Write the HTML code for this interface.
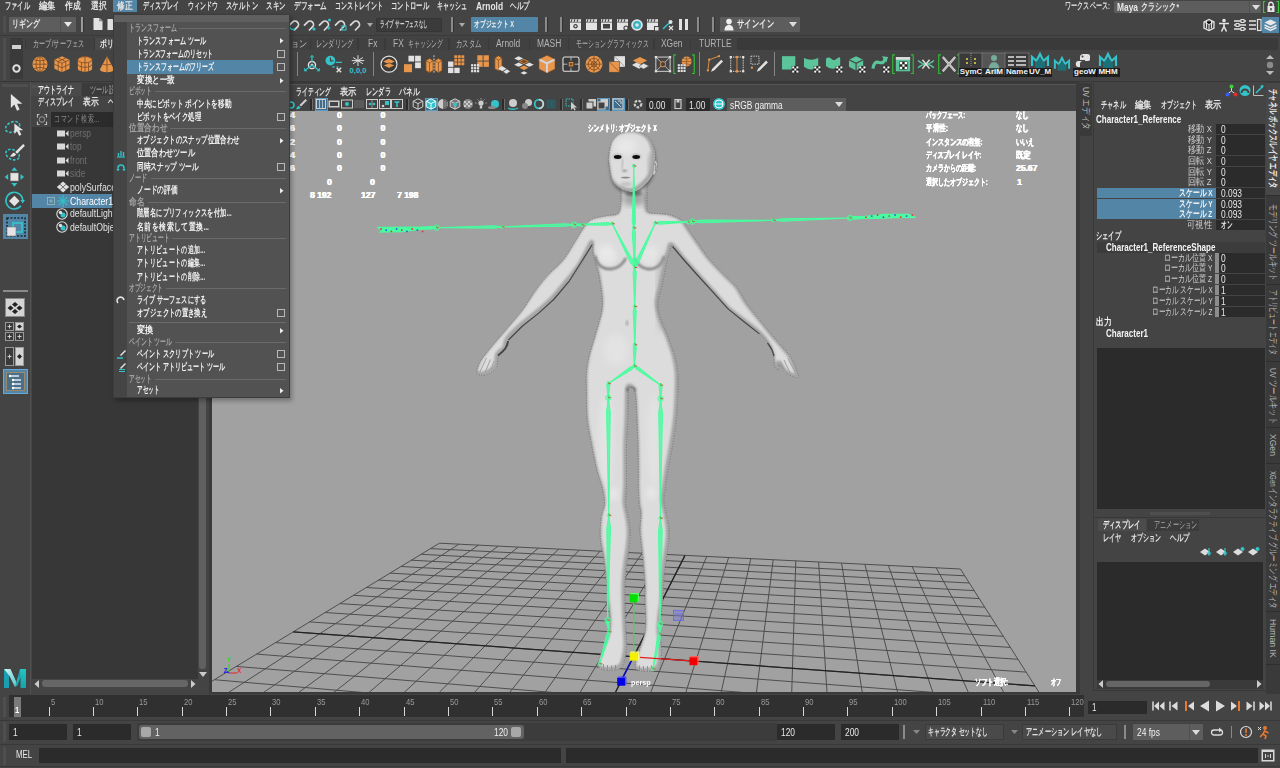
<!DOCTYPE html>
<html lang="ja">
<head>
<meta charset="utf-8">
<title>Autodesk Maya</title>
<style>
*{box-sizing:border-box;margin:0;padding:0}
html,body{width:1280px;height:768px;overflow:hidden;background:#444;font-family:"Liberation Sans",sans-serif;font-size:9px;color:#ddd}
.a{position:absolute}
.t{position:absolute;white-space:nowrap;overflow:visible;font-family:"Liberation Sans",sans-serif}
#root{position:absolute;left:0;top:0;width:1280px;height:768px;overflow:hidden;background:#444}
svg{overflow:visible}
</style>
</head>
<body>
<div id="root">

<!-- ===== TOP ===== -->
<div class="a" style="left:0px;top:0px;width:1280px;height:13px;background:#444;"></div>
<div class="a" style="left:113px;top:0px;width:24px;height:12px;background:#5285a6;"></div>
<div class="t" style="left:5px;top:0px;width:38.8px;text-align:justify;text-align-last:justify;text-justify:inter-character;line-height:12px;height:12px;font-size:9.5px;color:#e4e4e4;font-weight:bold;transform:scaleX(0.619);transform-origin:0 50%">ファイル</div>
<div class="t" style="left:39px;top:0px;width:19.4px;text-align:justify;text-align-last:justify;text-justify:inter-character;line-height:12px;height:12px;font-size:9.5px;color:#e4e4e4;font-weight:bold;transform:scaleX(0.825);transform-origin:0 50%">編集</div>
<div class="t" style="left:65px;top:0px;width:19.4px;text-align:justify;text-align-last:justify;text-justify:inter-character;line-height:12px;height:12px;font-size:9.5px;color:#e4e4e4;font-weight:bold;transform:scaleX(0.773);transform-origin:0 50%">作成</div>
<div class="t" style="left:91px;top:0px;width:19.4px;text-align:justify;text-align-last:justify;text-justify:inter-character;line-height:12px;height:12px;font-size:9.5px;color:#e4e4e4;font-weight:bold;transform:scaleX(0.773);transform-origin:0 50%">選択</div>
<div class="t" style="left:117px;top:0px;width:19.4px;text-align:justify;text-align-last:justify;text-justify:inter-character;line-height:12px;height:12px;font-size:9.5px;color:#e4e4e4;font-weight:bold;transform:scaleX(0.773);transform-origin:0 50%">修正</div>
<div class="t" style="left:143px;top:0px;width:58.1px;text-align:justify;text-align-last:justify;text-justify:inter-character;line-height:12px;height:12px;font-size:9.5px;color:#e4e4e4;font-weight:bold;transform:scaleX(0.602);transform-origin:0 50%">ディスプレイ</div>
<div class="t" style="left:188px;top:0px;width:48.5px;text-align:justify;text-align-last:justify;text-justify:inter-character;line-height:12px;height:12px;font-size:9.5px;color:#e4e4e4;font-weight:bold;transform:scaleX(0.598);transform-origin:0 50%">ウィンドウ</div>
<div class="t" style="left:226px;top:0px;width:48.5px;text-align:justify;text-align-last:justify;text-justify:inter-character;line-height:12px;height:12px;font-size:9.5px;color:#e4e4e4;font-weight:bold;transform:scaleX(0.639);transform-origin:0 50%">スケルトン</div>
<div class="t" style="left:266px;top:0px;width:29.1px;text-align:justify;text-align-last:justify;text-justify:inter-character;line-height:12px;height:12px;font-size:9.5px;color:#e4e4e4;font-weight:bold;transform:scaleX(0.653);transform-origin:0 50%">スキン</div>
<div class="t" style="left:294px;top:0px;width:48.5px;text-align:justify;text-align-last:justify;text-justify:inter-character;line-height:12px;height:12px;font-size:9.5px;color:#e4e4e4;font-weight:bold;transform:scaleX(0.66);transform-origin:0 50%">デフォーム</div>
<div class="t" style="left:335px;top:0px;width:77.5px;text-align:justify;text-align-last:justify;text-justify:inter-character;line-height:12px;height:12px;font-size:9.5px;color:#e4e4e4;font-weight:bold;transform:scaleX(0.606);transform-origin:0 50%">コンストレイント</div>
<div class="t" style="left:391px;top:0px;width:58.1px;text-align:justify;text-align-last:justify;text-justify:inter-character;line-height:12px;height:12px;font-size:9.5px;color:#e4e4e4;font-weight:bold;transform:scaleX(0.637);transform-origin:0 50%">コントロール</div>
<div class="t" style="left:437px;top:0px;width:48.5px;text-align:justify;text-align-last:justify;text-justify:inter-character;line-height:12px;height:12px;font-size:9.5px;color:#e4e4e4;font-weight:bold;transform:scaleX(0.598);transform-origin:0 50%">キャッシュ</div>
<div class="t" style="left:510px;top:0px;width:29.1px;text-align:justify;text-align-last:justify;text-justify:inter-character;line-height:12px;height:12px;font-size:9.5px;color:#e4e4e4;font-weight:bold;transform:scaleX(0.653);transform-origin:0 50%">ヘルプ</div>
<div class="t" style="left:476px;top:0px;line-height:12px;height:12px;font-size:10.5px;color:#e4e4e4;font-weight:bold;transform:scaleX(0.8);transform-origin:0 50%">Arnold</div>
<div class="t" style="left:1065px;top:0px;width:73.6px;text-align:justify;text-align-last:justify;text-justify:inter-character;line-height:12px;height:12px;font-size:9.5px;color:#d8d8d8;font-weight:bold;transform:scaleX(0.611);transform-origin:0 50%">ワークスペース:</div>
<div class="a" style="left:1114px;top:1px;width:147px;height:12px;background:#5d5d5d;border-radius:1px"></div>
<div class="a" style="left:1248.5px;top:1px;width:1px;height:12px;background:#505050;"></div>
<div class="t" style="left:1117px;top:1px;line-height:12px;height:12px;font-size:10.5px;color:#e8e8e8;font-weight:bold;transform:scaleX(0.8);transform-origin:0 50%">Maya</div>
<div class="t" style="left:1141px;top:1px;width:54.3px;text-align:justify;text-align-last:justify;text-justify:inter-character;line-height:12px;height:12px;font-size:9.5px;color:#e8e8e8;font-weight:bold;transform:scaleX(0.7);transform-origin:0 50%">クラシック*</div>
<svg class="a" style="left:1251.5px;top:5px;" width="7" height="4.5" viewBox="0 0 7 4.5"><path d="M0 0h8l-4 5z" fill="#ddd"/></svg>
<svg class="a" style="left:1262px;top:0px;" width="18" height="14" viewBox="0 0 18 14"><path d="M3.5 1.5h-2v11h2M14.500 1.5h2v11h-2" fill="none" stroke="#3fc23f" stroke-width="1.2"/><rect x="5.5" y="6" width="7" height="6" fill="#e6e6e6"/><path d="M6.800 6.500v-2a2.200 2.200 0 0 1 4.400 0v2" fill="none" stroke="#e6e6e6" stroke-width="1.400"/><rect x="8.300" y="8" width="1.400" height="2.500" fill="#444"/></svg>
<div class="a" style="left:0px;top:13px;width:1280px;height:23px;background:#444;"></div>
<div class="a" style="left:3px;top:16px;width:3px;height:17px;background:transparent;background-image:radial-gradient(#5a5a5a 0.600px,transparent 0.800px);background-size:2px 2px"></div>
<div class="a" style="left:9px;top:17px;width:67px;height:15px;background:#5d5d5d;border-radius:1px"></div>
<div class="a" style="left:60px;top:17px;width:1px;height:15px;background:#505050;"></div>
<div class="t" style="left:12px;top:18px;width:38.8px;text-align:justify;text-align-last:justify;text-justify:inter-character;line-height:12px;height:12px;font-size:9.5px;color:#e8e8e8;font-weight:bold;transform:scaleX(0.696);transform-origin:0 50%">リギング</div>
<svg class="a" style="left:64px;top:22px;" width="8" height="5" viewBox="0 0 8 5"><path d="M0 0h8l-4 5z" fill="#e8e8e8"/></svg>
<div class="a" style="left:81px;top:17px;width:2px;height:15px;background:#9a9a9a;"></div>
<div class="a" style="left:83px;top:17px;width:1px;height:15px;background:#333;"></div>
<svg class="a" style="left:92px;top:17px;" width="12" height="14" viewBox="0 0 12 14"><path d="M1.500 1h6l3 3v9h-9z" fill="#e2e2e2"/><path d="M7.500 1v3h3" fill="#999" stroke="#777" stroke-width=".6"/></svg>
<svg class="a" style="left:106px;top:17px;" width="12" height="14" viewBox="0 0 12 14"><path d="M1.500 2h5l1.500 2h3v9h-9.500z" fill="#e2e2e2"/></svg>
<svg class="a" style="left:287.8px;top:18px;" width="14" height="13" viewBox="0 0 14 13"><g transform="rotate(45 7 6.500)"><path d="M3.500 11.500v-5a3.500 3.500 0 0 1 7 0v5" fill="none" stroke="#dadada" stroke-width="1.700"/></g><path d="M1.500 8.500q1 4 5.500 2.500" fill="none" stroke="#34c3c9" stroke-width="1.400"/></svg>
<svg class="a" style="left:302.6px;top:18px;" width="14" height="13" viewBox="0 0 14 13"><g transform="rotate(45 7 6.500)"><path d="M3.500 11.500v-5a3.500 3.500 0 0 1 7 0v5" fill="none" stroke="#dadada" stroke-width="1.700"/></g><circle cx="11" cy="11" r="1.600" fill="#34c3c9"/></svg>
<svg class="a" style="left:318px;top:18px;" width="14" height="13" viewBox="0 0 14 13"><g transform="rotate(45 7 6.500)"><path d="M3.500 11.500v-5a3.500 3.500 0 0 1 7 0v5" fill="none" stroke="#dadada" stroke-width="1.700"/></g><circle cx="11.500" cy="2" r="1.500" fill="#34c3c9"/><path d="M9 10h3.500M10.800 8.300v3.500" stroke="#34c3c9" stroke-width="1"/></svg>
<svg class="a" style="left:333.5px;top:18px;" width="14" height="13" viewBox="0 0 14 13"><g transform="rotate(45 7 6.500)"><path d="M3.500 11.500v-5a3.500 3.500 0 0 1 7 0v5" fill="none" stroke="#dadada" stroke-width="1.700"/></g><rect x="8" y="8" width="4" height="4" fill="none" stroke="#34c3c9" stroke-width="1.100"/></svg>
<svg class="a" style="left:349px;top:18px;" width="14" height="13" viewBox="0 0 14 13"><g transform="rotate(45 7 6.500)"><path d="M3.500 11.500v-5a3.500 3.500 0 0 1 7 0v5" fill="none" stroke="#dadada" stroke-width="1.700"/></g></svg>
<svg class="a" style="left:367px;top:23px;" width="6" height="4" viewBox="0 0 6 4"><path d="M0 0h6l-3 4z" fill="#aaa"/></svg>
<div class="a" style="left:376px;top:18px;width:66px;height:14px;background:#3b3b3b;border:1px solid #353535;border-radius:1px"></div>
<div class="t" style="left:380px;top:18px;width:94.6px;text-align:justify;text-align-last:justify;text-justify:inter-character;line-height:12px;height:12px;font-size:9px;color:#cfcfcf;font-weight:bold;transform:scaleX(0.507);transform-origin:0 50%">ライブ サーフェスなし</div>
<div class="a" style="left:451px;top:17px;width:2px;height:15px;background:#8a8a8a;"></div>
<div class="a" style="left:453px;top:17px;width:1px;height:15px;background:#333;"></div>
<svg class="a" style="left:459px;top:23px;" width="6" height="4" viewBox="0 0 6 4"><path d="M0 0h6l-3 4z" fill="#aaa"/></svg>
<div class="a" style="left:471px;top:17px;width:67px;height:15px;background:#5285a6;border-radius:1px"></div>
<div class="t" style="left:474px;top:18px;width:63.3px;text-align:justify;text-align-last:justify;text-justify:inter-character;line-height:12px;height:12px;font-size:9px;color:#f0f0f0;font-weight:bold;transform:scaleX(0.632);transform-origin:0 50%">オブジェクト X</div>
<div class="a" style="left:545px;top:17px;width:2px;height:15px;background:#8a8a8a;"></div>
<div class="a" style="left:547px;top:17px;width:1px;height:15px;background:#333;"></div>
<div class="a" style="left:560px;top:17px;width:2px;height:15px;background:#8a8a8a;"></div>
<div class="a" style="left:562px;top:17px;width:1px;height:15px;background:#333;"></div>
<div class="a" style="left:697px;top:17px;width:2px;height:15px;background:#8a8a8a;"></div>
<div class="a" style="left:699px;top:17px;width:1px;height:15px;background:#333;"></div>
<div class="a" style="left:712px;top:17px;width:2px;height:15px;background:#8a8a8a;"></div>
<div class="a" style="left:714px;top:17px;width:1px;height:15px;background:#333;"></div>
<svg class="a" style="left:569px;top:18px;" width="13" height="13" viewBox="0 0 13 13"><rect x="1" y="4.500" width="11" height="7.500" fill="#e4e4e4"/><path d="M1 1.200h11v2.600h-11z" fill="#e4e4e4"/><path d="M3 1.200l-1 2.600M6 1.200l-1 2.600M9 1.200l-1 2.600" stroke="#444" stroke-width="1.100"/><circle cx="6.500" cy="8.200" r="2.200" fill="#444"/><circle cx="6.500" cy="8.200" r="1" fill="#e4e4e4"/></svg>
<svg class="a" style="left:585px;top:18px;" width="13" height="13" viewBox="0 0 13 13"><rect x="1" y="4.500" width="11" height="7.500" fill="#e4e4e4"/><path d="M1 1.200h11v2.600h-11z" fill="#e4e4e4"/><path d="M3 1.200l-1 2.600M6 1.200l-1 2.600M9 1.200l-1 2.600" stroke="#444" stroke-width="1.100"/></svg>
<svg class="a" style="left:600px;top:18px;" width="13" height="13" viewBox="0 0 13 13"><rect x="1" y="4.500" width="11" height="7.500" fill="#e4e4e4"/><path d="M1 1.200h11v2.600h-11z" fill="#e4e4e4"/><path d="M3 1.200l-1 2.600M6 1.200l-1 2.600M9 1.200l-1 2.600" stroke="#444" stroke-width="1.100"/><rect x="3" y="6" width="7" height="4.500" fill="#444"/></svg>
<svg class="a" style="left:616px;top:18px;" width="13" height="13" viewBox="0 0 13 13"><rect x="1" y="4.500" width="11" height="7.500" fill="#e4e4e4"/><path d="M1 1.200h11v2.600h-11z" fill="#e4e4e4"/><path d="M3 1.200l-1 2.600M6 1.200l-1 2.600M9 1.200l-1 2.600" stroke="#444" stroke-width="1.100"/><circle cx="10" cy="10" r="2.600" fill="#444"/><circle cx="10" cy="10" r="1.500" fill="#e4e4e4"/></svg>
<svg class="a" style="left:630px;top:18px;" width="14" height="14" viewBox="0 0 14 14"><circle cx="7" cy="7" r="5.800" fill="#e4e4e4"/><circle cx="7" cy="7" r="4" fill="#34b4c4"/><circle cx="7" cy="7" r="1.800" fill="#e4e4e4"/></svg>
<svg class="a" style="left:646px;top:18px;" width="13" height="13" viewBox="0 0 13 13"><rect x="1" y="4.500" width="11" height="7.500" fill="#e4e4e4"/><path d="M1 1.200h11v2.600h-11z" fill="#e4e4e4"/><path d="M3 1.200l-1 2.600M6 1.200l-1 2.600M9 1.200l-1 2.600" stroke="#444" stroke-width="1.100"/><rect x="8" y="8" width="5" height="5" fill="#444"/><rect x="9" y="9" width="3.500" height="3.500" fill="#e4e4e4"/></svg>
<svg class="a" style="left:661px;top:18px;" width="14" height="13" viewBox="0 0 14 13"><path d="M2 11l4-4M6 7l5-4" stroke="#34c3c9" stroke-width="1.600"/><circle cx="9.500" cy="4" r="2" fill="#e4e4e4"/><path d="M8 8l4 4M12 8l-4 4" stroke="#e4e4e4" stroke-width="1.200"/></svg>
<div class="a" style="left:679px;top:19px;width:3px;height:11px;background:#e4e4e4;"></div>
<div class="a" style="left:685px;top:19px;width:3px;height:11px;background:#e4e4e4;"></div>
<div class="a" style="left:720px;top:17px;width:80px;height:15px;background:#5d5d5d;border-radius:1px"></div>
<svg class="a" style="left:724px;top:18px;" width="10" height="13" viewBox="0 0 10 13"><circle cx="5" cy="3.600" r="2.800" fill="#efefef"/><path d="M0.500 12.500c0-4 2-5.500 4.500-5.500s4.500 1.500 4.500 5.500z" fill="#efefef"/></svg>
<div class="t" style="left:737px;top:18px;width:51.0px;text-align:justify;text-align-last:justify;text-justify:inter-character;line-height:12px;height:12px;font-size:10px;color:#f0f0f0;font-weight:bold;transform:scaleX(0.725);transform-origin:0 50%">サインイン</div>
<svg class="a" style="left:789px;top:22px;" width="8" height="5" viewBox="0 0 8 5"><path d="M0 0h8l-4 5z" fill="#ddd"/></svg>
<svg class="a" style="left:1202px;top:18px;" width="14" height="14" viewBox="0 0 14 14"><path d="M2 4l5-2.500 5 2.500v6l-5 2.500-5-2.500z" fill="none" stroke="#e4e4e4" stroke-width="1.300"/><path d="M2 4l5 2.500 5-2.500M7 6.500v6M4.500 2.800v7.500M9.500 2.800v7.500" stroke="#e4e4e4" stroke-width="1"/></svg>
<svg class="a" style="left:1217px;top:18px;" width="14" height="14" viewBox="0 0 14 14"><circle cx="7" cy="2.500" r="1.800" fill="#e4e4e4"/><path d="M2 5.500h10M7 5v4M7 8.500l-2.500 5M7 8.500l2.500 5" stroke="#e4e4e4" stroke-width="1.600" fill="none"/></svg>
<svg class="a" style="left:1233px;top:18px;" width="14" height="14" viewBox="0 0 14 14"><path d="M1 3h12M1 7h12M1 11h12" stroke="#e4e4e4" stroke-width="1.600"/><rect x="8" y="1.500" width="3" height="3" fill="#444" stroke="#e4e4e4"/><rect x="3" y="5.500" width="3" height="3" fill="#444" stroke="#e4e4e4"/><rect x="8" y="9.500" width="3" height="3" fill="#444" stroke="#e4e4e4"/></svg>
<svg class="a" style="left:1248px;top:18px;" width="14" height="14" viewBox="0 0 14 14"><path d="M1 3h7M1 7h7M1 11h7" stroke="#e4e4e4" stroke-width="1.600"/><rect x="9.500" y="1.500" width="3.500" height="11" fill="none" stroke="#e4e4e4" stroke-width="1.200"/></svg>
<div class="a" style="left:1262px;top:17px;width:17px;height:16px;background:#5285a6;"></div>
<svg class="a" style="left:1263px;top:18px;" width="15" height="14" viewBox="0 0 15 14"><path d="M7.500 1.500l6 3-6 3-6-3z" fill="#e8e8e8"/><path d="M1.500 7l6 3 6-3M1.500 9.500l6 3 6-3" fill="none" stroke="#e8e8e8" stroke-width="1.400"/></svg>
<!-- ===== SHELF ===== -->
<div class="a" style="left:0px;top:36px;width:1280px;height:46px;background:#444;"></div>
<div class="a" style="left:0px;top:34.5px;width:1280px;height:1.5px;background:#3a3a3a;"></div>
<div class="a" style="left:25px;top:38px;width:1253px;height:11.5px;background:#3a3a3a;"></div>
<div class="a" style="left:3px;top:38px;width:3px;height:42px;background:transparent;background-image:radial-gradient(#5a5a5a 0.600px,transparent 0.800px);background-size:2px 2px"></div>
<div class="a" style="left:10px;top:38px;width:13px;height:41px;background:#3a3a3a;"></div>
<div class="a" style="left:12px;top:45px;width:9px;height:3.5px;background:#cfcfcf;"></div>
<svg class="a" style="left:11px;top:63px;" width="11" height="11" viewBox="0 0 11 11"><circle cx="5.500" cy="5.500" r="3.200" fill="none" stroke="#e0e0e0" stroke-width="2"/></svg>
<div class="a" style="left:25.5px;top:38px;width:68.0px;height:11.5px;background:#414141;"></div>
<div class="t" style="left:32.5px;top:37px;width:83.3px;text-align:justify;text-align-last:justify;text-justify:inter-character;line-height:13px;height:13px;font-size:9.5px;color:#b4b4b4;font-weight:normal;transform:scaleX(0.618);transform-origin:0 50%">カーブ/サーフェス</div>
<div class="a" style="left:95.0px;top:38px;width:52.0px;height:11.5px;background:#4a4a4a;"></div>
<div class="t" style="left:99.5px;top:37px;width:38.8px;text-align:justify;text-align-last:justify;text-justify:inter-character;line-height:13px;height:13px;font-size:9.5px;color:#f0f0f0;font-weight:bold;transform:scaleX(0.683);transform-origin:0 50%">ポリゴン</div>
<div class="a" style="left:243.5px;top:38px;width:66.0px;height:11.5px;background:#414141;"></div>
<div class="t" style="left:250px;top:37px;width:67.8px;text-align:justify;text-align-last:justify;text-justify:inter-character;line-height:13px;height:13px;font-size:9.5px;color:#b4b4b4;font-weight:normal;transform:scaleX(0.811);transform-origin:0 50%">アニメーション</div>
<div class="a" style="left:311.0px;top:38px;width:46.0px;height:11.5px;background:#414141;"></div>
<div class="t" style="left:316px;top:37px;width:58.1px;text-align:justify;text-align-last:justify;text-justify:inter-character;line-height:13px;height:13px;font-size:9.5px;color:#b4b4b4;font-weight:normal;transform:scaleX(0.62);transform-origin:0 50%">レンダリング</div>
<div class="a" style="left:358.5px;top:38px;width:25.5px;height:11.5px;background:#414141;"></div>
<div class="t" style="left:368px;top:37px;line-height:13px;height:13px;font-size:10px;color:#b4b4b4;font-weight:normal;transform:scaleX(0.84);transform-origin:0 50%">Fx</div>
<div class="a" style="left:385.5px;top:38px;width:62.5px;height:11.5px;background:#414141;"></div>
<div class="t" style="left:393px;top:37px;line-height:13px;height:13px;font-size:10px;color:#b4b4b4;font-weight:normal;transform:scaleX(0.84);transform-origin:0 50%">FX</div>
<div class="t" style="left:408px;top:37px;width:58.1px;text-align:justify;text-align-last:justify;text-justify:inter-character;line-height:13px;height:13px;font-size:9.5px;color:#b4b4b4;font-weight:normal;transform:scaleX(0.585);transform-origin:0 50%">キャッシング</div>
<div class="a" style="left:449.5px;top:38px;width:38.0px;height:11.5px;background:#414141;"></div>
<div class="t" style="left:456px;top:37px;width:38.8px;text-align:justify;text-align-last:justify;text-justify:inter-character;line-height:13px;height:13px;font-size:9.5px;color:#b4b4b4;font-weight:normal;transform:scaleX(0.644);transform-origin:0 50%">カスタム</div>
<div class="a" style="left:489.0px;top:38px;width:39.5px;height:11.5px;background:#414141;"></div>
<div class="t" style="left:496px;top:37px;line-height:13px;height:13px;font-size:10px;color:#b4b4b4;font-weight:normal;transform:scaleX(0.84);transform-origin:0 50%">Arnold</div>
<div class="a" style="left:530.0px;top:38px;width:37.5px;height:11.5px;background:#414141;"></div>
<div class="t" style="left:537px;top:37px;line-height:13px;height:13px;font-size:10px;color:#b4b4b4;font-weight:normal;transform:scaleX(0.84);transform-origin:0 50%">MASH</div>
<div class="a" style="left:569.0px;top:38px;width:84.0px;height:11.5px;background:#414141;"></div>
<div class="t" style="left:576px;top:37px;width:119.2px;text-align:justify;text-align-last:justify;text-justify:inter-character;line-height:13px;height:13px;font-size:9.5px;color:#b4b4b4;font-weight:normal;transform:scaleX(0.596);transform-origin:0 50%">モーション グラフィックス</div>
<div class="a" style="left:654.5px;top:38px;width:35.0px;height:11.5px;background:#414141;"></div>
<div class="t" style="left:661px;top:37px;line-height:13px;height:13px;font-size:10px;color:#b4b4b4;font-weight:normal;transform:scaleX(0.84);transform-origin:0 50%">XGen</div>
<div class="a" style="left:691.0px;top:38px;width:45.5px;height:11.5px;background:#414141;"></div>
<div class="t" style="left:699px;top:37px;line-height:13px;height:13px;font-size:10px;color:#b4b4b4;font-weight:normal;transform:scaleX(0.84);transform-origin:0 50%">TURTLE</div>
<svg class="a" style="left:27.5px;top:52px;" width="24" height="24" viewBox="0 0 24 24"><g transform="translate(1.300 1.500) scale(.89)"><ellipse cx="12" cy="12" rx="8.500" ry="8.500" fill="#e8964c"/><path d="M3.500 12h17M12 3.500v17M5 7q7 3 14 0M5 17q7-3 14 0" stroke="#7a4a1f" stroke-width=".9" fill="none"/><ellipse cx="12" cy="12" rx="4.500" ry="8.500" fill="none" stroke="#7a4a1f" stroke-width=".9"/></g></svg>
<svg class="a" style="left:50px;top:52px;" width="24" height="24" viewBox="0 0 24 24"><g transform="translate(1.300 1.500) scale(.89)"><path d="M12 3l8.500 4v10l-8.500 4-8.500-4v-10z" fill="#e8964c"/><path d="M3.500 7l8.500 4 8.500-4M12 11v10M3.500 12l8.500 4 8.500-4M7.700 5l8.500 4v10M16.300 5l-8.500 4v10" stroke="#7a4a1f" stroke-width=".9" fill="none"/></g></svg>
<svg class="a" style="left:73px;top:52px;" width="24" height="24" viewBox="0 0 24 24"><g transform="translate(1.300 1.500) scale(.89)"><path d="M4 7v10a8 3.500 0 0 0 16 0v-10z" fill="#e8964c"/><ellipse cx="12" cy="7" rx="8" ry="3.500" fill="#e8964c" stroke="#7a4a1f" stroke-width=".9"/><path d="M4 12a8 3.500 0 0 0 16 0M12 3.500v7M8 10.500v10M16 10.500v10M12 10.500v10" stroke="#7a4a1f" stroke-width=".9" fill="none"/></g></svg>
<svg class="a" style="left:95px;top:52px;" width="24" height="24" viewBox="0 0 24 24"><g transform="translate(1.300 1.500) scale(.89)"><path d="M12 3l8 15a8 3 0 0 1-16 0z" fill="#e8964c"/><path d="M12 3v18M7 12q5 2 10 0" stroke="#7a4a1f" stroke-width=".9" fill="none"/></g></svg>
<div class="a" style="left:297px;top:52px;width:1px;height:24px;background:#858585;"></div>
<svg class="a" style="left:300px;top:52px;" width="24" height="24" viewBox="0 0 24 24"><g transform="translate(1.300 1.500) scale(.89)"><circle cx="12" cy="13" r="4" fill="none" stroke="#e2e2e2" stroke-width="1.500"/><circle cx="12" cy="13" r="1.600" fill="#e2e2e2"/><path d="M12 2.500v7M12 13l-8 6M12 13l8 6" stroke="#34c3c9" stroke-width="1.400"/><path d="M10 4.500l2-2.500 2 2.500M3.500 16.500l0 3h3M20.500 16.500v3h-3" stroke="#34c3c9" stroke-width="1.100" fill="none"/></g></svg>
<svg class="a" style="left:322px;top:52px;" width="24" height="24" viewBox="0 0 24 24"><g transform="translate(1.300 1.500) scale(.89)"><circle cx="8" cy="8" r="5.500" fill="#34c3c9"/><path d="M8 4.500v3.800h3.300" stroke="#444" stroke-width="1.300" fill="none"/><path d="M14 10h7M10 15h3M15 15h2" stroke="#34c3c9" stroke-width="1.200"/><path d="M15 16l5 5M20 16l-5 5" stroke="#e2e2e2" stroke-width="1.600"/></g></svg>
<svg class="a" style="left:346px;top:52px;" width="24" height="24" viewBox="0 0 24 24"><g transform="translate(1.300 1.500) scale(.89)"><path d="M12 2v12M6.500 4.500l11 7M17.500 4.500l-11 7M5 8h14" stroke="#e2e2e2" stroke-width="1.100"/><text x="12" y="22" font-family="Liberation Sans" font-size="8.500" font-weight="bold" fill="#34c3c9" text-anchor="middle">0,0,0</text></g></svg>
<div class="a" style="left:373px;top:52px;width:1px;height:24px;background:#858585;"></div>
<svg class="a" style="left:377px;top:52px;" width="24" height="24" viewBox="0 0 24 24"><g transform="translate(1.300 1.500) scale(.89)"><circle cx="12" cy="12" r="9" fill="#3a3a3a" stroke="#e2e2e2" stroke-width="1.300"/><path d="M12 6l6.500 3-6.500 3-6.500-3z" fill="#e8964c"/><path d="M12 10.500l6.500 3-6.500 3-6.500-3z" fill="#e8964c" stroke="#3a3a3a" stroke-width=".7"/></g></svg>
<svg class="a" style="left:400px;top:52px;" width="24" height="24" viewBox="0 0 24 24"><g transform="translate(1.300 1.500) scale(.89)"><rect x="8" y="2.500" width="6.500" height="6.500" fill="#e2e2e2"/><rect x="15.500" y="2.500" width="6.500" height="6.500" fill="#e2e2e2"/><rect x="15.500" y="10" width="6.500" height="6.500" fill="#e2e2e2"/><rect x="3" y="12" width="9" height="9" fill="#e8964c"/></g></svg>
<svg class="a" style="left:422px;top:52px;" width="24" height="24" viewBox="0 0 24 24"><g transform="translate(1.300 1.500) scale(.89)"><path d="M3 8l4-2.500 4 2.500v11l-4 2.500-4-2.500z" fill="#e8964c" stroke="#7a4a1f" stroke-width=".8"/><path d="M13 8l4-2.500 4 2.500v11l-4 2.500-4-2.500z" fill="#e8964c" stroke="#7a4a1f" stroke-width=".8"/><path d="M3 8l4 2.500 4-2.500M7 10.500v11M13 8l4 2.500 4-2.500M17 10.500v11" stroke="#7a4a1f" stroke-width=".8" fill="none"/><path d="M12 2v21" stroke="#e2e2e2" stroke-width="1" stroke-dasharray="2 1.500"/></g></svg>
<svg class="a" style="left:445px;top:52px;" width="24" height="24" viewBox="0 0 24 24"><g transform="translate(1.300 1.500) scale(.89)"><rect x="9" y="2" width="3.2" height="3.2" fill="#e8964c"/><rect x="9" y="6" width="3.2" height="3.2" fill="#e8964c"/><rect x="9" y="10" width="3.2" height="3.2" fill="#e8964c"/><rect x="13" y="2" width="3.2" height="3.2" fill="#e8964c"/><rect x="13" y="6" width="3.2" height="3.2" fill="#e8964c"/><rect x="13" y="10" width="3.2" height="3.2" fill="#e8964c"/><rect x="17" y="2" width="3.2" height="3.2" fill="#e8964c"/><rect x="17" y="6" width="3.2" height="3.2" fill="#e8964c"/><rect x="17" y="10" width="3.2" height="3.2" fill="#e8964c"/><rect x="2" y="9" width="6" height="6" fill="#e2e2e2"/><rect x="2" y="16" width="6" height="6" fill="#e2e2e2"/><rect x="9" y="16" width="6" height="6" fill="#e2e2e2"/></g></svg>
<svg class="a" style="left:468px;top:52px;" width="24" height="24" viewBox="0 0 24 24"><g transform="translate(1.300 1.500) scale(.89)"><rect x="9" y="2" width="6" height="6" fill="#e8964c"/><rect x="16" y="2" width="6" height="6" fill="#e8964c"/><rect x="16" y="9" width="6" height="6" fill="#e8964c"/><rect x="9" y="9" width="6" height="6" fill="#e8964c"/><rect x="2.0" y="12.0" width="2.5" height="2.5" fill="#e2e2e2"/><rect x="2.0" y="15.3" width="2.5" height="2.5" fill="#e2e2e2"/><rect x="2.0" y="18.6" width="2.5" height="2.5" fill="#e2e2e2"/><rect x="5.3" y="12.0" width="2.5" height="2.5" fill="#e2e2e2"/><rect x="5.3" y="15.3" width="2.5" height="2.5" fill="#e2e2e2"/><rect x="5.3" y="18.6" width="2.5" height="2.5" fill="#e2e2e2"/><rect x="8.6" y="12.0" width="2.5" height="2.5" fill="#e2e2e2"/><rect x="8.6" y="15.3" width="2.5" height="2.5" fill="#e2e2e2"/><rect x="8.6" y="18.6" width="2.5" height="2.5" fill="#e2e2e2"/></g></svg>
<svg class="a" style="left:490px;top:52px;" width="24" height="24" viewBox="0 0 24 24"><g transform="translate(1.300 1.500) scale(.89)"><path d="M4 5l4-2.500 4 2.500v12l-4 2.500-4-2.500z" fill="#e8964c" stroke="#7a4a1f" stroke-width=".8"/><path d="M4 5l4 2.500 4-2.500M8 7.500v12" stroke="#7a4a1f" stroke-width=".8" fill="none"/><path d="M12 14l5 3-4.500 3-5-3z" fill="#e2e2e2"/><path d="M17.500 17.500l4 2.500-4.500 3-4-2.500z" fill="#e2e2e2" stroke="#444" stroke-width=".5"/></g></svg>
<svg class="a" style="left:512px;top:52px;" width="24" height="24" viewBox="0 0 24 24"><g transform="translate(1.300 1.500) scale(.89)"><path d="M6 3l5 2.500-5 2.500-5-2.500z" fill="#e2e2e2"/><path d="M12 6.500l5 2.500-5 2.500-5-2.500z" fill="#7a4a1f" stroke="#e8964c" stroke-width=".8"/><path d="M18 10l5 2.500-5 2.500-5-2.500z" fill="#e2e2e2"/><path d="M6 10l5 2.500-5 2.500-5-2.500z" fill="#e2e2e2"/><path d="M12 13.500l5 2.500-5 2.500-5-2.500z" fill="#e8964c"/><path d="M12 20l4 2-4 1.500-4-1.500z" fill="#e2e2e2"/></g></svg>
<svg class="a" style="left:535px;top:52px;" width="24" height="24" viewBox="0 0 24 24"><g transform="translate(1.300 1.500) scale(.89)"><path d="M12 2l9 4.500v11l-9 4.500-9-4.500v-11z" fill="#e8964c"/><path d="M3 6.500l9 4.500 9-4.500M12 11v11" stroke="#cfd6e0" stroke-width="2.200" fill="none"/><path d="M12 2l9 4.500v11l-9 4.500-9-4.500v-11z" fill="none" stroke="#7a4a1f" stroke-width=".6"/></g></svg>
<svg class="a" style="left:559px;top:52px;" width="24" height="24" viewBox="0 0 24 24"><g transform="translate(1.300 1.500) scale(.89)"><rect x="3" y="4" width="18" height="16" rx="2" fill="#3a3a3a" stroke="#e2e2e2" stroke-width="1.200"/><rect x="10" y="10" width="4" height="4" fill="#7a4a1f" stroke="#e8964c" stroke-width="1"/><path d="M3 12h5M16 12h5M12 4v4M12 16v4" stroke="#e2e2e2" stroke-width=".8"/></g></svg>
<svg class="a" style="left:582px;top:52px;" width="24" height="24" viewBox="0 0 24 24"><g transform="translate(1.300 1.500) scale(.89)"><circle cx="12" cy="12" r="9.500" fill="#e8964c"/><circle cx="12" cy="12" r="6.500" fill="none" stroke="#7a4a1f" stroke-width=".9"/><circle cx="12" cy="12" r="3" fill="none" stroke="#7a4a1f" stroke-width=".9"/><path d="M2.500 12h19M12 2.500v19M5.300 5.300l13.400 13.400M18.700 5.300l-13.400 13.400" stroke="#7a4a1f" stroke-width=".9"/></g></svg>
<svg class="a" style="left:605px;top:52px;" width="24" height="24" viewBox="0 0 24 24"><g transform="translate(1.300 1.500) scale(.89)"><rect x="9" y="3" width="12" height="12" fill="#e2e2e2"/><path d="M9 3l12 12" stroke="#888" stroke-width=".8"/><rect x="3" y="9" width="12" height="12" fill="#e8964c" stroke="#444" stroke-width=".6"/><path d="M3 9l12 12" stroke="#7a4a1f" stroke-width=".8"/></g></svg>
<svg class="a" style="left:628px;top:52px;" width="24" height="24" viewBox="0 0 24 24"><g transform="translate(1.300 1.500) scale(.89)"><path d="M12 4l8 4-8 4-8-4z" fill="#e8964c"/><path d="M8 10l8 4-5 3-8-4z" fill="#e2e2e2"/><path d="M16 11l6 3-6 3.500-5-3z" fill="#e2e2e2" stroke="#444" stroke-width=".5"/></g></svg>
<svg class="a" style="left:651px;top:52px;" width="24" height="24" viewBox="0 0 24 24"><g transform="translate(1.300 1.500) scale(.89)"><rect x="4" y="4" width="16" height="16" fill="none" stroke="#e2e2e2" stroke-width="1"/><path d="M4 4l16 16M20 4l-16 16" stroke="#e2e2e2" stroke-width=".8"/><circle cx="12" cy="12" r="3" fill="#444" stroke="#e8964c" stroke-width="1"/><rect x="2.8" y="2.8" width="2.500" height="2.500" fill="#e2e2e2"/><rect x="2.8" y="18.7" width="2.500" height="2.500" fill="#e2e2e2"/><rect x="18.7" y="2.8" width="2.500" height="2.500" fill="#e2e2e2"/><rect x="18.7" y="18.7" width="2.500" height="2.500" fill="#e2e2e2"/></g></svg>
<svg class="a" style="left:671.5px;top:52px;" width="24" height="24" viewBox="0 0 24 24"><g transform="translate(1.300 1.500) scale(.89)"><path d="M3 1.500h-2.500v21h2.500M21 1.500h2.500v21h-2.500" fill="none" stroke="#2fbf2f" stroke-width="1.300"/><circle cx="15" cy="9" r="5.500" fill="#e8964c"/><path d="M9.500 9h11M15 3.500v11M11 5.500q4 2 8 0M11 12.500q4-2 8 0" stroke="#7a4a1f" stroke-width=".7" fill="none"/><rect x="5.0" y="12.0" width="2.4000000000000004" height="2.4000000000000004" fill="#e2e2e2"/><rect x="5.0" y="15.2" width="2.4000000000000004" height="2.4000000000000004" fill="#e2e2e2"/><rect x="5.0" y="18.4" width="2.4000000000000004" height="2.4000000000000004" fill="#e2e2e2"/><rect x="8.2" y="12.0" width="2.4000000000000004" height="2.4000000000000004" fill="#e2e2e2"/><rect x="8.2" y="15.2" width="2.4000000000000004" height="2.4000000000000004" fill="#e2e2e2"/><rect x="8.2" y="18.4" width="2.4000000000000004" height="2.4000000000000004" fill="#e2e2e2"/><rect x="11.4" y="12.0" width="2.4000000000000004" height="2.4000000000000004" fill="#e2e2e2"/><rect x="11.4" y="15.2" width="2.4000000000000004" height="2.4000000000000004" fill="#e2e2e2"/><rect x="11.4" y="18.4" width="2.4000000000000004" height="2.4000000000000004" fill="#e2e2e2"/></g></svg>
<div class="a" style="left:699px;top:52px;width:1px;height:24px;background:#858585;"></div>
<svg class="a" style="left:703px;top:52px;" width="24" height="24" viewBox="0 0 24 24"><g transform="translate(1.300 1.500) scale(.89)"><path d="M4 19l1.500-12 11-4" fill="none" stroke="#e8964c" stroke-width="1"/><circle cx="5.500" cy="7" r="1.300" fill="#e8964c"/><circle cx="16.500" cy="3" r="1.300" fill="#e8964c"/><circle cx="4" cy="19" r="1.300" fill="#e8964c"/><path d="M9 17l10-10 2 2-10 10-3.500 1.500z" fill="#e2e2e2"/></g></svg>
<svg class="a" style="left:725px;top:52px;" width="24" height="24" viewBox="0 0 24 24"><g transform="translate(1.300 1.500) scale(.89)"><rect x="5" y="4" width="14" height="16" fill="none" stroke="#e2e2e2" stroke-width="1" stroke-dasharray="1.500 1"/><path d="M12 3v18" stroke="#e8964c" stroke-width="1"/><circle cx="12" cy="4" r="1.500" fill="#e8964c"/><circle cx="12" cy="20" r="1.500" fill="#e8964c"/><rect x="3.8" y="2.8" width="2.500" height="2.500" fill="#e2e2e2"/><rect x="3.8" y="18.7" width="2.500" height="2.500" fill="#e2e2e2"/><rect x="17.7" y="2.8" width="2.500" height="2.500" fill="#e2e2e2"/><rect x="17.7" y="18.7" width="2.500" height="2.500" fill="#e2e2e2"/></g></svg>
<svg class="a" style="left:747px;top:52px;" width="24" height="24" viewBox="0 0 24 24"><g transform="translate(1.300 1.500) scale(.89)"><rect x="3" y="3" width="9" height="9" fill="none" stroke="#e2e2e2" stroke-width="1" stroke-dasharray="1.500 1.200"/><circle cx="4" cy="16" r="1.300" fill="#e8964c"/><path d="M11 17l9-9 2 2-9 9-3.500 1.500z" fill="#e2e2e2"/></g></svg>
<div class="a" style="left:774px;top:52px;width:1px;height:24px;background:#858585;"></div>
<svg class="a" style="left:778px;top:52px;" width="24" height="24" viewBox="0 0 24 24"><g transform="translate(1.300 1.500) scale(.89)"><rect x="3" y="3" width="15" height="15" fill="#5cc49a"/><rect x="14" y="14" width="8" height="8" fill="#222"/><rect x="14.5" y="14.5" width="2.300" height="2.300" fill="#fff"/><rect x="19.2" y="14.5" width="2.300" height="2.300" fill="#fff"/><rect x="16.85" y="16.85" width="2.300" height="2.300" fill="#fff"/><rect x="14.5" y="19.2" width="2.300" height="2.300" fill="#fff"/><rect x="19.2" y="19.2" width="2.300" height="2.300" fill="#fff"/></g></svg>
<svg class="a" style="left:800px;top:52px;" width="24" height="24" viewBox="0 0 24 24"><g transform="translate(1.300 1.500) scale(.89)"><path d="M3 5q8 4 16 0v10q-8 6-16 0z" fill="#5cc49a"/><rect x="14" y="14" width="8" height="8" fill="#222"/><rect x="14.5" y="14.5" width="2.300" height="2.300" fill="#fff"/><rect x="19.2" y="14.5" width="2.300" height="2.300" fill="#fff"/><rect x="16.85" y="16.85" width="2.300" height="2.300" fill="#fff"/><rect x="14.5" y="19.2" width="2.300" height="2.300" fill="#fff"/><rect x="19.2" y="19.2" width="2.300" height="2.300" fill="#fff"/></g></svg>
<svg class="a" style="left:822px;top:52px;" width="24" height="24" viewBox="0 0 24 24"><g transform="translate(1.300 1.500) scale(.89)"><path d="M3 6q3-3 6 0t6 0 4-1v8q-8 8-16 1z" fill="#5cc49a"/><rect x="14" y="14" width="8" height="8" fill="#222"/><rect x="14.5" y="14.5" width="2.300" height="2.300" fill="#fff"/><rect x="19.2" y="14.5" width="2.300" height="2.300" fill="#fff"/><rect x="16.85" y="16.85" width="2.300" height="2.300" fill="#fff"/><rect x="14.5" y="19.2" width="2.300" height="2.300" fill="#fff"/><rect x="19.2" y="19.2" width="2.300" height="2.300" fill="#fff"/></g></svg>
<svg class="a" style="left:845px;top:52px;" width="24" height="24" viewBox="0 0 24 24"><g transform="translate(1.300 1.500) scale(.89)"><path d="M11 3l8 4v8l-8 4-8-4v-8z" fill="#5cc49a"/><path d="M3 7l8 4 8-4M11 11v8" stroke="#444" stroke-width="1.300" fill="none"/><rect x="14" y="14" width="8" height="8" fill="#222"/><rect x="14.5" y="14.5" width="2.300" height="2.300" fill="#fff"/><rect x="19.2" y="14.5" width="2.300" height="2.300" fill="#fff"/><rect x="16.85" y="16.85" width="2.300" height="2.300" fill="#fff"/><rect x="14.5" y="19.2" width="2.300" height="2.300" fill="#fff"/><rect x="19.2" y="19.2" width="2.300" height="2.300" fill="#fff"/></g></svg>
<svg class="a" style="left:869px;top:52px;" width="24" height="24" viewBox="0 0 24 24"><g transform="translate(1.300 1.500) scale(.89)"><path d="M3 17q1-9 7-7t7-6" fill="none" stroke="#5cc49a" stroke-width="3.500"/><path d="M13 3l7 1-2 6z" fill="#5cc49a"/><rect x="14" y="14" width="8" height="8" fill="#222"/><rect x="14.5" y="14.5" width="2.300" height="2.300" fill="#fff"/><rect x="19.2" y="14.5" width="2.300" height="2.300" fill="#fff"/><rect x="16.85" y="16.85" width="2.300" height="2.300" fill="#fff"/><rect x="14.5" y="19.2" width="2.300" height="2.300" fill="#fff"/><rect x="19.2" y="19.2" width="2.300" height="2.300" fill="#fff"/></g></svg>
<svg class="a" style="left:891px;top:52px;" width="24" height="24" viewBox="0 0 24 24"><g transform="translate(1.300 1.500) scale(.89)"><path d="M3 1.500h-2.500v21h2.500M21 1.500h2.500v21h-2.500" fill="none" stroke="#2fbf2f" stroke-width="1.300"/><rect x="4" y="4" width="16" height="16" fill="#5cc49a"/><rect x="4" y="4" width="16" height="3" fill="#ddd"/><rect x="8" y="9" width="9" height="9" fill="#222"/><rect x="8.500" y="9.500" width="2.600" height="2.600" fill="#fff"/><rect x="13.900" y="9.500" width="2.600" height="2.600" fill="#fff"/><rect x="11.200" y="12.200" width="2.600" height="2.600" fill="#fff"/><rect x="8.500" y="14.900" width="2.600" height="2.600" fill="#fff"/><rect x="13.900" y="14.900" width="2.600" height="2.600" fill="#fff"/></g></svg>
<svg class="a" style="left:914px;top:52px;" width="24" height="24" viewBox="0 0 24 24"><g transform="translate(1.300 1.500) scale(.89)"><path d="M3 8q9 8 18 0M3 16q9-8 18 0" fill="none" stroke="#5cc49a" stroke-width="1.500"/><path d="M8 7l8 10M16 7l-8 10" stroke="#e2e2e2" stroke-width="1.600"/></g></svg>
<svg class="a" style="left:937px;top:52px;" width="24" height="24" viewBox="0 0 24 24"><g transform="translate(1.300 1.500) scale(.89)"><path d="M3 1.500h-2.500v21h2.500M21 1.500h2.500v21h-2.500" fill="none" stroke="#2fbf2f" stroke-width="1.300"/><path d="M5 4l14 16M19 4l-14 16" stroke="#e2e2e2" stroke-width="2.400"/><path d="M5 4l14 16M19 4l-14 16" stroke="#888" stroke-width=".7"/></g></svg>
<svg class="a" style="left:959px;top:52px;" width="24" height="24" viewBox="0 0 24 24"><rect x="0" y="1" width="24" height="22" fill="#3a3a3a" stroke="#777" stroke-width=".8"/><path d="M12 1v14" stroke="#aaa" stroke-width=".8" stroke-dasharray="1 1"/><circle cx="8" cy="7" r="1" fill="#e8e04a"/><circle cx="16" cy="7" r="1" fill="#e8e04a"/><circle cx="8" cy="11" r="1" fill="#e8e04a"/><circle cx="16" cy="11" r="1" fill="#e8e04a"/></svg>
<div class="a" style="left:959px;top:68px;width:24px;height:9px;background:rgba(0,0,0,.55);"></div>
<div class="t" style="left:957px;top:67px;width:28px;text-align:center;line-height:10px;height:10px;font-size:8px;font-weight:bold;color:#f4f4f4">SymC</div>
<svg class="a" style="left:982px;top:52px;" width="24" height="24" viewBox="0 0 24 24"><rect x="0" y="1" width="24" height="22" fill="#555" stroke="#777" stroke-width=".8"/><circle cx="12" cy="6" r="3" fill="#7a9"/><path d="M6 22q0-12 6-12t6 12z" fill="#7a9"/></svg>
<div class="a" style="left:982px;top:68px;width:24px;height:9px;background:rgba(0,0,0,.55);"></div>
<div class="t" style="left:980px;top:67px;width:28px;text-align:center;line-height:10px;height:10px;font-size:8px;font-weight:bold;color:#f4f4f4">AriM</div>
<svg class="a" style="left:1005px;top:52px;" width="24" height="24" viewBox="0 0 24 24"><rect x="0" y="1" width="24" height="22" fill="#3a3a3a" stroke="#777" stroke-width=".8"/><path d="M3 5h6M11 5h10M3 9h6M11 9h10M3 13h6M11 13h10" stroke="#e0e0e0" stroke-width="1.300"/></svg>
<div class="a" style="left:1005px;top:68px;width:24px;height:9px;background:rgba(0,0,0,.55);"></div>
<div class="t" style="left:1003px;top:67px;width:28px;text-align:center;line-height:10px;height:10px;font-size:8px;font-weight:bold;color:#f4f4f4">Name</div>
<svg class="a" style="left:1028px;top:52px;" width="24" height="24" viewBox="0 0 24 24"><path d="M4 14l0-9 4.500 4 3.500-7 3.500 7 4.500-4v9" fill="none" stroke="#34c3c9" stroke-width="2.200"/><path d="M7 16v-5l5-5 5 5v5" fill="#1d6f78"/></svg>
<div class="a" style="left:1028px;top:68px;width:24px;height:9px;background:rgba(0,0,0,.55);"></div>
<div class="t" style="left:1026px;top:67px;width:28px;text-align:center;line-height:10px;height:10px;font-size:8px;font-weight:bold;color:#f4f4f4">UV_M</div>
<svg class="a" style="left:1050px;top:52px;" width="24" height="24" viewBox="0 0 24 24"><g transform="translate(1.300 1.500) scale(.89)"><path d="M4 17l0-9 4.500 4 3.500-7 3.500 7 4.500-4v9" fill="none" stroke="#34c3c9" stroke-width="2.200"/><path d="M7 19v-5l5-5 5 5v5" fill="#1d6f78"/></g></svg>
<svg class="a" style="left:1073px;top:52px;" width="24" height="24" viewBox="0 0 24 24"><path d="M12 2c-5 0-5 2-5 4v2h5v1h-7c-3 0-3 6 0 6h2v-3c0-2 1-3 3-3h5c2 0 2-1 2-3v-2c0-2-2-2-5-2z" fill="#e2e2e2"/><circle cx="9.500" cy="4.500" r="1" fill="#444"/></svg>
<div class="a" style="left:1073px;top:68px;width:24px;height:9px;background:rgba(0,0,0,.55);"></div>
<div class="t" style="left:1071px;top:67px;width:28px;text-align:center;line-height:10px;height:10px;font-size:8px;font-weight:bold;color:#f4f4f4">geoW</div>
<svg class="a" style="left:1096px;top:52px;" width="24" height="24" viewBox="0 0 24 24"><path d="M4 14l0-9 4.500 4 3.500-7 3.500 7 4.500-4v9" fill="none" stroke="#34c3c9" stroke-width="2.200"/><path d="M7 16v-5l5-5 5 5v5" fill="#1d6f78"/></svg>
<div class="a" style="left:1096px;top:68px;width:24px;height:9px;background:rgba(0,0,0,.55);"></div>
<div class="t" style="left:1094px;top:67px;width:28px;text-align:center;line-height:10px;height:10px;font-size:8px;font-weight:bold;color:#f4f4f4">MHM</div>
<svg class="a" style="left:1264px;top:53px;" width="12" height="24" viewBox="0 0 12 24"><path d="M2 6l4-4 4 4z" fill="#bbb"/><circle cx="6" cy="12" r="3.200" fill="#8a8a8a"/><path d="M2 18l4 4 4-4z" fill="#bbb"/></svg>
<!-- ===== LEFT ===== -->
<div class="a" style="left:0px;top:82px;width:212px;height:612px;background:#444;"></div>
<div class="a" style="left:0px;top:81px;width:1280px;height:1px;background:#383838;"></div>
<div class="a" style="left:2px;top:84px;width:26px;height:3px;background:transparent;background-image:radial-gradient(#5a5a5a 0.600px,transparent 0.800px);background-size:2px 2px"></div>
<svg class="a" style="left:4px;top:90px;" width="24" height="24" viewBox="0 0 24 24"><g transform="translate(-.2 1.400) scale(.88)"><path d="M8 3v16l4-4 3 7 3-1.500-3-6.500h6z" fill="#e4e4e4"/></g></svg>
<svg class="a" style="left:4px;top:115px;" width="24" height="24" viewBox="0 0 24 24"><g transform="translate(-.2 1.400) scale(.88)"><ellipse cx="10" cy="12" rx="8.500" ry="5.500" transform="rotate(-25 10 12)" fill="none" stroke="#34c3c9" stroke-width="1.800" stroke-dasharray="3 1.800"/><path d="M12 8v12l3-3 2.500 5 2.500-1.200-2.500-5h4.500z" fill="#e4e4e4"/></g></svg>
<svg class="a" style="left:4px;top:140px;" width="24" height="24" viewBox="0 0 24 24"><g transform="translate(-.2 1.400) scale(.88)"><ellipse cx="10" cy="15" rx="8" ry="5.500" transform="rotate(25 10 15)" fill="none" stroke="#34c3c9" stroke-width="1.800" stroke-dasharray="3 1.800"/><path d="M22 3l-9 9 2 2 9-9z" fill="#e4e4e4"/><path d="M12 13c-3 0-3 3-5 4 3 1 6 0 7-2z" fill="#e4e4e4"/></g></svg>
<svg class="a" style="left:4px;top:165px;" width="24" height="24" viewBox="0 0 24 24"><g transform="translate(-.2 1.400) scale(.88)"><rect x="7.500" y="7.500" width="9" height="9" fill="#e4e4e4" stroke="#999" stroke-width=".6"/><path d="M12 1l3.500 4h-7zM12 23l3.500-4h-7zM1 12l4-3.500v7zM23 12l-4-3.500v7z" fill="#34c3c9"/></g></svg>
<svg class="a" style="left:4px;top:189px;" width="24" height="24" viewBox="0 0 24 24"><g transform="translate(-.2 1.400) scale(.88)"><path d="M19.500 17.500a9.500 9.500 0 1 1 2-5.500" fill="none" stroke="#34c3c9" stroke-width="1.800"/><path d="M21.500 15l-2.500-4h5z" fill="#34c3c9"/><path d="M12 6l6 6-6 6-6-6z" fill="#e4e4e4"/></g></svg>
<div class="a" style="left:3px;top:214px;width:25px;height:25px;background:#5285a6;"></div>
<svg class="a" style="left:4px;top:215px;" width="24" height="24" viewBox="0 0 24 24"><rect x="3" y="3" width="18" height="18" fill="none" stroke="#1d2a33" stroke-width="1.600" stroke-dasharray="2 1.500"/><rect x="9" y="8" width="9" height="9" fill="#5285a6" stroke="#34c3c9" stroke-width="1.800"/><rect x="3" y="12" width="9" height="9" fill="#e4e4e4" stroke="#777" stroke-width=".6"/></svg>
<div class="a" style="left:3px;top:290px;width:25px;height:2px;background:#8a8a8a;"></div>
<div class="a" style="left:5px;top:298px;width:20px;height:19px;background:#d4d4d4;border:1px solid #888"></div>
<svg class="a" style="left:5px;top:298px;" width="20" height="19" viewBox="0 0 20 19"><path d="M10 4l3 2.500-3 2.500-3-2.500zM5.500 7.500l3 2.500-3 2.500-3-2.500zM14.500 7.500l3 2.500-3 2.500-3-2.500zM10 11l3 2.500-3 2.500-3-2.500z" fill="#222"/></svg>
<div class="a" style="left:5px;top:322px;width:9px;height:9px;background:#3a3a3a;border:1px solid #999"></div>
<svg class="a" style="left:5px;top:322px;" width="9" height="9" viewBox="0 0 9 9"><path d="M2.500 4.500h4M4.500 2.500v4" stroke="#ccc" stroke-width="1"/></svg>
<div class="a" style="left:15px;top:322px;width:9px;height:9px;background:#d4d4d4;border:1px solid #999"></div>
<svg class="a" style="left:15px;top:322px;" width="9" height="9" viewBox="0 0 9 9"><path d="M4.500 2.500l2.500 2-2.500 2-2.500-2z" fill="#222"/></svg>
<div class="a" style="left:5px;top:332px;width:9px;height:9px;background:#3a3a3a;border:1px solid #999"></div>
<svg class="a" style="left:5px;top:332px;" width="9" height="9" viewBox="0 0 9 9"><path d="M2.500 4.500h4M4.500 2.500v4" stroke="#ccc" stroke-width="1"/></svg>
<div class="a" style="left:15px;top:332px;width:9px;height:9px;background:#3a3a3a;border:1px solid #999"></div>
<svg class="a" style="left:15px;top:332px;" width="9" height="9" viewBox="0 0 9 9"><path d="M2.500 4.500h4M4.500 2.500v4" stroke="#ccc" stroke-width="1"/></svg>
<div class="a" style="left:5px;top:347px;width:9px;height:19px;background:#3a3a3a;border:1px solid #999"></div>
<svg class="a" style="left:5px;top:347px;" width="9" height="19" viewBox="0 0 9 19"><path d="M2.500 9.500h4M4.500 7.500v4" stroke="#ccc" stroke-width="1"/></svg>
<div class="a" style="left:15px;top:347px;width:9px;height:19px;background:#d4d4d4;border:1px solid #999"></div>
<svg class="a" style="left:15px;top:347px;" width="9" height="19" viewBox="0 0 9 19"><path d="M4.500 7l2.500 2.500-2.500 2.500-2.500-2.500z" fill="#222"/></svg>
<div class="a" style="left:3px;top:369px;width:25px;height:25px;background:#5285a6;border:1px solid #66a8d8"></div>
<svg class="a" style="left:6px;top:372px;" width="19" height="19" viewBox="0 0 19 19"><rect x=".5" y=".5" width="18" height="18" fill="#4a6f88" stroke="#9b8a6a" stroke-width="1"/><path d="M4 4h9M6 8h9M6 12h9M6 16h9" stroke="#dfe9ef" stroke-width="1.400"/><circle cx="4" cy="4" r="1.200" fill="#fff"/><circle cx="7" cy="8" r="1.200" fill="#fff"/><circle cx="7" cy="12" r="1.200" fill="#fff"/><circle cx="7" cy="16" r="1.200" fill="#fff"/></svg>
<svg class="a" style="left:3.8px;top:668.8px;" width="22" height="19" viewBox="0 0 22 19"><defs><linearGradient id="mg" x1="0" y1="0" x2="1" y2="1"><stop offset="0" stop-color="#d6f4f2"/><stop offset="1" stop-color="#49c6c8"/></linearGradient><linearGradient id="mg2" x1="0" y1="0" x2="0" y2="1"><stop offset="0" stop-color="#25c4c2"/><stop offset="1" stop-color="#15a3ad"/></linearGradient></defs><path d="M0 1h5v18h-5z" fill="#1a9fb0"/><path d="M0 0h6.500l7 15.500-2.500 2.500-5.500-11z" fill="url(#mg)"/><path d="M11 18l5-18h6v19h-5.500v-11l-3 8.500z" fill="url(#mg2)"/><path d="M16 0l-2.500 9 3 -1z" fill="#0f8f9c" fill-opacity=".6"/></svg>
<div class="a" style="left:29.5px;top:82px;width:1.5px;height:612px;background:#525252;"></div>
<div class="a" style="left:31px;top:83px;width:180px;height:610px;background:#444;"></div>
<div class="a" style="left:31px;top:83px;width:50px;height:13px;background:#4a4a4a;"></div>
<div class="a" style="left:82px;top:83px;width:60px;height:13px;background:#3b3b3b;"></div>
<div class="a" style="left:32px;top:85px;width:6px;height:3px;background:transparent;background-image:radial-gradient(#5a5a5a 0.600px,transparent 0.800px);background-size:2px 2px"></div>
<div class="t" style="left:38px;top:84px;width:58.1px;text-align:justify;text-align-last:justify;text-justify:inter-character;line-height:12px;height:12px;font-size:9.5px;color:#f0f0f0;font-weight:bold;transform:scaleX(0.602);transform-origin:0 50%">アウトライナ</div>
<div class="t" style="left:90px;top:84px;width:48.5px;text-align:justify;text-align-last:justify;text-justify:inter-character;line-height:12px;height:12px;font-size:9.5px;color:#aaa;font-weight:normal;transform:scaleX(0.619);transform-origin:0 50%">ツール設定</div>
<div class="t" style="left:38px;top:96px;width:58.1px;text-align:justify;text-align-last:justify;text-justify:inter-character;line-height:12px;height:12px;font-size:9.5px;color:#e4e4e4;font-weight:bold;transform:scaleX(0.602);transform-origin:0 50%">ディスプレイ</div>
<div class="t" style="left:83px;top:96px;width:19.4px;text-align:justify;text-align-last:justify;text-justify:inter-character;line-height:12px;height:12px;font-size:9.5px;color:#e4e4e4;font-weight:bold;transform:scaleX(0.773);transform-origin:0 50%">表示</div>
<div class="t" style="left:108px;top:96px;width:29.1px;text-align:justify;text-align-last:justify;text-justify:inter-character;line-height:12px;height:12px;font-size:9.5px;color:#e4e4e4;font-weight:bold;transform:scaleX(0.687);transform-origin:0 50%">ヘルプ</div>
<svg class="a" style="left:36px;top:113px;" width="12" height="13" viewBox="0 0 12 13"><path d="M3.500 1.500h-2v3M8.500 1.500h2v3M3.500 11.500h-2v-3M8.500 11.500h2v-3" fill="none" stroke="#bbb" stroke-width="1.200"/><circle cx="6" cy="6.500" r="2.800" fill="none" stroke="#999" stroke-width="1"/></svg>
<div class="a" style="left:51px;top:112px;width:147px;height:15px;background:#2b2b2b;"></div>
<div class="t" style="left:54px;top:113px;width:75.6px;text-align:justify;text-align-last:justify;text-justify:inter-character;line-height:12px;height:12px;font-size:9.5px;color:#8a8a8a;font-weight:normal;transform:scaleX(0.595);transform-origin:0 50%">コマンド検索...</div>
<div class="a" style="left:32px;top:127px;width:166px;height:552px;background:#373737;"></div>
<svg class="a" style="left:57px;top:127.5px;" width="12" height="11" viewBox="0 0 12 11"><rect x="0" y="2.500" width="8" height="6" fill="#d8d8d8"/><path d="M8.500 5.500l3-3v6z" fill="#d8d8d8"/></svg>
<div class="t" style="left:70px;top:126.5px;line-height:13px;height:13px;font-size:10.5px;color:#707070;font-weight:normal;transform:scaleX(0.8);transform-origin:0 50%">persp</div>
<svg class="a" style="left:57px;top:141.0px;" width="12" height="11" viewBox="0 0 12 11"><rect x="0" y="2.500" width="8" height="6" fill="#d8d8d8"/><path d="M8.500 5.500l3-3v6z" fill="#d8d8d8"/></svg>
<div class="t" style="left:70px;top:140.0px;line-height:13px;height:13px;font-size:10.5px;color:#707070;font-weight:normal;transform:scaleX(0.8);transform-origin:0 50%">top</div>
<svg class="a" style="left:57px;top:154.5px;" width="12" height="11" viewBox="0 0 12 11"><rect x="0" y="2.500" width="8" height="6" fill="#d8d8d8"/><path d="M8.500 5.500l3-3v6z" fill="#d8d8d8"/></svg>
<div class="t" style="left:70px;top:153.5px;line-height:13px;height:13px;font-size:10.5px;color:#707070;font-weight:normal;transform:scaleX(0.8);transform-origin:0 50%">front</div>
<svg class="a" style="left:57px;top:168.0px;" width="12" height="11" viewBox="0 0 12 11"><rect x="0" y="2.500" width="8" height="6" fill="#d8d8d8"/><path d="M8.500 5.500l3-3v6z" fill="#d8d8d8"/></svg>
<div class="t" style="left:70px;top:167.0px;line-height:13px;height:13px;font-size:10.5px;color:#707070;font-weight:normal;transform:scaleX(0.8);transform-origin:0 50%">side</div>
<svg class="a" style="left:57px;top:181px;" width="12" height="12" viewBox="0 0 12 12"><path d="M6 0.500l3 2.500-3 2.500-3-2.500zM2.800 3.500l3 2.500-3 2.500-3-2.500zM9.200 3.500l3 2.500-3 2.500-3-2.500zM6 6.500l3 2.500-3 2.500-3-2.500z" fill="#e0e0e0"/></svg>
<div class="t" style="left:70px;top:180.5px;line-height:13px;height:13px;font-size:10.5px;color:#e0e0e0;font-weight:normal;transform:scaleX(0.83);transform-origin:0 50%">polySurface1</div>
<div class="a" style="left:32px;top:194px;width:80px;height:14px;background:#5285a6;"></div>
<svg class="a" style="left:47px;top:197px;" width="8" height="8" viewBox="0 0 8 8"><rect x=".5" y=".5" width="7" height="7" fill="none" stroke="#9bb" stroke-width=".8"/><path d="M2 4h4M4 2v4" stroke="#9bb" stroke-width=".8"/></svg>
<svg class="a" style="left:57px;top:195px;" width="12" height="12" viewBox="0 0 12 12"><path d="M6 0v12M0 6h12M1.800 1.800l8.400 8.400M10.200 1.800l-8.400 8.400" stroke="#34c3c9" stroke-width="1.100"/></svg>
<div class="t" style="left:70px;top:194.5px;line-height:13px;height:13px;font-size:10.5px;color:#fff;font-weight:normal;transform:scaleX(0.83);transform-origin:0 50%">Character1_Reference</div>
<svg class="a" style="left:56px;top:207.5px;" width="12" height="12" viewBox="0 0 12 12"><circle cx="6" cy="6" r="5.200" fill="none" stroke="#e0e0e0" stroke-width="1.100"/><circle cx="7" cy="7" r="2.500" fill="#34c3c9"/><circle cx="4.500" cy="4.500" r="1.700" fill="#e0e0e0"/></svg>
<div class="t" style="left:70px;top:207.0px;line-height:13px;height:13px;font-size:10.5px;color:#e0e0e0;font-weight:normal;transform:scaleX(0.83);transform-origin:0 50%">defaultLightSet</div>
<svg class="a" style="left:56px;top:221px;" width="12" height="12" viewBox="0 0 12 12"><circle cx="6" cy="6" r="5.200" fill="none" stroke="#e0e0e0" stroke-width="1.100"/><circle cx="7" cy="7" r="2.500" fill="#34c3c9"/><circle cx="4.500" cy="4.500" r="1.700" fill="#e0e0e0"/></svg>
<div class="t" style="left:70px;top:220.5px;line-height:13px;height:13px;font-size:10.5px;color:#e0e0e0;font-weight:normal;transform:scaleX(0.83);transform-origin:0 50%">defaultObjectSet</div>
<div class="a" style="left:198px;top:127px;width:14px;height:566px;background:#444;"></div>
<div class="a" style="left:199px;top:128px;width:6.5px;height:541px;background:#606060;border-radius:3px"></div>
<svg class="a" style="left:199px;top:672px;" width="8" height="6" viewBox="0 0 8 6"><path d="M0 0h8l-4 5z" fill="#ccc"/></svg>
<div class="a" style="left:32px;top:679px;width:166px;height:10px;background:#444;"></div>
<div class="a" style="left:42px;top:680px;width:146px;height:7px;background:#666;border-radius:3px"></div>
<svg class="a" style="left:34px;top:680px;" width="6" height="8" viewBox="0 0 6 8"><path d="M5 0v8l-4.500-4z" fill="#ccc"/></svg>
<svg class="a" style="left:190px;top:680px;" width="6" height="8" viewBox="0 0 6 8"><path d="M1 0v8l4.500-4z" fill="#ccc"/></svg>
<div class="a" style="left:209px;top:82px;width:3px;height:612px;background:#3a3a3a;"></div>
<!-- ===== VIEWPORT ===== -->
<div class="a" style="left:212px;top:82px;width:864px;height:29px;background:#444;"></div>
<div class="a" style="left:212px;top:82px;width:864px;height:1.5px;background:#3a3a3a;"></div>
<div class="a" style="left:212px;top:84px;width:864px;height:1px;background:#555;"></div>
<div class="t" style="left:296px;top:85.5px;width:58.1px;text-align:justify;text-align-last:justify;text-justify:inter-character;line-height:12px;height:12px;font-size:9.5px;color:#e4e4e4;font-weight:bold;transform:scaleX(0.585);transform-origin:0 50%">ライティング</div>
<div class="t" style="left:340px;top:85.5px;width:19.4px;text-align:justify;text-align-last:justify;text-justify:inter-character;line-height:12px;height:12px;font-size:9.5px;color:#e4e4e4;font-weight:bold;transform:scaleX(0.825);transform-origin:0 50%">表示</div>
<div class="t" style="left:366px;top:85.5px;width:38.8px;text-align:justify;text-align-last:justify;text-justify:inter-character;line-height:12px;height:12px;font-size:9.5px;color:#e4e4e4;font-weight:bold;transform:scaleX(0.619);transform-origin:0 50%">レンダラ</div>
<div class="t" style="left:399px;top:85.5px;width:29.1px;text-align:justify;text-align-last:justify;text-justify:inter-character;line-height:12px;height:12px;font-size:9.5px;color:#e4e4e4;font-weight:bold;transform:scaleX(0.687);transform-origin:0 50%">パネル</div>
<svg class="a" style="left:285px;top:98px;" width="12" height="12" viewBox="0 0 12 12"><circle cx="6" cy="7" r="3" fill="none" stroke="#34c3c9" stroke-width="1.600"/></svg>
<svg class="a" style="left:295px;top:98px;" width="12" height="12" viewBox="0 0 12 12"><path d="M10.500 1l-6 6 1.500 1.500 6-6z" fill="#cdcdcd"/><path d="M4 8c-2 0-2 2-3 3 2 .5 4 0 4.500-1.500z" fill="#34c3c9"/></svg>
<div class="a" style="left:310px;top:99px;width:2px;height:11px;background:#2c2c2c;"></div>
<div class="a" style="left:312px;top:99px;width:1px;height:11px;background:#6a6a6a;"></div>
<div class="a" style="left:315px;top:98px;width:13px;height:13px;background:#3f6e8c;border:1px solid #5a9bc4"></div>
<svg class="a" style="left:315px;top:98px;" width="12" height="12" viewBox="0 0 12 12"><rect x="1.500" y="1.500" width="9" height="9" fill="none" stroke="#cdcdcd" stroke-width="1"/><path d="M4.500 1.500v9M7.500 1.500v9" stroke="#cdcdcd" stroke-width=".8"/></svg>
<svg class="a" style="left:328px;top:98px;" width="12" height="12" viewBox="0 0 12 12"><rect x=".5" y="2.500" width="11" height="7" fill="#cdcdcd"/><rect x="2" y="4" width="8" height="4" fill="#444"/></svg>
<svg class="a" style="left:340.5px;top:98px;" width="12" height="12" viewBox="0 0 12 12"><rect x=".5" y="2" width="11" height="8" fill="none" stroke="#cdcdcd" stroke-width="1"/><circle cx="6" cy="6" r="2" fill="#34c3c9"/></svg>
<svg class="a" style="left:353px;top:98px;" width="12" height="12" viewBox="0 0 12 12"><rect x="1" y="2" width="10" height="8" fill="#5a5a5a"/></svg>
<svg class="a" style="left:366px;top:98px;" width="12" height="12" viewBox="0 0 12 12"><rect x=".5" y="1.500" width="11" height="9" fill="none" stroke="#cdcdcd" stroke-width="1"/><circle cx="4" cy="6" r="1.300" fill="#34c3c9"/><circle cx="8" cy="6" r="1.300" fill="#34c3c9"/><path d="M6 1.500v9" stroke="#cdcdcd" stroke-width=".6"/></svg>
<svg class="a" style="left:378.5px;top:98px;" width="12" height="12" viewBox="0 0 12 12"><rect x=".5" y="1.500" width="11" height="9" fill="none" stroke="#cdcdcd" stroke-width="1"/><rect x="6" y="3" width="4" height="4" fill="#34c3c9"/><circle cx="4" cy="8" r="1.300" fill="#cdcdcd"/></svg>
<svg class="a" style="left:391px;top:98px;" width="12" height="12" viewBox="0 0 12 12"><rect x=".5" y="1.500" width="11" height="9" fill="none" stroke="#cdcdcd" stroke-width="1"/><path d="M3.500 4h5M6 4v5" stroke="#34c3c9" stroke-width="1.600"/></svg>
<div class="a" style="left:406px;top:99px;width:2px;height:11px;background:#2c2c2c;"></div>
<div class="a" style="left:408px;top:99px;width:1px;height:11px;background:#6a6a6a;"></div>
<svg class="a" style="left:412px;top:98px;" width="12" height="12" viewBox="0 0 12 12"><path d="M6 .8l4.800 2.400v5.600l-4.800 2.400-4.800-2.400v-5.600z" fill="none" stroke="#cdcdcd" stroke-width="1"/><path d="M1.200 3.200l4.800 2.400 4.800-2.400M6 5.600v5.600" stroke="#cdcdcd" stroke-width="1" fill="none"/></svg>
<div class="a" style="left:424.5px;top:98px;width:13px;height:13px;background:#3f6e8c;border:1px solid #5a9bc4"></div>
<svg class="a" style="left:424.5px;top:98px;" width="12" height="12" viewBox="0 0 12 12"><path d="M6 .8l4.800 2.400v5.600l-4.800 2.400-4.800-2.400v-5.600z" fill="#34c3c9" stroke="#eaffff" stroke-width="1"/><path d="M1.200 3.200l4.800 2.400 4.800-2.400M6 5.600v5.600" stroke="#eaffff" stroke-width="1" fill="none"/></svg>
<svg class="a" style="left:437px;top:98px;" width="12" height="12" viewBox="0 0 12 12"><circle cx="6" cy="6" r="5" fill="#cdcdcd"/><path d="M6 1a5 5 0 0 1 0 10z" fill="#555"/><path d="M6 2v8M8 2.500v7M10 4v4" stroke="#cdcdcd" stroke-width=".6"/></svg>
<svg class="a" style="left:449px;top:98px;" width="12" height="12" viewBox="0 0 12 12"><path d="M6 .8l4.800 2.400v5.600l-4.800 2.400-4.800-2.400v-5.600z" fill="#777" stroke="#cdcdcd" stroke-width="1"/><path d="M1.200 3.200l4.800 2.400 4.800-2.400M6 5.600v5.600" stroke="#cdcdcd" stroke-width="1" fill="none"/><circle cx="6" cy="6.500" r="2" fill="#34c3c9"/></svg>
<svg class="a" style="left:462px;top:98px;" width="12" height="12" viewBox="0 0 12 12"><circle cx="6" cy="6" r="5" fill="#888"/><path d="M2 3h2v2h-2zM6 3h2v2h-2zM4 5h2v2h-2zM8 5h2v2h-2zM2 7h2v2h-2zM6 7h2v2h-2z" fill="#cdcdcd"/></svg>
<svg class="a" style="left:474.5px;top:98px;" width="12" height="12" viewBox="0 0 12 12"><circle cx="6" cy="5" r="2.600" fill="#cdcdcd"/><rect x="4.800" y="7.500" width="2.400" height="3" fill="#cdcdcd"/><path d="M6 .2v1.300M1.500 5h-1.300M10.500 5h1.300M2.500 1.500l1 1M9.500 1.500l-1 1" stroke="#cdcdcd" stroke-width=".8"/></svg>
<svg class="a" style="left:488px;top:98px;" width="12" height="12" viewBox="0 0 12 12"><circle cx="7" cy="6" r="4" fill="#34c3c9"/><ellipse cx="4" cy="9.500" rx="4" ry="1.500" fill="#888"/></svg>
<div class="a" style="left:502px;top:99px;width:2px;height:11px;background:#2c2c2c;"></div>
<div class="a" style="left:504px;top:99px;width:1px;height:11px;background:#6a6a6a;"></div>
<svg class="a" style="left:507px;top:98px;" width="12" height="12" viewBox="0 0 12 12"><circle cx="6" cy="5" r="4" fill="#ccc"/><path d="M1 10q5 2.500 10 0" stroke="#34c3c9" stroke-width="1.300" fill="none"/></svg>
<svg class="a" style="left:521px;top:98px;" width="12" height="12" viewBox="0 0 12 12"><circle cx="7.500" cy="4.500" r="3.500" fill="#ccc"/><circle cx="4" cy="8" r="3" fill="#888"/></svg>
<svg class="a" style="left:533px;top:98px;" width="12" height="12" viewBox="0 0 12 12"><circle cx="6" cy="6" r="4.300" fill="none" stroke="#34c3c9" stroke-width="1.800"/><path d="M6 1.700a4.300 4.300 0 0 1 0 8.600" fill="none" stroke="#cdcdcd" stroke-width="1.800"/></svg>
<svg class="a" style="left:545px;top:98px;" width="12" height="12" viewBox="0 0 12 12"><rect x="1.500" y="1.500" width="9" height="9" fill="#2f5a60"/></svg>
<div class="a" style="left:560px;top:99px;width:2px;height:11px;background:#2c2c2c;"></div>
<div class="a" style="left:562px;top:99px;width:1px;height:11px;background:#6a6a6a;"></div>
<svg class="a" style="left:565px;top:98px;" width="12" height="12" viewBox="0 0 12 12"><rect x="1" y="1" width="7" height="7" fill="none" stroke="#34c3c9" stroke-width="1" stroke-dasharray="1.500 1"/><path d="M6 4v8l2-2 1.500 2.500 1.200-.7-1.400-2.300h2.700z" fill="#cdcdcd"/></svg>
<div class="a" style="left:580px;top:99px;width:2px;height:11px;background:#2c2c2c;"></div>
<div class="a" style="left:582px;top:99px;width:1px;height:11px;background:#6a6a6a;"></div>
<svg class="a" style="left:585px;top:98px;" width="12" height="12" viewBox="0 0 12 12"><rect x="3.500" y="1" width="7.500" height="7.500" fill="#cdcdcd"/><rect x="1" y="4" width="7" height="7" fill="#cdcdcd" stroke="#444" stroke-width="1"/></svg>
<div class="a" style="left:597px;top:98px;width:13px;height:13px;background:#3f6e8c;border:1px solid #5a9bc4"></div>
<svg class="a" style="left:597px;top:98px;" width="12" height="12" viewBox="0 0 12 12"><rect x="3.500" y="1" width="7.500" height="7.500" fill="#cdcdcd"/><rect x="1" y="4" width="7" height="7" fill="#444" stroke="#cdcdcd" stroke-width="1"/></svg>
<div class="a" style="left:611.5px;top:98px;width:13px;height:13px;background:#3f6e8c;border:1px solid #5a9bc4"></div>
<svg class="a" style="left:611.5px;top:98px;" width="12" height="12" viewBox="0 0 12 12"><rect x="1" y="1" width="10" height="10" fill="none" stroke="#cdcdcd" stroke-width="1.200"/><path d="M3 3l6 6M9 3v3M9 3h-3" stroke="#cdcdcd" stroke-width="1"/></svg>
<div class="a" style="left:626px;top:99px;width:2px;height:11px;background:#2c2c2c;"></div>
<div class="a" style="left:628px;top:99px;width:1px;height:11px;background:#6a6a6a;"></div>
<svg class="a" style="left:631.5px;top:98px;" width="12" height="12" viewBox="0 0 12 12"><circle cx="6" cy="6" r="3.300" fill="none" stroke="#cdcdcd" stroke-width="2.200" stroke-dasharray="2.600 1.300"/></svg>
<div class="a" style="left:646px;top:98px;width:25px;height:13px;background:#2b2b2b;"></div>
<div class="t" style="left:649px;top:98.5px;line-height:12px;height:12px;font-size:10.5px;color:#e8e8e8;font-weight:normal;transform:scaleX(0.8);transform-origin:0 50%">0.00</div>
<svg class="a" style="left:672px;top:98px;" width="12" height="12" viewBox="0 0 12 12"><path d="M3 1.500h6v9h-6z" fill="none" stroke="#cdcdcd" stroke-width="1.200"/><path d="M6 1.500v9" stroke="#cdcdcd" stroke-width="3" stroke-dasharray="3 6"/></svg>
<div class="a" style="left:686px;top:98px;width:24px;height:13px;background:#2b2b2b;"></div>
<div class="t" style="left:689px;top:98.5px;line-height:12px;height:12px;font-size:10.5px;color:#e8e8e8;font-weight:normal;transform:scaleX(0.8);transform-origin:0 50%">1.00</div>
<svg class="a" style="left:712px;top:97px;" width="14" height="14" viewBox="0 0 14 14"><circle cx="7" cy="7" r="6" fill="#34c3c9"/><circle cx="7" cy="7" r="4" fill="none" stroke="#fff" stroke-width="1"/><path d="M3 7h8" stroke="#fff" stroke-width="1"/></svg>
<div class="a" style="left:727px;top:98px;width:119px;height:13px;background:#5d5d5d;"></div>
<div class="t" style="left:730px;top:98.5px;line-height:12px;height:12px;font-size:10.5px;color:#f0f0f0;font-weight:normal;transform:scaleX(0.8);transform-origin:0 50%">sRGB gamma</div>
<svg class="a" style="left:835px;top:102px;" width="8" height="5" viewBox="0 0 8 5"><path d="M0 0h8l-4 5z" fill="#ddd"/></svg>
<div class="a" style="left:212px;top:111px;width:864px;height:581px;background:#a1a1a1;overflow:hidden">
<svg class="a" style="left:0;top:0" width="864" height="581" viewBox="0 0 864 581"><defs><clipPath id="bc"><path d="M419.5 20.3C421.7 20.2 423.5 20.0 426.0 20.7C428.5 21.4 431.9 22.9 434.2 24.6C436.5 26.3 438.3 28.3 439.7 30.9C441.1 33.5 442.2 37.3 442.8 40.2C443.4 43.0 443.1 46.2 443.5 48.0C443.9 49.8 445.2 49.2 445.4 51.0C445.6 52.8 445.4 56.8 444.6 59.0C443.8 61.2 442.0 62.8 440.8 64.5C439.6 66.2 438.3 67.8 437.4 69.5C436.5 71.2 436.0 71.1 435.6 75.0C435.2 78.9 434.8 88.6 435.0 93.0C435.2 97.4 434.8 99.6 436.6 101.2C438.4 102.8 442.5 102.1 446.0 102.5C449.5 102.9 453.4 102.7 457.4 103.8C461.4 104.9 466.5 106.6 469.9 109.3C473.3 112.0 474.6 115.6 477.7 120.0C480.8 124.4 485.2 131.1 488.6 135.9C492.0 140.7 494.1 144.2 498.2 149.0C502.3 153.8 508.5 159.9 513.0 164.6C517.5 169.3 521.9 172.3 525.5 177.0C529.1 181.7 531.2 187.5 534.9 192.7C538.5 197.9 543.2 203.2 547.4 208.4C551.6 213.6 556.0 219.3 559.9 224.0C563.8 228.7 567.7 232.9 570.8 236.5C573.9 240.1 576.6 242.8 578.6 245.9C580.6 249.0 581.7 251.9 583.0 255.0C584.3 258.1 586.3 262.7 586.6 264.6C586.9 266.5 585.8 266.3 585.0 266.5C584.2 266.7 583.5 266.8 581.7 266.0C579.9 265.2 576.3 263.7 574.0 261.5C571.7 259.3 569.0 253.4 567.7 253.0C566.4 252.6 566.9 258.7 566.0 259.0C565.1 259.3 563.3 257.4 562.5 255.0C561.7 252.6 562.4 247.9 561.4 244.3C560.4 240.7 559.0 237.0 556.7 233.4C554.4 229.8 551.6 226.3 547.4 222.4C543.2 218.5 536.9 214.2 531.7 210.0C526.5 205.8 521.3 202.4 516.1 197.4C510.9 192.4 505.7 185.9 500.5 180.2C495.3 174.5 489.6 168.2 484.9 163.0C480.2 157.8 476.5 153.7 472.4 149.0C468.3 144.3 463.0 136.3 460.5 135.0C458.0 133.7 458.5 138.7 457.6 141.0C456.7 143.3 456.4 143.8 455.2 149.0C454.0 154.2 452.1 165.1 450.5 172.4C448.9 179.7 446.1 186.8 445.8 192.7C445.5 198.6 447.0 202.3 448.6 207.7C450.2 213.1 453.4 218.8 455.7 225.0C458.1 231.2 461.0 239.0 462.7 245.2C464.4 251.4 465.3 256.1 465.8 262.4C466.3 268.6 466.1 274.9 465.8 282.7C465.5 290.5 465.1 300.4 464.2 309.0C463.3 317.6 461.9 325.7 460.5 334.0C459.1 342.3 457.2 352.0 456.0 359.0C454.8 366.0 454.1 370.9 453.4 376.0C452.7 381.1 451.6 385.0 451.7 389.5C451.9 394.0 453.4 398.5 454.3 403.0C455.1 407.5 456.4 412.0 456.8 416.5C457.2 421.0 457.2 424.9 456.8 430.0C456.4 435.1 455.1 440.8 454.3 447.0C453.4 453.2 452.3 460.3 451.7 467.3C451.1 474.3 451.4 482.4 450.9 489.0C450.4 495.6 449.0 501.7 448.5 507.0C448.0 512.3 447.6 516.0 447.8 521.0C448.0 526.0 449.3 532.3 449.5 537.0C449.7 541.7 449.6 545.5 449.0 549.0C448.4 552.5 447.7 556.1 446.0 558.0C444.3 559.9 441.8 560.2 439.0 560.5C436.2 560.8 431.6 560.6 429.0 560.0C426.4 559.4 424.3 558.8 423.5 557.0C422.7 555.2 423.2 552.3 424.0 549.0C424.8 545.7 426.5 541.7 428.0 537.0C429.5 532.3 432.1 526.3 433.0 521.0C433.9 515.7 433.6 510.3 433.6 505.0C433.6 499.7 433.1 494.2 433.0 489.0C432.9 483.8 433.3 479.9 433.0 474.0C432.7 468.1 431.9 459.9 431.4 453.7C430.9 447.5 430.3 442.4 429.7 436.8C429.1 431.2 428.1 425.6 428.0 420.0C427.9 414.4 429.0 407.5 428.9 403.0C428.8 398.5 427.6 397.3 427.2 392.8C426.8 388.3 426.5 381.6 426.4 376.0C426.3 370.4 426.5 366.0 426.4 359.0C426.3 352.0 426.2 342.3 426.0 334.0C425.8 325.7 425.3 316.5 425.0 309.0C424.7 301.5 424.4 293.8 424.0 289.0C423.6 284.2 423.3 282.1 422.5 280.0C421.7 277.9 420.0 276.5 419.0 276.5C418.0 276.5 416.9 274.6 416.4 280.0C415.9 285.4 416.0 300.0 415.7 309.0C415.4 318.0 414.7 325.7 414.5 334.0C414.3 342.3 414.5 352.0 414.5 359.0C414.5 366.0 414.6 370.4 414.5 376.0C414.4 381.6 413.4 387.7 413.7 392.8C414.0 397.9 415.5 401.9 416.2 406.4C416.9 410.9 417.9 414.9 418.0 420.0C418.1 425.1 417.6 431.2 417.0 436.8C416.4 442.4 415.2 447.5 414.5 453.7C413.8 459.9 413.1 468.1 412.8 474.0C412.5 479.9 412.7 483.8 412.8 489.0C412.9 494.2 413.0 499.7 413.2 505.0C413.4 510.3 413.8 515.7 414.0 521.0C414.2 526.3 414.8 532.0 414.5 537.0C414.2 542.0 413.0 547.7 412.0 551.0C411.0 554.3 410.5 555.6 408.5 557.0C406.5 558.4 403.0 559.2 400.0 559.5C397.0 559.8 392.8 559.3 390.5 558.5C388.2 557.7 386.4 556.8 386.0 554.5C385.6 552.2 386.8 548.4 388.0 545.0C389.2 541.6 391.4 538.0 393.0 534.0C394.6 530.0 396.7 525.5 397.5 521.0C398.3 516.5 398.2 512.3 398.0 507.0C397.8 501.7 396.6 495.6 396.0 489.0C395.4 482.4 394.9 474.3 394.2 467.3C393.5 460.3 392.7 453.8 391.7 447.0C390.7 440.2 388.7 433.5 388.3 426.7C387.9 419.9 388.5 412.0 389.2 406.4C389.9 400.8 392.4 397.9 392.5 392.8C392.6 387.7 391.3 381.6 390.0 376.0C388.7 370.4 386.6 366.0 384.9 359.0C383.1 352.0 381.1 342.3 379.5 334.0C377.9 325.7 376.1 317.6 375.2 309.0C374.4 300.4 374.5 290.5 374.4 282.7C374.3 274.9 374.0 268.4 374.4 262.4C374.8 256.4 375.3 253.0 376.7 246.8C378.1 240.6 380.9 232.5 383.0 225.0C385.1 217.5 388.2 208.2 389.4 202.0C390.6 195.8 390.6 194.2 390.2 188.0C389.8 181.8 388.2 170.9 387.0 164.6C385.8 158.3 384.0 154.0 383.0 150.0C382.0 146.0 381.2 143.5 380.8 140.6C380.4 137.7 381.4 132.4 380.6 132.5C379.8 132.6 378.3 136.9 376.0 141.0C373.7 145.1 370.1 152.3 367.0 157.0C363.9 161.7 361.6 164.1 357.4 169.3C353.2 174.5 346.9 182.5 341.7 188.0C336.5 193.5 331.3 197.7 326.1 202.1C320.9 206.5 315.5 210.2 310.5 214.6C305.5 219.0 299.3 224.8 296.4 228.7C293.5 232.6 294.9 235.4 293.3 238.0C291.7 240.6 287.9 241.6 286.5 244.5C285.1 247.4 285.9 252.6 285.0 255.2C284.1 257.8 282.7 258.6 281.0 260.0C279.3 261.4 276.7 262.8 274.6 263.5C272.5 264.2 270.0 264.6 268.3 264.2C266.6 263.8 264.8 263.1 264.6 261.2C264.4 259.3 265.9 255.6 267.0 253.0C268.1 250.4 269.1 249.0 271.4 245.9C273.7 242.8 276.9 238.9 280.8 234.2C284.7 229.5 289.9 223.6 294.9 217.7C299.8 211.8 305.8 205.2 310.5 199.0C315.2 192.8 318.8 185.9 323.0 180.2C327.2 174.5 330.8 169.8 335.5 164.6C340.2 159.4 346.4 154.8 351.1 149.0C355.8 143.2 360.2 134.9 363.6 129.6C367.0 124.3 368.8 120.5 371.4 117.0C374.0 113.5 375.3 110.6 379.2 108.5C383.1 106.4 390.4 105.6 394.9 104.6C399.4 103.6 403.7 104.6 406.0 102.7C408.3 100.8 408.1 97.3 408.5 93.4C408.9 89.5 409.2 82.2 408.5 79.0C407.8 75.8 405.4 75.8 404.0 74.0C402.6 72.2 401.0 71.4 399.9 68.4C398.8 65.4 398.0 59.3 397.5 55.9C397.0 52.5 396.7 50.6 396.7 48.0C396.7 45.4 397.0 43.0 397.5 40.2C398.0 37.3 398.5 33.6 399.9 30.9C401.3 28.2 403.8 25.5 406.0 23.8C408.2 22.2 410.8 21.6 413.0 21.0C415.2 20.4 417.3 20.4 419.5 20.3Z"/></clipPath><filter id="b3" x="-20%" y="-20%" width="140%" height="140%"><feGaussianBlur stdDeviation="3.200"/></filter><filter id="b2" x="-20%" y="-20%" width="140%" height="140%"><feGaussianBlur stdDeviation="1.800"/></filter><filter id="b1" x="-20%" y="-20%" width="140%" height="140%"><feGaussianBlur stdDeviation="1.300"/></filter><filter id="b5" x="-30%" y="-30%" width="160%" height="160%"><feGaussianBlur stdDeviation="5"/></filter></defs><path d="M227.4 432.2L-261.5 728.8M227.4 432.2L748.4 458.0M246.9 433.2L-220.9 734.2M218.5 437.6L752.7 464.8M266.5 434.1L-179.4 739.8M209.2 443.3L757.3 472.0M286.3 435.1L-137.0 745.5M199.3 449.2L762.1 479.6M306.3 436.1L-93.7 751.3M189.0 455.5L767.2 487.6M326.4 437.1L-49.4 757.2M178.1 462.1L772.7 496.2M346.8 438.1L-4.1 763.3M166.6 469.1L778.5 505.3M367.3 439.1L42.3 769.5M154.4 476.5L784.7 515.0M388.0 440.2L89.7 775.9M141.5 484.3L791.3 525.3M409.0 441.2L138.2 782.4M127.8 492.6L798.3 536.4M430.1 442.3L187.9 789.1M113.2 501.5L805.9 548.3M451.4 443.3L238.8 795.9M97.7 510.9L814.1 561.1M473.0 444.4L290.9 802.9M81.2 520.9L822.9 574.9M494.7 445.5L344.3 810.1M63.5 531.6L832.4 589.8M516.6 446.6L399.0 817.4M44.6 543.1L842.8 606.0M538.8 447.7L455.1 824.9M24.2 555.4L854.0 623.7M561.2 448.8L512.7 832.6M2.3 568.7L866.4 643.1M583.8 449.9L571.7 840.6M-21.4 583.1L879.9 664.3M606.6 451.0L632.2 848.7M-47.1 598.7L894.9 687.7M629.6 452.2L694.4 857.0M-75.0 615.6L911.5 713.7M652.9 453.3L758.2 865.6M-105.5 634.1L930.0 742.7M676.4 454.5L823.8 874.4M-138.9 654.4L950.7 775.3M700.2 455.7L891.2 883.4M-175.6 676.7L974.2 812.1M724.2 456.8L960.5 892.7M-216.3 701.3L1001.0 854.0M748.4 458.0L1031.7 902.3M-261.5 728.8L1031.7 902.3" stroke="#4e4e4e" stroke-width="1" fill="none"/><path d="M473.0 444.4L290.9 802.9" stroke="#222" stroke-width="1.300"/><path d="M81.2 520.9L822.9 574.9" stroke="#222" stroke-width="1.300"/><g clip-path="url(#bc)"><rect x="258" y="14" width="340" height="560" fill="#dcdcdc"/><path d="M419.5 20.3C421.7 20.2 423.5 20.0 426.0 20.7C428.5 21.4 431.9 22.9 434.2 24.6C436.5 26.3 438.3 28.3 439.7 30.9C441.1 33.5 442.2 37.3 442.8 40.2C443.4 43.0 443.1 46.2 443.5 48.0C443.9 49.8 445.2 49.2 445.4 51.0C445.6 52.8 445.4 56.8 444.6 59.0C443.8 61.2 442.0 62.8 440.8 64.5C439.6 66.2 438.3 67.8 437.4 69.5C436.5 71.2 436.0 71.1 435.6 75.0C435.2 78.9 434.8 88.6 435.0 93.0C435.2 97.4 434.8 99.6 436.6 101.2C438.4 102.8 442.5 102.1 446.0 102.5C449.5 102.9 453.4 102.7 457.4 103.8C461.4 104.9 466.5 106.6 469.9 109.3C473.3 112.0 474.6 115.6 477.7 120.0C480.8 124.4 485.2 131.1 488.6 135.9C492.0 140.7 494.1 144.2 498.2 149.0C502.3 153.8 508.5 159.9 513.0 164.6C517.5 169.3 521.9 172.3 525.5 177.0C529.1 181.7 531.2 187.5 534.9 192.7C538.5 197.9 543.2 203.2 547.4 208.4C551.6 213.6 556.0 219.3 559.9 224.0C563.8 228.7 567.7 232.9 570.8 236.5C573.9 240.1 576.6 242.8 578.6 245.9C580.6 249.0 581.7 251.9 583.0 255.0C584.3 258.1 586.3 262.7 586.6 264.6C586.9 266.5 585.8 266.3 585.0 266.5C584.2 266.7 583.5 266.8 581.7 266.0C579.9 265.2 576.3 263.7 574.0 261.5C571.7 259.3 569.0 253.4 567.7 253.0C566.4 252.6 566.9 258.7 566.0 259.0C565.1 259.3 563.3 257.4 562.5 255.0C561.7 252.6 562.4 247.9 561.4 244.3C560.4 240.7 559.0 237.0 556.7 233.4C554.4 229.8 551.6 226.3 547.4 222.4C543.2 218.5 536.9 214.2 531.7 210.0C526.5 205.8 521.3 202.4 516.1 197.4C510.9 192.4 505.7 185.9 500.5 180.2C495.3 174.5 489.6 168.2 484.9 163.0C480.2 157.8 476.5 153.7 472.4 149.0C468.3 144.3 463.0 136.3 460.5 135.0C458.0 133.7 458.5 138.7 457.6 141.0C456.7 143.3 456.4 143.8 455.2 149.0C454.0 154.2 452.1 165.1 450.5 172.4C448.9 179.7 446.1 186.8 445.8 192.7C445.5 198.6 447.0 202.3 448.6 207.7C450.2 213.1 453.4 218.8 455.7 225.0C458.1 231.2 461.0 239.0 462.7 245.2C464.4 251.4 465.3 256.1 465.8 262.4C466.3 268.6 466.1 274.9 465.8 282.7C465.5 290.5 465.1 300.4 464.2 309.0C463.3 317.6 461.9 325.7 460.5 334.0C459.1 342.3 457.2 352.0 456.0 359.0C454.8 366.0 454.1 370.9 453.4 376.0C452.7 381.1 451.6 385.0 451.7 389.5C451.9 394.0 453.4 398.5 454.3 403.0C455.1 407.5 456.4 412.0 456.8 416.5C457.2 421.0 457.2 424.9 456.8 430.0C456.4 435.1 455.1 440.8 454.3 447.0C453.4 453.2 452.3 460.3 451.7 467.3C451.1 474.3 451.4 482.4 450.9 489.0C450.4 495.6 449.0 501.7 448.5 507.0C448.0 512.3 447.6 516.0 447.8 521.0C448.0 526.0 449.3 532.3 449.5 537.0C449.7 541.7 449.6 545.5 449.0 549.0C448.4 552.5 447.7 556.1 446.0 558.0C444.3 559.9 441.8 560.2 439.0 560.5C436.2 560.8 431.6 560.6 429.0 560.0C426.4 559.4 424.3 558.8 423.5 557.0C422.7 555.2 423.2 552.3 424.0 549.0C424.8 545.7 426.5 541.7 428.0 537.0C429.5 532.3 432.1 526.3 433.0 521.0C433.9 515.7 433.6 510.3 433.6 505.0C433.6 499.7 433.1 494.2 433.0 489.0C432.9 483.8 433.3 479.9 433.0 474.0C432.7 468.1 431.9 459.9 431.4 453.7C430.9 447.5 430.3 442.4 429.7 436.8C429.1 431.2 428.1 425.6 428.0 420.0C427.9 414.4 429.0 407.5 428.9 403.0C428.8 398.5 427.6 397.3 427.2 392.8C426.8 388.3 426.5 381.6 426.4 376.0C426.3 370.4 426.5 366.0 426.4 359.0C426.3 352.0 426.2 342.3 426.0 334.0C425.8 325.7 425.3 316.5 425.0 309.0C424.7 301.5 424.4 293.8 424.0 289.0C423.6 284.2 423.3 282.1 422.5 280.0C421.7 277.9 420.0 276.5 419.0 276.5C418.0 276.5 416.9 274.6 416.4 280.0C415.9 285.4 416.0 300.0 415.7 309.0C415.4 318.0 414.7 325.7 414.5 334.0C414.3 342.3 414.5 352.0 414.5 359.0C414.5 366.0 414.6 370.4 414.5 376.0C414.4 381.6 413.4 387.7 413.7 392.8C414.0 397.9 415.5 401.9 416.2 406.4C416.9 410.9 417.9 414.9 418.0 420.0C418.1 425.1 417.6 431.2 417.0 436.8C416.4 442.4 415.2 447.5 414.5 453.7C413.8 459.9 413.1 468.1 412.8 474.0C412.5 479.9 412.7 483.8 412.8 489.0C412.9 494.2 413.0 499.7 413.2 505.0C413.4 510.3 413.8 515.7 414.0 521.0C414.2 526.3 414.8 532.0 414.5 537.0C414.2 542.0 413.0 547.7 412.0 551.0C411.0 554.3 410.5 555.6 408.5 557.0C406.5 558.4 403.0 559.2 400.0 559.5C397.0 559.8 392.8 559.3 390.5 558.5C388.2 557.7 386.4 556.8 386.0 554.5C385.6 552.2 386.8 548.4 388.0 545.0C389.2 541.6 391.4 538.0 393.0 534.0C394.6 530.0 396.7 525.5 397.5 521.0C398.3 516.5 398.2 512.3 398.0 507.0C397.8 501.7 396.6 495.6 396.0 489.0C395.4 482.4 394.9 474.3 394.2 467.3C393.5 460.3 392.7 453.8 391.7 447.0C390.7 440.2 388.7 433.5 388.3 426.7C387.9 419.9 388.5 412.0 389.2 406.4C389.9 400.8 392.4 397.9 392.5 392.8C392.6 387.7 391.3 381.6 390.0 376.0C388.7 370.4 386.6 366.0 384.9 359.0C383.1 352.0 381.1 342.3 379.5 334.0C377.9 325.7 376.1 317.6 375.2 309.0C374.4 300.4 374.5 290.5 374.4 282.7C374.3 274.9 374.0 268.4 374.4 262.4C374.8 256.4 375.3 253.0 376.7 246.8C378.1 240.6 380.9 232.5 383.0 225.0C385.1 217.5 388.2 208.2 389.4 202.0C390.6 195.8 390.6 194.2 390.2 188.0C389.8 181.8 388.2 170.9 387.0 164.6C385.8 158.3 384.0 154.0 383.0 150.0C382.0 146.0 381.2 143.5 380.8 140.6C380.4 137.7 381.4 132.4 380.6 132.5C379.8 132.6 378.3 136.9 376.0 141.0C373.7 145.1 370.1 152.3 367.0 157.0C363.9 161.7 361.6 164.1 357.4 169.3C353.2 174.5 346.9 182.5 341.7 188.0C336.5 193.5 331.3 197.7 326.1 202.1C320.9 206.5 315.5 210.2 310.5 214.6C305.5 219.0 299.3 224.8 296.4 228.7C293.5 232.6 294.9 235.4 293.3 238.0C291.7 240.6 287.9 241.6 286.5 244.5C285.1 247.4 285.9 252.6 285.0 255.2C284.1 257.8 282.7 258.6 281.0 260.0C279.3 261.4 276.7 262.8 274.6 263.5C272.5 264.2 270.0 264.6 268.3 264.2C266.6 263.8 264.8 263.1 264.6 261.2C264.4 259.3 265.9 255.6 267.0 253.0C268.1 250.4 269.1 249.0 271.4 245.9C273.7 242.8 276.9 238.9 280.8 234.2C284.7 229.5 289.9 223.6 294.9 217.7C299.8 211.8 305.8 205.2 310.5 199.0C315.2 192.8 318.8 185.9 323.0 180.2C327.2 174.5 330.8 169.8 335.5 164.6C340.2 159.4 346.4 154.8 351.1 149.0C355.8 143.2 360.2 134.9 363.6 129.6C367.0 124.3 368.8 120.5 371.4 117.0C374.0 113.5 375.3 110.6 379.2 108.5C383.1 106.4 390.4 105.6 394.9 104.6C399.4 103.6 403.7 104.6 406.0 102.7C408.3 100.8 408.1 97.3 408.5 93.4C408.9 89.5 409.2 82.2 408.5 79.0C407.8 75.8 405.4 75.8 404.0 74.0C402.6 72.2 401.0 71.4 399.9 68.4C398.8 65.4 398.0 59.3 397.5 55.9C397.0 52.5 396.7 50.6 396.7 48.0C396.7 45.4 397.0 43.0 397.5 40.2C398.0 37.3 398.5 33.6 399.9 30.9C401.3 28.2 403.8 25.5 406.0 23.8C408.2 22.2 410.8 21.6 413.0 21.0C415.2 20.4 417.3 20.4 419.5 20.3Z" fill="none" stroke="#9a9a9a" stroke-width="4.500" filter="url(#b1)" transform="translate(-1 -1.400)" stroke-opacity=".85"/><ellipse cx="422.0" cy="88.0" rx="12" ry="7" fill="#8a8a8a" fill-opacity="0.7" filter="url(#b3)"/><ellipse cx="422.0" cy="82.5" rx="9" ry="2.5" fill="#5a5a5a" fill-opacity="0.7" filter="url(#b2)"/><path d="M383.5 145.0Q386.0 158.5 399.0 158.0Q409.0 157.0 414.0 147.0" fill="none" stroke="#7c7c7c" stroke-width="2.400" filter="url(#b1)"/><path d="M452.0 145.0Q449.0 158.5 436.0 158.0Q427.0 157.0 422.0 147.0" fill="none" stroke="#7c7c7c" stroke-width="2.400" filter="url(#b1)"/><ellipse cx="396.0" cy="146.0" rx="9" ry="8" fill="#e6e6e6" fill-opacity="0.8" filter="url(#b2)"/><ellipse cx="438.0" cy="146.0" rx="9" ry="8" fill="#e4e4e4" fill-opacity="0.8" filter="url(#b2)"/><ellipse cx="419.0" cy="278.5" rx="5" ry="2" fill="#555" fill-opacity="0.8" filter="url(#b2)"/><ellipse cx="420.5" cy="319.0" rx="3" ry="40" fill="#8a8a8a" fill-opacity="0.5" filter="url(#b2)"/><ellipse cx="450.0" cy="184.0" rx="5" ry="38" fill="#a0a0a0" fill-opacity="0.55" filter="url(#b3)"/><ellipse cx="442.0" cy="49.0" rx="4" ry="20" fill="#a8a8a8" fill-opacity="0.5" filter="url(#b3)"/><ellipse cx="415.0" cy="212.0" rx="1" ry="2.6" fill="#666" fill-opacity="0.8" filter="url(#b2)"/><ellipse cx="414.0" cy="35.0" rx="12" ry="9" fill="#ececec" fill-opacity="0.7" filter="url(#b3)"/><ellipse cx="394.0" cy="140.0" rx="8" ry="7" fill="#ededed" fill-opacity="0.7" filter="url(#b3)"/><ellipse cx="438.0" cy="140.0" rx="8" ry="7" fill="#eaeaea" fill-opacity="0.6" filter="url(#b3)"/><ellipse cx="404.0" cy="239.0" rx="12" ry="16" fill="#e8e8e8" fill-opacity="0.6" filter="url(#b3)"/><ellipse cx="394.0" cy="329.0" rx="7" ry="45" fill="#e9e9e9" fill-opacity="0.6" filter="url(#b3)"/><ellipse cx="442.0" cy="329.0" rx="7" ry="45" fill="#e8e8e8" fill-opacity="0.55" filter="url(#b3)"/><ellipse cx="401.5" cy="383.0" rx="5" ry="6" fill="#f0f0f0" fill-opacity="0.7" filter="url(#b3)"/><ellipse cx="439.5" cy="382.0" rx="5" ry="6" fill="#f0f0f0" fill-opacity="0.7" filter="url(#b3)"/></g><path d="M419.5 20.3C422.0 20.4 425.5 20.8 428.0 21.5C430.5 22.2 432.2 23.0 434.2 24.6C436.2 26.2 438.3 28.3 439.7 30.9C441.1 33.5 442.2 37.2 442.8 40.2C443.3 43.2 443.3 45.5 443.0 49.0C442.7 52.5 442.1 57.8 441.2 61.0C440.3 64.2 439.3 65.9 437.4 68.4C435.5 70.9 432.1 74.2 429.6 76.2C427.1 78.2 424.9 79.7 422.5 80.3C420.1 80.9 418.2 80.7 415.5 80.0C412.8 79.3 408.6 77.9 406.0 76.0C403.4 74.1 401.3 71.8 399.9 68.4C398.5 65.1 398.0 59.3 397.5 55.9C397.0 52.5 396.7 50.6 396.7 48.0C396.7 45.4 397.0 43.0 397.5 40.2C398.0 37.3 398.5 33.6 399.9 30.9C401.3 28.2 403.8 25.5 406.0 23.8C408.2 22.2 410.8 21.6 413.0 21.0C415.2 20.4 417.0 20.2 419.5 20.3Z" fill="#555" fill-opacity=".75" filter="url(#b2)" transform="translate(0.500 3)"/><path d="M419.5 20.3C422.0 20.4 425.5 20.8 428.0 21.5C430.5 22.2 432.2 23.0 434.2 24.6C436.2 26.2 438.3 28.3 439.7 30.9C441.1 33.5 442.2 37.2 442.8 40.2C443.3 43.2 443.3 45.5 443.0 49.0C442.7 52.5 442.1 57.8 441.2 61.0C440.3 64.2 439.3 65.9 437.4 68.4C435.5 70.9 432.1 74.2 429.6 76.2C427.1 78.2 424.9 79.7 422.5 80.3C420.1 80.9 418.2 80.7 415.5 80.0C412.8 79.3 408.6 77.9 406.0 76.0C403.4 74.1 401.3 71.8 399.9 68.4C398.5 65.1 398.0 59.3 397.5 55.9C397.0 52.5 396.7 50.6 396.7 48.0C396.7 45.4 397.0 43.0 397.5 40.2C398.0 37.3 398.5 33.6 399.9 30.9C401.3 28.2 403.8 25.5 406.0 23.8C408.2 22.2 410.8 21.6 413.0 21.0C415.2 20.4 417.0 20.2 419.5 20.3Z" fill="#dddddd"/><clipPath id="hc"><path d="M419.5 20.3C422.0 20.4 425.5 20.8 428.0 21.5C430.5 22.2 432.2 23.0 434.2 24.6C436.2 26.2 438.3 28.3 439.7 30.9C441.1 33.5 442.2 37.2 442.8 40.2C443.3 43.2 443.3 45.5 443.0 49.0C442.7 52.5 442.1 57.8 441.2 61.0C440.3 64.2 439.3 65.9 437.4 68.4C435.5 70.9 432.1 74.2 429.6 76.2C427.1 78.2 424.9 79.7 422.5 80.3C420.1 80.9 418.2 80.7 415.5 80.0C412.8 79.3 408.6 77.9 406.0 76.0C403.4 74.1 401.3 71.8 399.9 68.4C398.5 65.1 398.0 59.3 397.5 55.9C397.0 52.5 396.7 50.6 396.7 48.0C396.7 45.4 397.0 43.0 397.5 40.2C398.0 37.3 398.5 33.6 399.9 30.9C401.3 28.2 403.8 25.5 406.0 23.8C408.2 22.2 410.8 21.6 413.0 21.0C415.2 20.4 417.0 20.2 419.5 20.3Z"/></clipPath><g clip-path="url(#hc)"><path d="M419.5 20.3C422.0 20.4 425.5 20.8 428.0 21.5C430.5 22.2 432.2 23.0 434.2 24.6C436.2 26.2 438.3 28.3 439.7 30.9C441.1 33.5 442.2 37.2 442.8 40.2C443.3 43.2 443.3 45.5 443.0 49.0C442.7 52.5 442.1 57.8 441.2 61.0C440.3 64.2 439.3 65.9 437.4 68.4C435.5 70.9 432.1 74.2 429.6 76.2C427.1 78.2 424.9 79.7 422.5 80.3C420.1 80.9 418.2 80.7 415.5 80.0C412.8 79.3 408.6 77.9 406.0 76.0C403.4 74.1 401.3 71.8 399.9 68.4C398.5 65.1 398.0 59.3 397.5 55.9C397.0 52.5 396.7 50.6 396.7 48.0C396.7 45.4 397.0 43.0 397.5 40.2C398.0 37.3 398.5 33.6 399.9 30.9C401.3 28.2 403.8 25.5 406.0 23.8C408.2 22.2 410.8 21.6 413.0 21.0C415.2 20.4 417.0 20.2 419.5 20.3Z" fill="none" stroke="#9a9a9a" stroke-width="4.500" filter="url(#b1)" transform="translate(-1.500 -1)" stroke-opacity=".85"/><ellipse cx="414.0" cy="35.0" rx="11" ry="8" fill="#ececec" fill-opacity="0.7" filter="url(#b3)"/><ellipse cx="439.0" cy="54.0" rx="3.5" ry="14" fill="#a6a6a6" fill-opacity="0.6" filter="url(#b2)"/><ellipse cx="405.5" cy="45.5" rx="4.5" ry="2.6" fill="#9a9a9a" fill-opacity="0.6" filter="url(#b1)"/><ellipse cx="424.5" cy="45.5" rx="4.5" ry="2.6" fill="#9a9a9a" fill-opacity="0.6" filter="url(#b1)"/><ellipse cx="414.0" cy="73.0" rx="6" ry="2" fill="#b0b0b0" fill-opacity="0.6" filter="url(#b1)"/></g><path d="M419.5 20.3C421.7 20.2 423.5 20.0 426.0 20.7C428.5 21.4 431.9 22.9 434.2 24.6C436.5 26.3 438.3 28.3 439.7 30.9C441.1 33.5 442.2 37.3 442.8 40.2C443.4 43.0 443.1 46.2 443.5 48.0C443.9 49.8 445.2 49.2 445.4 51.0C445.6 52.8 445.4 56.8 444.6 59.0C443.8 61.2 442.0 62.8 440.8 64.5C439.6 66.2 438.3 67.8 437.4 69.5C436.5 71.2 436.0 71.1 435.6 75.0C435.2 78.9 434.8 88.6 435.0 93.0C435.2 97.4 434.8 99.6 436.6 101.2C438.4 102.8 442.5 102.1 446.0 102.5C449.5 102.9 453.4 102.7 457.4 103.8C461.4 104.9 466.5 106.6 469.9 109.3C473.3 112.0 474.6 115.6 477.7 120.0C480.8 124.4 485.2 131.1 488.6 135.9C492.0 140.7 494.1 144.2 498.2 149.0C502.3 153.8 508.5 159.9 513.0 164.6C517.5 169.3 521.9 172.3 525.5 177.0C529.1 181.7 531.2 187.5 534.9 192.7C538.5 197.9 543.2 203.2 547.4 208.4C551.6 213.6 556.0 219.3 559.9 224.0C563.8 228.7 567.7 232.9 570.8 236.5C573.9 240.1 576.6 242.8 578.6 245.9C580.6 249.0 581.7 251.9 583.0 255.0C584.3 258.1 586.3 262.7 586.6 264.6C586.9 266.5 585.8 266.3 585.0 266.5C584.2 266.7 583.5 266.8 581.7 266.0C579.9 265.2 576.3 263.7 574.0 261.5C571.7 259.3 569.0 253.4 567.7 253.0C566.4 252.6 566.9 258.7 566.0 259.0C565.1 259.3 563.3 257.4 562.5 255.0C561.7 252.6 562.4 247.9 561.4 244.3C560.4 240.7 559.0 237.0 556.7 233.4C554.4 229.8 551.6 226.3 547.4 222.4C543.2 218.5 536.9 214.2 531.7 210.0C526.5 205.8 521.3 202.4 516.1 197.4C510.9 192.4 505.7 185.9 500.5 180.2C495.3 174.5 489.6 168.2 484.9 163.0C480.2 157.8 476.5 153.7 472.4 149.0C468.3 144.3 463.0 136.3 460.5 135.0C458.0 133.7 458.5 138.7 457.6 141.0C456.7 143.3 456.4 143.8 455.2 149.0C454.0 154.2 452.1 165.1 450.5 172.4C448.9 179.7 446.1 186.8 445.8 192.7C445.5 198.6 447.0 202.3 448.6 207.7C450.2 213.1 453.4 218.8 455.7 225.0C458.1 231.2 461.0 239.0 462.7 245.2C464.4 251.4 465.3 256.1 465.8 262.4C466.3 268.6 466.1 274.9 465.8 282.7C465.5 290.5 465.1 300.4 464.2 309.0C463.3 317.6 461.9 325.7 460.5 334.0C459.1 342.3 457.2 352.0 456.0 359.0C454.8 366.0 454.1 370.9 453.4 376.0C452.7 381.1 451.6 385.0 451.7 389.5C451.9 394.0 453.4 398.5 454.3 403.0C455.1 407.5 456.4 412.0 456.8 416.5C457.2 421.0 457.2 424.9 456.8 430.0C456.4 435.1 455.1 440.8 454.3 447.0C453.4 453.2 452.3 460.3 451.7 467.3C451.1 474.3 451.4 482.4 450.9 489.0C450.4 495.6 449.0 501.7 448.5 507.0C448.0 512.3 447.6 516.0 447.8 521.0C448.0 526.0 449.3 532.3 449.5 537.0C449.7 541.7 449.6 545.5 449.0 549.0C448.4 552.5 447.7 556.1 446.0 558.0C444.3 559.9 441.8 560.2 439.0 560.5C436.2 560.8 431.6 560.6 429.0 560.0C426.4 559.4 424.3 558.8 423.5 557.0C422.7 555.2 423.2 552.3 424.0 549.0C424.8 545.7 426.5 541.7 428.0 537.0C429.5 532.3 432.1 526.3 433.0 521.0C433.9 515.7 433.6 510.3 433.6 505.0C433.6 499.7 433.1 494.2 433.0 489.0C432.9 483.8 433.3 479.9 433.0 474.0C432.7 468.1 431.9 459.9 431.4 453.7C430.9 447.5 430.3 442.4 429.7 436.8C429.1 431.2 428.1 425.6 428.0 420.0C427.9 414.4 429.0 407.5 428.9 403.0C428.8 398.5 427.6 397.3 427.2 392.8C426.8 388.3 426.5 381.6 426.4 376.0C426.3 370.4 426.5 366.0 426.4 359.0C426.3 352.0 426.2 342.3 426.0 334.0C425.8 325.7 425.3 316.5 425.0 309.0C424.7 301.5 424.4 293.8 424.0 289.0C423.6 284.2 423.3 282.1 422.5 280.0C421.7 277.9 420.0 276.5 419.0 276.5C418.0 276.5 416.9 274.6 416.4 280.0C415.9 285.4 416.0 300.0 415.7 309.0C415.4 318.0 414.7 325.7 414.5 334.0C414.3 342.3 414.5 352.0 414.5 359.0C414.5 366.0 414.6 370.4 414.5 376.0C414.4 381.6 413.4 387.7 413.7 392.8C414.0 397.9 415.5 401.9 416.2 406.4C416.9 410.9 417.9 414.9 418.0 420.0C418.1 425.1 417.6 431.2 417.0 436.8C416.4 442.4 415.2 447.5 414.5 453.7C413.8 459.9 413.1 468.1 412.8 474.0C412.5 479.9 412.7 483.8 412.8 489.0C412.9 494.2 413.0 499.7 413.2 505.0C413.4 510.3 413.8 515.7 414.0 521.0C414.2 526.3 414.8 532.0 414.5 537.0C414.2 542.0 413.0 547.7 412.0 551.0C411.0 554.3 410.5 555.6 408.5 557.0C406.5 558.4 403.0 559.2 400.0 559.5C397.0 559.8 392.8 559.3 390.5 558.5C388.2 557.7 386.4 556.8 386.0 554.5C385.6 552.2 386.8 548.4 388.0 545.0C389.2 541.6 391.4 538.0 393.0 534.0C394.6 530.0 396.7 525.5 397.5 521.0C398.3 516.5 398.2 512.3 398.0 507.0C397.8 501.7 396.6 495.6 396.0 489.0C395.4 482.4 394.9 474.3 394.2 467.3C393.5 460.3 392.7 453.8 391.7 447.0C390.7 440.2 388.7 433.5 388.3 426.7C387.9 419.9 388.5 412.0 389.2 406.4C389.9 400.8 392.4 397.9 392.5 392.8C392.6 387.7 391.3 381.6 390.0 376.0C388.7 370.4 386.6 366.0 384.9 359.0C383.1 352.0 381.1 342.3 379.5 334.0C377.9 325.7 376.1 317.6 375.2 309.0C374.4 300.4 374.5 290.5 374.4 282.7C374.3 274.9 374.0 268.4 374.4 262.4C374.8 256.4 375.3 253.0 376.7 246.8C378.1 240.6 380.9 232.5 383.0 225.0C385.1 217.5 388.2 208.2 389.4 202.0C390.6 195.8 390.6 194.2 390.2 188.0C389.8 181.8 388.2 170.9 387.0 164.6C385.8 158.3 384.0 154.0 383.0 150.0C382.0 146.0 381.2 143.5 380.8 140.6C380.4 137.7 381.4 132.4 380.6 132.5C379.8 132.6 378.3 136.9 376.0 141.0C373.7 145.1 370.1 152.3 367.0 157.0C363.9 161.7 361.6 164.1 357.4 169.3C353.2 174.5 346.9 182.5 341.7 188.0C336.5 193.5 331.3 197.7 326.1 202.1C320.9 206.5 315.5 210.2 310.5 214.6C305.5 219.0 299.3 224.8 296.4 228.7C293.5 232.6 294.9 235.4 293.3 238.0C291.7 240.6 287.9 241.6 286.5 244.5C285.1 247.4 285.9 252.6 285.0 255.2C284.1 257.8 282.7 258.6 281.0 260.0C279.3 261.4 276.7 262.8 274.6 263.5C272.5 264.2 270.0 264.6 268.3 264.2C266.6 263.8 264.8 263.1 264.6 261.2C264.4 259.3 265.9 255.6 267.0 253.0C268.1 250.4 269.1 249.0 271.4 245.9C273.7 242.8 276.9 238.9 280.8 234.2C284.7 229.5 289.9 223.6 294.9 217.7C299.8 211.8 305.8 205.2 310.5 199.0C315.2 192.8 318.8 185.9 323.0 180.2C327.2 174.5 330.8 169.8 335.5 164.6C340.2 159.4 346.4 154.8 351.1 149.0C355.8 143.2 360.2 134.9 363.6 129.6C367.0 124.3 368.8 120.5 371.4 117.0C374.0 113.5 375.3 110.6 379.2 108.5C383.1 106.4 390.4 105.6 394.9 104.6C399.4 103.6 403.7 104.6 406.0 102.7C408.3 100.8 408.1 97.3 408.5 93.4C408.9 89.5 409.2 82.2 408.5 79.0C407.8 75.8 405.4 75.8 404.0 74.0C402.6 72.2 401.0 71.4 399.9 68.4C398.8 65.4 398.0 59.3 397.5 55.9C397.0 52.5 396.7 50.6 396.7 48.0C396.7 45.4 397.0 43.0 397.5 40.2C398.0 37.3 398.5 33.6 399.9 30.9C401.3 28.2 403.8 25.5 406.0 23.8C408.2 22.2 410.8 21.6 413.0 21.0C415.2 20.4 417.3 20.4 419.5 20.3Z" fill="none" stroke="#3a3a3a" stroke-width=".7" stroke-opacity=".55" stroke-dasharray="1.600 1"/><path d="M380.0 134.0L357.4 169.8L341.7 188.5L326.1 202.6L310.5 215.0L296.4 229.0" fill="none" stroke="#2a2a2a" stroke-width="1.200" stroke-opacity=".75" stroke-linejoin="round"/><path d="M460.5 135.5L472.4 149.5L484.9 163.5L500.5 180.7L516.1 197.9L531.7 210.5L547.4 222.9" fill="none" stroke="#2a2a2a" stroke-width="1.200" stroke-opacity=".75" stroke-linejoin="round"/><path d="M274.5 247.0L267.8 261.0M278.5 248.5L272.5 262.5M282.0 250.0L278.8 259.5" stroke="#a1a1a1" stroke-width="1" fill="none"/><path d="M576.0 247.5L583.8 262.5M572.0 249.0L579.2 264.0M568.5 250.5L573.2 260.5" stroke="#a1a1a1" stroke-width="1" fill="none"/><path d="M296.0 230.0Q296.0 237.0 286.0 244.5" stroke="#2a2a2a" stroke-width="1.800" stroke-opacity=".8" fill="none"/><path d="M555.5 232.0Q560.5 238.0 562.0 245.0" stroke="#2a2a2a" stroke-width="1.400" stroke-opacity=".7" fill="none"/><path d="M391.5 553.0v5M395.5 554.0v5M399.5 554.5v4.500M403.5 554.0v5M427.5 554.5v5M431.5 555.0v5M435.5 555.0v5M439.5 554.5v5" stroke="#8e8e8e" stroke-width=".9" fill="none"/><path d="M442.6 49.5q3.200 .5 2.800 4.500q-.3 5-2.200 8.500q-1.500 2.500-2.400 1z" fill="#d2d2d2" stroke="#777" stroke-width=".5"/><path d="M443.3 52.0q1.400 3 -.4 8" fill="none" stroke="#8a8a8a" stroke-width=".8"/><ellipse cx="405.7" cy="46.0" rx="3.800" ry="1.900" fill="#0c0c0c"/><ellipse cx="424.2" cy="46.0" rx="3.800" ry="1.900" fill="#0c0c0c"/><path d="M410.8 48.5q-.6 5-1.200 9.500" fill="none" stroke="#b0b0b0" stroke-width="1.400" filter="url(#b1)"/><ellipse cx="412.6" cy="59.8" rx="2.600" ry="1" fill="#858585" filter="url(#b1)"/><path d="M414.5 49.0v8" stroke="#ededed" stroke-width="1.600" filter="url(#b1)"/><path d="M409.0 66.5q4.500-1.800 9 0q-4.500 2.600-9 0z" fill="#a4a4a4"/><path d="M409.0 66.5h9" stroke="#777" stroke-width=".6"/><path d="M442.5 52.0q2.500 2 1 8" fill="none" stroke="#8a8a8a" stroke-width=".8"/><path d="M405.0 92.0v9M438.0 89.0v10" stroke="#999" stroke-width=".6" stroke-dasharray="1 1"/><g><path d="M421.8 55.0L420.2 111.0L421.8 117.0L423.6 111.0Z" fill="#48fd9f" stroke="#48fd9f" stroke-width=".8"/><path d="M421.8 117.0L420.3 121.8L422.7 156.5L423.5 121.7Z" fill="#48fd9f" fill-opacity=".8" stroke="#48fd9f" stroke-width="1.100" stroke-linejoin="round"/><path d="M422.7 156.5L421.2 161.2L422.7 195.6L424.2 161.2Z" fill="#48fd9f" fill-opacity=".8" stroke="#48fd9f" stroke-width="1.100" stroke-linejoin="round"/><path d="M422.7 195.6L421.2 200.2L422.8 233.8L424.2 200.2Z" fill="#48fd9f" fill-opacity=".8" stroke="#48fd9f" stroke-width="1.100" stroke-linejoin="round"/><path d="M422.8 233.8L421.3 236.3L422.4 255.0L424.3 236.4Z" fill="#48fd9f" fill-opacity=".8" stroke="#48fd9f" stroke-width="1.100" stroke-linejoin="round"/><path d="M422.7 156.5L421.3 150.6L400.3 112.8L418.7 151.9Z" fill="#48fd9f" fill-opacity=".8" stroke="#48fd9f" stroke-width="1.100" stroke-linejoin="round"/><path d="M422.7 156.5L426.5 151.8L443.3 112.0L423.8 150.5Z" fill="#48fd9f" fill-opacity=".8" stroke="#48fd9f" stroke-width="1.100" stroke-linejoin="round"/><path d="M400.3 112.8L395.7 111.6L362.0 113.7L395.7 114.2Z" fill="#48fd9f" fill-opacity=".8" stroke="#48fd9f" stroke-width="1.100" stroke-linejoin="round"/><path d="M362.0 113.7L353.3 112.7L290.0 115.9L353.4 115.3Z" fill="#48fd9f" fill-opacity=".8" stroke="#48fd9f" stroke-width="1.100" stroke-linejoin="round"/><path d="M290.0 115.9L282.1 114.7L224.5 116.7L282.2 117.3Z" fill="#48fd9f" fill-opacity=".8" stroke="#48fd9f" stroke-width="1.100" stroke-linejoin="round"/><path d="M224.5 116.7L220.1 115.5L188.0 117.5L220.1 118.1Z" fill="#48fd9f" fill-opacity=".8" stroke="#48fd9f" stroke-width="1.100" stroke-linejoin="round"/><path d="M443.3 112.0L447.8 113.1L480.5 110.6L447.7 110.5Z" fill="#48fd9f" fill-opacity=".8" stroke="#48fd9f" stroke-width="1.100" stroke-linejoin="round"/><path d="M480.5 110.6L490.2 111.7L561.4 109.3L490.2 109.1Z" fill="#48fd9f" fill-opacity=".8" stroke="#48fd9f" stroke-width="1.100" stroke-linejoin="round"/><path d="M561.4 109.3L570.6 110.3L638.0 107.0L570.6 107.7Z" fill="#48fd9f" fill-opacity=".8" stroke="#48fd9f" stroke-width="1.100" stroke-linejoin="round"/><path d="M638.0 107.0L641.6 108.2L668.0 106.3L641.6 105.6Z" fill="#48fd9f" fill-opacity=".8" stroke="#48fd9f" stroke-width="1.100" stroke-linejoin="round"/><path d="M369.9 114.0L362.0 113.7" stroke="#48fd9f" stroke-width="2.5" stroke-linecap="round"/><path d="M476.0 111.2L483.0 110.3" stroke="#48fd9f" stroke-width="2.5" stroke-linecap="round"/><path d="M220.0 116.8L198.0 116.2L180.0 116.5L165.0 116.6M220.0 116.8L196.0 117.3L177.0 117.6L166.5 117.7M220.0 116.8L194.0 118.4L174.0 118.7L168.0 118.8M220.0 116.8L192.0 119.5L171.0 119.8L169.5 119.9M220.0 116.8L190.0 120.6L168.0 120.9L171.0 121.0M640.0 107.0L664.0 107.2L684.0 106.6L704.0 106.2M640.0 107.0L666.0 106.3L687.0 105.8L702.0 105.3M640.0 107.0L668.0 105.4L690.0 105.0L700.0 104.4M640.0 107.0L670.0 104.5L693.0 104.2L698.0 103.5M640.0 107.0L672.0 103.6L696.0 103.4L696.0 102.6" fill="none" stroke="#48fd9f" stroke-width="1.500" stroke-linejoin="round"/><circle cx="169.0" cy="118.0" r=".9" fill="#e03a3a"/><circle cx="654.0" cy="106.2" r=".9" fill="#e03a3a"/><circle cx="174.2" cy="119.2" r=".9" fill="#2a5ae0"/><circle cx="659.8" cy="105.1" r=".9" fill="#2a5ae0"/><circle cx="179.4" cy="120.4" r=".9" fill="#e03a3a"/><circle cx="665.6" cy="104.0" r=".9" fill="#e03a3a"/><circle cx="184.6" cy="118.0" r=".9" fill="#2a5ae0"/><circle cx="671.4" cy="106.2" r=".9" fill="#2a5ae0"/><circle cx="189.8" cy="119.2" r=".9" fill="#e03a3a"/><circle cx="677.2" cy="105.1" r=".9" fill="#e03a3a"/><circle cx="195.0" cy="120.4" r=".9" fill="#2a5ae0"/><circle cx="683.0" cy="104.0" r=".9" fill="#2a5ae0"/><circle cx="200.2" cy="118.0" r=".9" fill="#e03a3a"/><circle cx="688.8" cy="106.2" r=".9" fill="#e03a3a"/><circle cx="205.4" cy="119.2" r=".9" fill="#2a5ae0"/><circle cx="694.6" cy="105.1" r=".9" fill="#2a5ae0"/><circle cx="210.6" cy="120.4" r=".9" fill="#e03a3a"/><circle cx="700.4" cy="104.0" r=".9" fill="#e03a3a"/><path d="M422.4 255.0L418.5 256.0L396.3 272.6L420.0 258.2Z" fill="#48fd9f" fill-opacity=".8" stroke="#48fd9f" stroke-width="1.100" stroke-linejoin="round"/><path d="M422.4 255.0L424.8 258.4L448.6 274.2L426.3 256.3Z" fill="#48fd9f" fill-opacity=".8" stroke="#48fd9f" stroke-width="1.100" stroke-linejoin="round"/><path d="M396.3 272.6L394.8 274.3L396.3 286.7L397.8 274.3Z" fill="#48fd9f" fill-opacity=".8" stroke="#48fd9f" stroke-width="1.100" stroke-linejoin="round"/><path d="M448.6 274.2L447.1 275.8L448.6 287.7L450.1 275.8Z" fill="#48fd9f" fill-opacity=".8" stroke="#48fd9f" stroke-width="1.100" stroke-linejoin="round"/><path d="M396.3 286.7L394.6 300.8L396.8 404.3L398.2 300.8Z" fill="#48fd9f" fill-opacity=".8" stroke="#48fd9f" stroke-width="1.100" stroke-linejoin="round"/><path d="M448.6 287.7L446.8 302.0L448.4 407.2L450.4 302.0Z" fill="#48fd9f" fill-opacity=".8" stroke="#48fd9f" stroke-width="1.100" stroke-linejoin="round"/><path d="M396.8 404.3L394.9 416.9L395.6 509.3L398.5 416.9Z" fill="#48fd9f" fill-opacity=".8" stroke="#48fd9f" stroke-width="1.100" stroke-linejoin="round"/><path d="M448.4 407.2L446.6 419.9L448.0 513.0L450.2 419.9Z" fill="#48fd9f" fill-opacity=".8" stroke="#48fd9f" stroke-width="1.100" stroke-linejoin="round"/><path d="M395.6 509.3L394.3 510.9L397.0 520.8L397.3 510.5Z" fill="#48fd9f" fill-opacity=".8" stroke="#48fd9f" stroke-width="1.100" stroke-linejoin="round"/><path d="M448.0 513.0L446.5 514.1L447.6 523.0L449.5 514.3Z" fill="#48fd9f" fill-opacity=".8" stroke="#48fd9f" stroke-width="1.100" stroke-linejoin="round"/><path d="M397.0 520.8L394.5 524.2L387.8 552.8L397.3 525.1Z" fill="#48fd9f" fill-opacity=".8" stroke="#48fd9f" stroke-width="1.100" stroke-linejoin="round"/><path d="M447.6 523.0L445.3 526.9L440.9 558.0L448.3 527.5Z" fill="#48fd9f" fill-opacity=".8" stroke="#48fd9f" stroke-width="1.100" stroke-linejoin="round"/><circle cx="421.8" cy="55.0" r="1.6" fill="none" stroke="#48fd9f" stroke-width=".9"/><path d="M421.8 55.0h2.500" stroke="#e04a3a" stroke-width="1"/><path d="M421.8 55.0v-2" stroke="#38c838" stroke-width=".8"/><circle cx="421.8" cy="117.0" r="1.6" fill="none" stroke="#48fd9f" stroke-width=".9"/><path d="M421.8 117.0h2.500" stroke="#e04a3a" stroke-width="1"/><path d="M421.8 117.0v-2" stroke="#38c838" stroke-width=".8"/><circle cx="422.7" cy="156.5" r="1.6" fill="none" stroke="#48fd9f" stroke-width=".9"/><path d="M422.7 156.5h2.500" stroke="#e04a3a" stroke-width="1"/><path d="M422.7 156.5v-2" stroke="#38c838" stroke-width=".8"/><circle cx="422.7" cy="195.6" r="1.6" fill="none" stroke="#48fd9f" stroke-width=".9"/><path d="M422.7 195.6h2.500" stroke="#e04a3a" stroke-width="1"/><path d="M422.7 195.6v-2" stroke="#38c838" stroke-width=".8"/><circle cx="422.8" cy="233.8" r="1.6" fill="none" stroke="#48fd9f" stroke-width=".9"/><path d="M422.8 233.8h2.500" stroke="#e04a3a" stroke-width="1"/><path d="M422.8 233.8v-2" stroke="#38c838" stroke-width=".8"/><circle cx="422.4" cy="255.0" r="1.6" fill="none" stroke="#48fd9f" stroke-width=".9"/><path d="M422.4 255.0h2.500" stroke="#e04a3a" stroke-width="1"/><path d="M422.4 255.0v-2" stroke="#38c838" stroke-width=".8"/><circle cx="400.3" cy="112.8" r="1.6" fill="none" stroke="#48fd9f" stroke-width=".9"/><path d="M400.3 112.8h2.500" stroke="#e04a3a" stroke-width="1"/><path d="M400.3 112.8v-2" stroke="#38c838" stroke-width=".8"/><circle cx="443.3" cy="112.0" r="1.6" fill="none" stroke="#48fd9f" stroke-width=".9"/><path d="M443.3 112.0h2.500" stroke="#e04a3a" stroke-width="1"/><path d="M443.3 112.0v-2" stroke="#38c838" stroke-width=".8"/><circle cx="396.3" cy="272.6" r="1.6" fill="none" stroke="#48fd9f" stroke-width=".9"/><path d="M396.3 272.6h2.500" stroke="#e04a3a" stroke-width="1"/><path d="M396.3 272.6v-2" stroke="#38c838" stroke-width=".8"/><circle cx="396.3" cy="286.7" r="1.6" fill="none" stroke="#48fd9f" stroke-width=".9"/><path d="M396.3 286.7h2.500" stroke="#e04a3a" stroke-width="1"/><path d="M396.3 286.7v-2" stroke="#38c838" stroke-width=".8"/><circle cx="396.8" cy="404.3" r="1.6" fill="none" stroke="#48fd9f" stroke-width=".9"/><path d="M396.8 404.3h2.500" stroke="#e04a3a" stroke-width="1"/><path d="M396.8 404.3v-2" stroke="#38c838" stroke-width=".8"/><circle cx="395.6" cy="509.3" r="1.6" fill="none" stroke="#48fd9f" stroke-width=".9"/><path d="M395.6 509.3h2.500" stroke="#e04a3a" stroke-width="1"/><path d="M395.6 509.3v-2" stroke="#38c838" stroke-width=".8"/><circle cx="397.0" cy="520.8" r="1.6" fill="none" stroke="#48fd9f" stroke-width=".9"/><path d="M397.0 520.8h2.500" stroke="#e04a3a" stroke-width="1"/><path d="M397.0 520.8v-2" stroke="#38c838" stroke-width=".8"/><circle cx="387.8" cy="552.8" r="1.6" fill="none" stroke="#48fd9f" stroke-width=".9"/><path d="M387.8 552.8h2.500" stroke="#e04a3a" stroke-width="1"/><path d="M387.8 552.8v-2" stroke="#38c838" stroke-width=".8"/><circle cx="448.6" cy="274.2" r="1.6" fill="none" stroke="#48fd9f" stroke-width=".9"/><path d="M448.6 274.2h2.500" stroke="#e04a3a" stroke-width="1"/><path d="M448.6 274.2v-2" stroke="#38c838" stroke-width=".8"/><circle cx="448.6" cy="287.7" r="1.6" fill="none" stroke="#48fd9f" stroke-width=".9"/><path d="M448.6 287.7h2.500" stroke="#e04a3a" stroke-width="1"/><path d="M448.6 287.7v-2" stroke="#38c838" stroke-width=".8"/><circle cx="448.4" cy="407.2" r="1.6" fill="none" stroke="#48fd9f" stroke-width=".9"/><path d="M448.4 407.2h2.500" stroke="#e04a3a" stroke-width="1"/><path d="M448.4 407.2v-2" stroke="#38c838" stroke-width=".8"/><circle cx="448.0" cy="513.0" r="1.6" fill="none" stroke="#48fd9f" stroke-width=".9"/><path d="M448.0 513.0h2.500" stroke="#e04a3a" stroke-width="1"/><path d="M448.0 513.0v-2" stroke="#38c838" stroke-width=".8"/><circle cx="447.6" cy="523.0" r="1.6" fill="none" stroke="#48fd9f" stroke-width=".9"/><path d="M447.6 523.0h2.500" stroke="#e04a3a" stroke-width="1"/><path d="M447.6 523.0v-2" stroke="#38c838" stroke-width=".8"/><circle cx="440.9" cy="558.0" r="1.6" fill="none" stroke="#48fd9f" stroke-width=".9"/><path d="M440.9 558.0h2.500" stroke="#e04a3a" stroke-width="1"/><path d="M440.9 558.0v-2" stroke="#38c838" stroke-width=".8"/><circle cx="362.0" cy="113.7" r="1.6" fill="none" stroke="#48fd9f" stroke-width=".9"/><path d="M362.0 113.7h2.500" stroke="#e04a3a" stroke-width="1"/><path d="M362.0 113.7v-2" stroke="#38c838" stroke-width=".8"/><circle cx="290.0" cy="115.9" r="1.6" fill="none" stroke="#48fd9f" stroke-width=".9"/><path d="M290.0 115.9h2.500" stroke="#e04a3a" stroke-width="1"/><path d="M290.0 115.9v-2" stroke="#38c838" stroke-width=".8"/><circle cx="224.5" cy="116.7" r="1.6" fill="none" stroke="#48fd9f" stroke-width=".9"/><path d="M224.5 116.7h2.500" stroke="#e04a3a" stroke-width="1"/><path d="M224.5 116.7v-2" stroke="#38c838" stroke-width=".8"/><circle cx="480.5" cy="110.6" r="1.6" fill="none" stroke="#48fd9f" stroke-width=".9"/><path d="M480.5 110.6h2.500" stroke="#e04a3a" stroke-width="1"/><path d="M480.5 110.6v-2" stroke="#38c838" stroke-width=".8"/><circle cx="561.4" cy="109.3" r="1.6" fill="none" stroke="#48fd9f" stroke-width=".9"/><path d="M561.4 109.3h2.500" stroke="#e04a3a" stroke-width="1"/><path d="M561.4 109.3v-2" stroke="#38c838" stroke-width=".8"/><circle cx="638.0" cy="107.0" r="1.6" fill="none" stroke="#48fd9f" stroke-width=".9"/><path d="M638.0 107.0h2.500" stroke="#e04a3a" stroke-width="1"/><path d="M638.0 107.0v-2" stroke="#38c838" stroke-width=".8"/><circle cx="369.9" cy="114.0" r="1.6" fill="none" stroke="#48fd9f" stroke-width=".9"/><path d="M369.9 114.0h2.500" stroke="#e04a3a" stroke-width="1"/><path d="M369.9 114.0v-2" stroke="#38c838" stroke-width=".8"/><circle cx="476.0" cy="111.2" r="1.6" fill="none" stroke="#48fd9f" stroke-width=".9"/><path d="M476.0 111.2h2.500" stroke="#e04a3a" stroke-width="1"/><path d="M476.0 111.2v-2" stroke="#38c838" stroke-width=".8"/><circle cx="396.3" cy="286.7" r="2.800" fill="none" stroke="#48fd9f" stroke-width=".8"/><circle cx="448.6" cy="287.7" r="2.800" fill="none" stroke="#48fd9f" stroke-width=".8"/><circle cx="395.6" cy="509.3" r="2.800" fill="none" stroke="#48fd9f" stroke-width=".8"/><circle cx="448.0" cy="513.0" r="2.800" fill="none" stroke="#48fd9f" stroke-width=".8"/><circle cx="224.5" cy="116.7" r="2.800" fill="none" stroke="#48fd9f" stroke-width=".8"/><circle cx="638.0" cy="107.0" r="2.800" fill="none" stroke="#48fd9f" stroke-width=".8"/><circle cx="362.0" cy="113.7" r="2.800" fill="none" stroke="#48fd9f" stroke-width=".8"/><circle cx="480.5" cy="110.6" r="2.800" fill="none" stroke="#48fd9f" stroke-width=".8"/></g><rect x="461.5" y="499.4" width="10" height="10" fill="#7a7ae0" fill-opacity=".45" stroke="#6c6ce8" stroke-width=".9"/><path d="M463.0 503.0h7" stroke="#6c6ce8" stroke-width=".7"/><path d="M421.7 542.0L421.7 491.0" stroke="#3ee03e" stroke-width="1.200"/><path d="M428.0 546.3L478.0 549.8" stroke="#e02020" stroke-width="1.200"/><path d="M419.5 549.5L410.5 567.0" stroke="#1010c8" stroke-width="1.600"/><rect x="417.7" y="483.3" width="8" height="8" fill="#00e000"/><path d="M417.7 483.3l1.200-1.200h8v8l-1.200 1.200v-8z" fill="#5cff5c"/><rect x="477.5" y="546.2" width="8" height="8" fill="#f00000"/><path d="M477.5 546.2l1.200-1.200h8v8l-1.200 1.200v-8z" fill="#ff5a5a"/><rect x="405.2" y="566.7" width="8" height="8" fill="#0000e8"/><path d="M405.2 566.7l1.200-1.200h8v8l-1.200 1.200v-8z" fill="#4a4aff"/><rect x="417.7" y="541.7" width="8" height="8" fill="#f4f000"/><path d="M417.7 541.7l1.200-1.200h8v8l-1.200 1.200v-8z" fill="#ffff80"/><path d="M17.0 562.0v-9" stroke="#2fd82f" stroke-width="1.100"/><path d="M17.0 562.0h8" stroke="#e03030" stroke-width="1.100"/><path d="M17.0 562.0l-2.500-1.500" stroke="#2020e0" stroke-width="1.100"/></svg>
<div class="t" style="left:14.5px;top:544.5px;font-size:6.500px;font-weight:bold;color:#2fd82f;line-height:8px">Y</div>
<div class="t" style="left:25px;top:555.5px;font-size:6.500px;font-weight:bold;color:#e03030;line-height:8px">X</div>
<div class="t" style="left:11.5px;top:556px;font-size:6.500px;font-weight:bold;color:#2020e0;line-height:8px">Z</div>
<div class="t" style="left:78px;top:-2px;line-height:12px;height:12px;font-size:8.500px;font-weight:bold;color:#fff;text-shadow:.45px 0 0 #fff,-.2px 0 0 #fff">4</div>
<div class="t" style="left:125px;top:-2px;line-height:12px;height:12px;font-size:8.500px;font-weight:bold;color:#fff;text-shadow:.45px 0 0 #fff,-.2px 0 0 #fff">0</div>
<div class="t" style="left:168.5px;top:-2px;line-height:12px;height:12px;font-size:8.500px;font-weight:bold;color:#fff;text-shadow:.45px 0 0 #fff,-.2px 0 0 #fff">0</div>
<div class="t" style="left:78px;top:11px;line-height:12px;height:12px;font-size:8.500px;font-weight:bold;color:#fff;text-shadow:.45px 0 0 #fff,-.2px 0 0 #fff">6</div>
<div class="t" style="left:125px;top:11px;line-height:12px;height:12px;font-size:8.500px;font-weight:bold;color:#fff;text-shadow:.45px 0 0 #fff,-.2px 0 0 #fff">0</div>
<div class="t" style="left:168.5px;top:11px;line-height:12px;height:12px;font-size:8.500px;font-weight:bold;color:#fff;text-shadow:.45px 0 0 #fff,-.2px 0 0 #fff">0</div>
<div class="t" style="left:78px;top:25px;line-height:12px;height:12px;font-size:8.500px;font-weight:bold;color:#fff;text-shadow:.45px 0 0 #fff,-.2px 0 0 #fff">2</div>
<div class="t" style="left:125px;top:25px;line-height:12px;height:12px;font-size:8.500px;font-weight:bold;color:#fff;text-shadow:.45px 0 0 #fff,-.2px 0 0 #fff">0</div>
<div class="t" style="left:168.5px;top:25px;line-height:12px;height:12px;font-size:8.500px;font-weight:bold;color:#fff;text-shadow:.45px 0 0 #fff,-.2px 0 0 #fff">0</div>
<div class="t" style="left:78px;top:38px;line-height:12px;height:12px;font-size:8.500px;font-weight:bold;color:#fff;text-shadow:.45px 0 0 #fff,-.2px 0 0 #fff">4</div>
<div class="t" style="left:125px;top:38px;line-height:12px;height:12px;font-size:8.500px;font-weight:bold;color:#fff;text-shadow:.45px 0 0 #fff,-.2px 0 0 #fff">0</div>
<div class="t" style="left:168.5px;top:38px;line-height:12px;height:12px;font-size:8.500px;font-weight:bold;color:#fff;text-shadow:.45px 0 0 #fff,-.2px 0 0 #fff">0</div>
<div class="t" style="left:78px;top:51px;line-height:12px;height:12px;font-size:8.500px;font-weight:bold;color:#fff;text-shadow:.45px 0 0 #fff,-.2px 0 0 #fff">6</div>
<div class="t" style="left:125px;top:51px;line-height:12px;height:12px;font-size:8.500px;font-weight:bold;color:#fff;text-shadow:.45px 0 0 #fff,-.2px 0 0 #fff">0</div>
<div class="t" style="left:168.5px;top:51px;line-height:12px;height:12px;font-size:8.500px;font-weight:bold;color:#fff;text-shadow:.45px 0 0 #fff,-.2px 0 0 #fff">0</div>
<div class="t" style="left:115px;top:65px;line-height:12px;height:12px;font-size:8.500px;font-weight:bold;color:#fff;text-shadow:.45px 0 0 #fff,-.2px 0 0 #fff">0</div>
<div class="t" style="left:158px;top:65px;line-height:12px;height:12px;font-size:8.500px;font-weight:bold;color:#fff;text-shadow:.45px 0 0 #fff,-.2px 0 0 #fff">0</div>
<div class="t" style="left:98px;top:78px;line-height:12px;height:12px;font-size:8.500px;font-weight:bold;color:#fff;text-shadow:.45px 0 0 #fff,-.2px 0 0 #fff">8 192</div>
<div class="t" style="left:149px;top:78px;line-height:12px;height:12px;font-size:8.500px;font-weight:bold;color:#fff;text-shadow:.45px 0 0 #fff,-.2px 0 0 #fff">127</div>
<div class="t" style="left:185px;top:78px;line-height:12px;height:12px;font-size:8.500px;font-weight:bold;color:#fff;text-shadow:.45px 0 0 #fff,-.2px 0 0 #fff">7 198</div>
<div class="t" style="left:376px;top:11px;width:111.0px;text-align:justify;text-align-last:justify;text-justify:inter-character;line-height:12px;height:12px;font-size:8.500px;font-weight:bold;color:#fff;text-shadow:.45px 0 0 #fff,-.2px 0 0 #fff;transform:scaleX(0.613);transform-origin:0 50%">シンメトリ: オブジェクト X</div>
<div class="t" style="left:714px;top:-2px;width:65.9px;text-align:justify;text-align-last:justify;text-justify:inter-character;line-height:12px;height:12px;font-size:8.500px;font-weight:bold;color:#fff;text-shadow:.45px 0 0 #fff,-.2px 0 0 #fff;transform:scaleX(0.592);transform-origin:0 50%">バックフェース:</div>
<div class="t" style="left:804px;top:-2px;width:17.3px;text-align:justify;text-align-last:justify;text-justify:inter-character;line-height:12px;height:12px;font-size:8.500px;font-weight:bold;color:#fff;text-shadow:.45px 0 0 #fff,-.2px 0 0 #fff;transform:scaleX(0.694);transform-origin:0 50%">なし</div>
<div class="t" style="left:714px;top:11px;width:31.2px;text-align:justify;text-align-last:justify;text-justify:inter-character;line-height:12px;height:12px;font-size:8.500px;font-weight:bold;color:#fff;text-shadow:.45px 0 0 #fff,-.2px 0 0 #fff;transform:scaleX(0.705);transform-origin:0 50%">平滑性:</div>
<div class="t" style="left:804px;top:11px;width:17.3px;text-align:justify;text-align-last:justify;text-justify:inter-character;line-height:12px;height:12px;font-size:8.500px;font-weight:bold;color:#fff;text-shadow:.45px 0 0 #fff,-.2px 0 0 #fff;transform:scaleX(0.694);transform-origin:0 50%">なし</div>
<div class="t" style="left:714px;top:25px;width:83.2px;text-align:justify;text-align-last:justify;text-justify:inter-character;line-height:12px;height:12px;font-size:8.500px;font-weight:bold;color:#fff;text-shadow:.45px 0 0 #fff,-.2px 0 0 #fff;transform:scaleX(0.673);transform-origin:0 50%">インスタンスの有無:</div>
<div class="t" style="left:804px;top:25px;width:26.0px;text-align:justify;text-align-last:justify;text-justify:inter-character;line-height:12px;height:12px;font-size:8.500px;font-weight:bold;color:#fff;text-shadow:.45px 0 0 #fff,-.2px 0 0 #fff;transform:scaleX(0.654);transform-origin:0 50%">いいえ</div>
<div class="t" style="left:714px;top:38px;width:85.8px;text-align:justify;text-align-last:justify;text-justify:inter-character;line-height:12px;height:12px;font-size:8.500px;font-weight:bold;color:#fff;text-shadow:.45px 0 0 #fff,-.2px 0 0 #fff;transform:scaleX(0.641);transform-origin:0 50%">ディスプレイ レイヤ:</div>
<div class="t" style="left:804px;top:38px;width:17.3px;text-align:justify;text-align-last:justify;text-justify:inter-character;line-height:12px;height:12px;font-size:8.500px;font-weight:bold;color:#fff;text-shadow:.45px 0 0 #fff,-.2px 0 0 #fff;transform:scaleX(0.809);transform-origin:0 50%">既定</div>
<div class="t" style="left:714px;top:51px;width:74.6px;text-align:justify;text-align-last:justify;text-justify:inter-character;line-height:12px;height:12px;font-size:8.500px;font-weight:bold;color:#fff;text-shadow:.45px 0 0 #fff,-.2px 0 0 #fff;transform:scaleX(0.67);transform-origin:0 50%">カメラからの距離:</div>
<div class="t" style="left:714px;top:65px;width:91.9px;text-align:justify;text-align-last:justify;text-justify:inter-character;line-height:12px;height:12px;font-size:8.500px;font-weight:bold;color:#fff;text-shadow:.45px 0 0 #fff,-.2px 0 0 #fff;transform:scaleX(0.664);transform-origin:0 50%">選択したオブジェクト:</div>
<div class="t" style="left:804px;top:51px;line-height:12px;height:12px;font-size:8.500px;font-weight:bold;color:#fff;text-shadow:.45px 0 0 #fff,-.2px 0 0 #fff">25.67</div>
<div class="t" style="left:805px;top:65px;line-height:12px;height:12px;font-size:8.500px;font-weight:bold;color:#fff;text-shadow:.45px 0 0 #fff,-.2px 0 0 #fff">1</div>
<div class="t" style="left:763px;top:565px;width:48.6px;text-align:justify;text-align-last:justify;text-justify:inter-character;line-height:12px;height:12px;font-size:8.500px;font-weight:bold;color:#fff;text-shadow:.45px 0 0 #fff,-.2px 0 0 #fff;transform:scaleX(0.679);transform-origin:0 50%">ソフト選択:</div>
<div class="t" style="left:839px;top:565px;width:17.3px;text-align:justify;text-align-last:justify;text-justify:inter-character;line-height:12px;height:12px;font-size:8.500px;font-weight:bold;color:#fff;text-shadow:.45px 0 0 #fff,-.2px 0 0 #fff;transform:scaleX(0.578);transform-origin:0 50%">オフ</div>
<div class="t" style="left:418.5px;top:566px;line-height:11px;font-size:8px;font-weight:bold;color:#fff;transform:scaleX(.9);transform-origin:0 50%">persp</div>
</div>
<div class="a" style="left:1076px;top:82px;width:4px;height:612px;background:#3a3a3a;"></div>
<div class="a" style="left:212px;top:692px;width:868px;height:2px;background:#3a3a3a;"></div>
<!-- ===== RIGHT ===== -->
<div class="a" style="left:1080px;top:82px;width:200px;height:612px;background:#444;"></div>
<div class="a" style="left:1080px;top:83px;width:12px;height:53px;background:#3a3a3a;"></div>
<div class="t" style="left:1092px;top:87px;width:53.3px;text-align:justify;text-align-last:justify;text-justify:inter-character;line-height:12px;height:12px;font-size:9.5px;color:#bdbdbd;font-weight:normal;transform-origin:0 0;transform:rotate(90deg) scaleX(0.769)">UV エディタ</div>
<div class="a" style="left:1093px;top:83px;width:1px;height:608px;background:#393939;"></div>
<svg class="a" style="left:1225px;top:84px;" width="13" height="13" viewBox="0 0 13 13"><path d="M6.500 7v-5M6.500 7l-4.500 3.500M6.500 7l4.500 3.500" stroke="#ddd" stroke-width="1"/><circle cx="6.500" cy="2.500" r="2" fill="#3fd03f"/><circle cx="2.500" cy="10.500" r="2" fill="#3a5cff"/><circle cx="10.500" cy="10.500" r="2" fill="#e03030"/></svg>
<svg class="a" style="left:1238px;top:84px;" width="14" height="13" viewBox="0 0 14 13"><circle cx="7" cy="6.500" r="5.500" fill="#34c3c9"/><path d="M3.500 9a3.500 3.500 0 1 1 7 0" fill="none" stroke="#444" stroke-width="2"/></svg>
<svg class="a" style="left:1252px;top:84px;" width="13" height="13" viewBox="0 0 13 13"><path d="M1.500 1.500v10h10" fill="none" stroke="#bbb" stroke-width="1"/><path d="M4 9l7-7" stroke="#34c3c9" stroke-width="1.600"/><path d="M11.500 1l-3.500.8 2.700 2.700z" fill="#34c3c9"/></svg>
<div class="t" style="left:1101px;top:99px;width:38.8px;text-align:justify;text-align-last:justify;text-justify:inter-character;line-height:12px;height:12px;font-size:9.5px;color:#e4e4e4;font-weight:bold;transform:scaleX(0.619);transform-origin:0 50%">チャネル</div>
<div class="t" style="left:1135px;top:99px;width:19.4px;text-align:justify;text-align-last:justify;text-justify:inter-character;line-height:12px;height:12px;font-size:9.5px;color:#e4e4e4;font-weight:bold;transform:scaleX(0.825);transform-origin:0 50%">編集</div>
<div class="t" style="left:1161px;top:99px;width:58.1px;text-align:justify;text-align-last:justify;text-justify:inter-character;line-height:12px;height:12px;font-size:9.5px;color:#e4e4e4;font-weight:bold;transform:scaleX(0.602);transform-origin:0 50%">オブジェクト</div>
<div class="t" style="left:1205px;top:99px;width:19.4px;text-align:justify;text-align-last:justify;text-justify:inter-character;line-height:12px;height:12px;font-size:9.5px;color:#e4e4e4;font-weight:bold;transform:scaleX(0.825);transform-origin:0 50%">表示</div>
<div class="t" style="left:1096px;top:113px;line-height:12px;height:12px;font-size:10.5px;color:#f4f4f4;font-weight:bold;transform:scaleX(0.765);transform-origin:0 50%">Character1_Reference</div>
<div class="a" style="left:1216px;top:124px;width:49px;height:10px;background:#2b2b2b;"></div>
<div class="t" style="right:69px;top:123px;width:28.1px;text-align:justify;text-align-last:justify;text-justify:inter-character;line-height:12px;height:12px;font-size:9.5px;color:#d2d2d2;font-weight:normal;transform:scaleX(0.819);transform-origin:100% 50%">移動 X</div>
<div class="t" style="left:1221px;top:123px;line-height:12px;height:12px;font-size:10.5px;color:#e8e8e8;font-weight:normal;transform:scaleX(0.8);transform-origin:0 50%">0</div>
<div class="a" style="left:1216px;top:135px;width:49px;height:10px;background:#2b2b2b;"></div>
<div class="t" style="right:69px;top:134px;width:28.1px;text-align:justify;text-align-last:justify;text-justify:inter-character;line-height:12px;height:12px;font-size:9.5px;color:#d2d2d2;font-weight:normal;transform:scaleX(0.819);transform-origin:100% 50%">移動 Y</div>
<div class="t" style="left:1221px;top:134px;line-height:12px;height:12px;font-size:10.5px;color:#e8e8e8;font-weight:normal;transform:scaleX(0.8);transform-origin:0 50%">0</div>
<div class="a" style="left:1216px;top:145px;width:49px;height:10px;background:#2b2b2b;"></div>
<div class="t" style="right:69px;top:144px;width:28.1px;text-align:justify;text-align-last:justify;text-justify:inter-character;line-height:12px;height:12px;font-size:9.5px;color:#d2d2d2;font-weight:normal;transform:scaleX(0.819);transform-origin:100% 50%">移動 Z</div>
<div class="t" style="left:1221px;top:144px;line-height:12px;height:12px;font-size:10.5px;color:#e8e8e8;font-weight:normal;transform:scaleX(0.8);transform-origin:0 50%">0</div>
<div class="a" style="left:1216px;top:156px;width:49px;height:10px;background:#2b2b2b;"></div>
<div class="t" style="right:69px;top:155px;width:28.1px;text-align:justify;text-align-last:justify;text-justify:inter-character;line-height:12px;height:12px;font-size:9.5px;color:#d2d2d2;font-weight:normal;transform:scaleX(0.819);transform-origin:100% 50%">回転 X</div>
<div class="t" style="left:1221px;top:155px;line-height:12px;height:12px;font-size:10.5px;color:#e8e8e8;font-weight:normal;transform:scaleX(0.8);transform-origin:0 50%">0</div>
<div class="a" style="left:1216px;top:167px;width:49px;height:10px;background:#2b2b2b;"></div>
<div class="t" style="right:69px;top:166px;width:28.1px;text-align:justify;text-align-last:justify;text-justify:inter-character;line-height:12px;height:12px;font-size:9.5px;color:#d2d2d2;font-weight:normal;transform:scaleX(0.819);transform-origin:100% 50%">回転 Y</div>
<div class="t" style="left:1221px;top:166px;line-height:12px;height:12px;font-size:10.5px;color:#e8e8e8;font-weight:normal;transform:scaleX(0.8);transform-origin:0 50%">0</div>
<div class="a" style="left:1216px;top:177px;width:49px;height:10px;background:#2b2b2b;"></div>
<div class="t" style="right:69px;top:176px;width:28.1px;text-align:justify;text-align-last:justify;text-justify:inter-character;line-height:12px;height:12px;font-size:9.5px;color:#d2d2d2;font-weight:normal;transform:scaleX(0.819);transform-origin:100% 50%">回転 Z</div>
<div class="t" style="left:1221px;top:176px;line-height:12px;height:12px;font-size:10.5px;color:#e8e8e8;font-weight:normal;transform:scaleX(0.8);transform-origin:0 50%">0</div>
<div class="a" style="left:1097px;top:188px;width:119px;height:10px;background:#5285a6;"></div>
<div class="a" style="left:1216px;top:188px;width:49px;height:10px;background:#2b2b2b;"></div>
<div class="t" style="right:69px;top:187px;width:47.5px;text-align:justify;text-align-last:justify;text-justify:inter-character;line-height:12px;height:12px;font-size:9.5px;color:#f4f4f4;font-weight:bold;transform:scaleX(0.674);transform-origin:100% 50%">スケール X</div>
<div class="t" style="left:1221px;top:187px;line-height:12px;height:12px;font-size:10.5px;color:#e8e8e8;font-weight:normal;transform:scaleX(0.8);transform-origin:0 50%">0.093</div>
<div class="a" style="left:1097px;top:199px;width:119px;height:10px;background:#5285a6;"></div>
<div class="a" style="left:1216px;top:199px;width:49px;height:10px;background:#2b2b2b;"></div>
<div class="t" style="right:69px;top:198px;width:47.5px;text-align:justify;text-align-last:justify;text-justify:inter-character;line-height:12px;height:12px;font-size:9.5px;color:#f4f4f4;font-weight:bold;transform:scaleX(0.674);transform-origin:100% 50%">スケール Y</div>
<div class="t" style="left:1221px;top:198px;line-height:12px;height:12px;font-size:10.5px;color:#e8e8e8;font-weight:normal;transform:scaleX(0.8);transform-origin:0 50%">0.093</div>
<div class="a" style="left:1097px;top:209px;width:119px;height:10px;background:#5285a6;"></div>
<div class="a" style="left:1216px;top:209px;width:49px;height:10px;background:#2b2b2b;"></div>
<div class="t" style="right:69px;top:208px;width:47.5px;text-align:justify;text-align-last:justify;text-justify:inter-character;line-height:12px;height:12px;font-size:9.5px;color:#f4f4f4;font-weight:bold;transform:scaleX(0.674);transform-origin:100% 50%">スケール Z</div>
<div class="t" style="left:1221px;top:208px;line-height:12px;height:12px;font-size:10.5px;color:#e8e8e8;font-weight:normal;transform:scaleX(0.8);transform-origin:0 50%">0.093</div>
<div class="a" style="left:1216px;top:220px;width:49px;height:10px;background:#2b2b2b;"></div>
<div class="t" style="right:69px;top:219px;width:29.1px;text-align:justify;text-align-last:justify;text-justify:inter-character;line-height:12px;height:12px;font-size:9.5px;color:#d2d2d2;font-weight:normal;transform:scaleX(0.825);transform-origin:100% 50%">可視性</div>
<div class="t" style="left:1221px;top:219px;width:19.4px;text-align:justify;text-align-last:justify;text-justify:inter-character;line-height:12px;height:12px;font-size:9.5px;color:#e8e8e8;font-weight:bold;transform:scaleX(0.567);transform-origin:0 50%">オン</div>
<div class="t" style="left:1096px;top:230px;width:38.8px;text-align:justify;text-align-last:justify;text-justify:inter-character;line-height:12px;height:12px;font-size:9.5px;color:#f4f4f4;font-weight:bold;transform:scaleX(0.619);transform-origin:0 50%">シェイプ</div>
<div class="a" style="left:1097px;top:242px;width:168px;height:10.5px;background:#3c3c3c;"></div>
<div class="t" style="left:1106px;top:241px;line-height:12px;height:12px;font-size:10.5px;color:#f4f4f4;font-weight:bold;transform:scaleX(0.765);transform-origin:0 50%">Character1_ReferenceShape</div>
<div class="a" style="left:1216px;top:253px;width:49px;height:10px;background:#2b2b2b;"></div>
<div class="a" style="left:1215px;top:253px;width:4px;height:10px;background:#8c8c8c;"></div>
<div class="t" style="right:69px;top:252px;width:66.9px;text-align:justify;text-align-last:justify;text-justify:inter-character;line-height:12px;height:12px;font-size:9.5px;color:#d2d2d2;font-weight:normal;transform:scaleX(0.703);transform-origin:100% 50%">ローカル位置 X</div>
<div class="t" style="left:1221px;top:252px;line-height:12px;height:12px;font-size:10.5px;color:#e8e8e8;font-weight:normal;transform:scaleX(0.8);transform-origin:0 50%">0</div>
<div class="a" style="left:1216px;top:263px;width:49px;height:10px;background:#2b2b2b;"></div>
<div class="a" style="left:1215px;top:263px;width:4px;height:10px;background:#8c8c8c;"></div>
<div class="t" style="right:69px;top:262px;width:66.9px;text-align:justify;text-align-last:justify;text-justify:inter-character;line-height:12px;height:12px;font-size:9.5px;color:#d2d2d2;font-weight:normal;transform:scaleX(0.703);transform-origin:100% 50%">ローカル位置 Y</div>
<div class="t" style="left:1221px;top:262px;line-height:12px;height:12px;font-size:10.5px;color:#e8e8e8;font-weight:normal;transform:scaleX(0.8);transform-origin:0 50%">0</div>
<div class="a" style="left:1216px;top:274px;width:49px;height:10px;background:#2b2b2b;"></div>
<div class="a" style="left:1215px;top:274px;width:4px;height:10px;background:#8c8c8c;"></div>
<div class="t" style="right:69px;top:273px;width:66.9px;text-align:justify;text-align-last:justify;text-justify:inter-character;line-height:12px;height:12px;font-size:9.5px;color:#d2d2d2;font-weight:normal;transform:scaleX(0.703);transform-origin:100% 50%">ローカル位置 Z</div>
<div class="t" style="left:1221px;top:273px;line-height:12px;height:12px;font-size:10.5px;color:#e8e8e8;font-weight:normal;transform:scaleX(0.8);transform-origin:0 50%">0</div>
<div class="a" style="left:1216px;top:285px;width:49px;height:10px;background:#2b2b2b;"></div>
<div class="a" style="left:1215px;top:285px;width:4px;height:10px;background:#8c8c8c;"></div>
<div class="t" style="right:69px;top:284px;width:89.1px;text-align:justify;text-align-last:justify;text-justify:inter-character;line-height:12px;height:12px;font-size:9.5px;color:#d2d2d2;font-weight:normal;transform:scaleX(0.662);transform-origin:100% 50%">ローカル スケール X</div>
<div class="t" style="left:1221px;top:284px;line-height:12px;height:12px;font-size:10.5px;color:#e8e8e8;font-weight:normal;transform:scaleX(0.8);transform-origin:0 50%">1</div>
<div class="a" style="left:1216px;top:296px;width:49px;height:10px;background:#2b2b2b;"></div>
<div class="a" style="left:1215px;top:296px;width:4px;height:10px;background:#8c8c8c;"></div>
<div class="t" style="right:69px;top:295px;width:89.1px;text-align:justify;text-align-last:justify;text-justify:inter-character;line-height:12px;height:12px;font-size:9.5px;color:#d2d2d2;font-weight:normal;transform:scaleX(0.662);transform-origin:100% 50%">ローカル スケール Y</div>
<div class="t" style="left:1221px;top:295px;line-height:12px;height:12px;font-size:10.5px;color:#e8e8e8;font-weight:normal;transform:scaleX(0.8);transform-origin:0 50%">1</div>
<div class="a" style="left:1216px;top:307px;width:49px;height:10px;background:#2b2b2b;"></div>
<div class="a" style="left:1215px;top:307px;width:4px;height:10px;background:#8c8c8c;"></div>
<div class="t" style="right:69px;top:306px;width:89.1px;text-align:justify;text-align-last:justify;text-justify:inter-character;line-height:12px;height:12px;font-size:9.5px;color:#d2d2d2;font-weight:normal;transform:scaleX(0.662);transform-origin:100% 50%">ローカル スケール Z</div>
<div class="t" style="left:1221px;top:306px;line-height:12px;height:12px;font-size:10.5px;color:#e8e8e8;font-weight:normal;transform:scaleX(0.8);transform-origin:0 50%">1</div>
<div class="t" style="left:1096px;top:315.5px;width:19.4px;text-align:justify;text-align-last:justify;text-justify:inter-character;line-height:12px;height:12px;font-size:9.5px;color:#f4f4f4;font-weight:bold;transform:scaleX(0.773);transform-origin:0 50%">出力</div>
<div class="t" style="left:1106px;top:326.5px;line-height:12px;height:12px;font-size:10.5px;color:#f4f4f4;font-weight:bold;transform:scaleX(0.765);transform-origin:0 50%">Character1</div>
<div class="a" style="left:1097px;top:348px;width:168px;height:161px;background:#2b2b2b;"></div>
<div class="a" style="left:1150px;top:512px;width:60px;height:3px;background:transparent;background-image:radial-gradient(#5a5a5a 0.600px,transparent 0.800px);background-size:2px 2px"></div>
<div class="a" style="left:1094px;top:517px;width:172px;height:1px;background:#393939;"></div>
<div class="a" style="left:1098px;top:519px;width:48px;height:12px;background:#4c4c4c;"></div>
<div class="a" style="left:1147px;top:519px;width:52px;height:12px;background:#3b3b3b;"></div>
<div class="t" style="left:1103px;top:519px;width:58.1px;text-align:justify;text-align-last:justify;text-justify:inter-character;line-height:12px;height:12px;font-size:9.5px;color:#f4f4f4;font-weight:bold;transform:scaleX(0.62);transform-origin:0 50%">ディスプレイ</div>
<div class="t" style="left:1154px;top:519px;width:67.8px;text-align:justify;text-align-last:justify;text-justify:inter-character;line-height:12px;height:12px;font-size:9.5px;color:#aaa;font-weight:normal;transform:scaleX(0.619);transform-origin:0 50%">アニメーション</div>
<div class="t" style="left:1103px;top:531.5px;width:29.1px;text-align:justify;text-align-last:justify;text-justify:inter-character;line-height:12px;height:12px;font-size:9.5px;color:#e4e4e4;font-weight:bold;transform:scaleX(0.619);transform-origin:0 50%">レイヤ</div>
<div class="t" style="left:1131px;top:531.5px;width:48.5px;text-align:justify;text-align-last:justify;text-justify:inter-character;line-height:12px;height:12px;font-size:9.5px;color:#e4e4e4;font-weight:bold;transform:scaleX(0.598);transform-origin:0 50%">オプション</div>
<div class="t" style="left:1170px;top:531.5px;width:29.1px;text-align:justify;text-align-last:justify;text-justify:inter-character;line-height:12px;height:12px;font-size:9.5px;color:#e4e4e4;font-weight:bold;transform:scaleX(0.653);transform-origin:0 50%">ヘルプ</div>
<svg class="a" style="left:1199px;top:546px;" width="13" height="11" viewBox="0 0 13 11"><path d="M1 6l5-3.500 5 3.500-5 3.500z" fill="#ddd"/><path d="M10 2v7M8 6.500l2 2.500 2-2.500" stroke="#34c3c9" stroke-width="1.200" fill="none"/></svg>
<svg class="a" style="left:1215px;top:546px;" width="13" height="11" viewBox="0 0 13 11"><path d="M1 6l5-3.500 5 3.500-5 3.500z" fill="#ddd"/><path d="M10 2v7M8 6.500l2 2.500 2-2.500" stroke="#34c3c9" stroke-width="1.200" fill="none"/></svg>
<svg class="a" style="left:1232px;top:546px;" width="13" height="11" viewBox="0 0 13 11"><path d="M1 6l5-3.500 5 3.500-5 3.500z" fill="#ddd"/><circle cx="10.500" cy="3" r="2" fill="#34c3c9"/></svg>
<svg class="a" style="left:1247px;top:546px;" width="13" height="11" viewBox="0 0 13 11"><path d="M1 6l5-3.500 5 3.500-5 3.500z" fill="#ddd"/><circle cx="10.500" cy="3" r="2" fill="#34c3c9"/></svg>
<div class="a" style="left:1097px;top:562px;width:166px;height:118px;background:#2b2b2b;"></div>
<div class="a" style="left:1097px;top:680px;width:166px;height:9px;background:#3a3a3a;"></div>
<div class="a" style="left:1106px;top:681px;width:104px;height:6px;background:#666;border-radius:3px"></div>
<svg class="a" style="left:1098px;top:680px;" width="6" height="8" viewBox="0 0 6 8"><path d="M5 0v8l-4.500-4z" fill="#ccc"/></svg>
<svg class="a" style="left:1256px;top:680px;" width="6" height="8" viewBox="0 0 6 8"><path d="M1 0v8l4.500-4z" fill="#ccc"/></svg>
<div class="a" style="left:1094px;top:690px;width:172px;height:1px;background:#393939;"></div>
<div class="a" style="left:1266px;top:82px;width:14px;height:612px;background:#3a3a3a;"></div>
<div class="a" style="left:1266px;top:83px;width:14px;height:112px;background:#484848;"></div>
<div class="a" style="left:1266px;top:195px;width:14px;height:1px;background:#2e2e2e;"></div>
<div class="a" style="left:1266px;top:284px;width:14px;height:1px;background:#2e2e2e;"></div>
<div class="a" style="left:1266px;top:361px;width:14px;height:1px;background:#2e2e2e;"></div>
<div class="a" style="left:1266px;top:427px;width:14px;height:1px;background:#2e2e2e;"></div>
<div class="a" style="left:1266px;top:463px;width:14px;height:1px;background:#2e2e2e;"></div>
<div class="a" style="left:1266px;top:611px;width:14px;height:1px;background:#2e2e2e;"></div>
<div class="a" style="left:1266px;top:664px;width:14px;height:1px;background:#2e2e2e;"></div>
<div class="t" style="left:1279px;top:89px;width:157.0px;text-align:justify;text-align-last:justify;text-justify:inter-character;line-height:12px;height:12px;font-size:9.5px;color:#f0f0f0;font-weight:bold;transform-origin:0 0;transform:rotate(90deg) scaleX(0.631)">チャネル ボックス/レイヤ エディタ</div>
<div class="t" style="left:1279px;top:204px;width:109.5px;text-align:justify;text-align-last:justify;text-justify:inter-character;line-height:12px;height:12px;font-size:9.5px;color:#b8b8b8;font-weight:normal;transform-origin:0 0;transform:rotate(90deg) scaleX(0.685)">モデリング ツールキット</div>
<div class="t" style="left:1279px;top:290px;width:109.5px;text-align:justify;text-align-last:justify;text-justify:inter-character;line-height:12px;height:12px;font-size:9.5px;color:#b8b8b8;font-weight:normal;transform-origin:0 0;transform:rotate(90deg) scaleX(0.575)">アトリビュート エディタ</div>
<div class="t" style="left:1279px;top:368px;width:72.7px;text-align:justify;text-align-last:justify;text-justify:inter-character;line-height:12px;height:12px;font-size:9.5px;color:#b8b8b8;font-weight:normal;transform-origin:0 0;transform:rotate(90deg) scaleX(0.743)">UV ツールキット</div>
<div class="t" style="left:1279px;top:434px;line-height:12px;height:12px;font-size:9.5px;color:#b8b8b8;font-weight:normal;transform-origin:0 0;transform:rotate(90deg) scaleX(0.901)">XGen</div>
<div class="t" style="left:1279px;top:471px;width:206.4px;text-align:justify;text-align-last:justify;text-justify:inter-character;line-height:12px;height:12px;font-size:9.5px;color:#b8b8b8;font-weight:normal;transform-origin:0 0;transform:rotate(90deg) scaleX(0.649)">XGen インタラクティブ グルーミング エディタ</div>
<div class="t" style="left:1279px;top:619px;line-height:12px;height:12px;font-size:9.5px;color:#b8b8b8;font-weight:normal;transform-origin:0 0;transform:rotate(90deg) scaleX(0.917)">Human IK</div>
<!-- ===== BOTTOM ===== -->
<div class="a" style="left:0px;top:694px;width:1280px;height:74px;background:#444;"></div>
<div class="a" style="left:3px;top:697px;width:3px;height:20px;background:transparent;background-image:radial-gradient(#5a5a5a 0.600px,transparent 0.800px);background-size:2px 2px"></div>
<div class="a" style="left:9px;top:695px;width:1075px;height:22px;background:#303030;"></div>
<div class="a" style="left:14px;top:697px;width:7px;height:20px;background:#7a7a7a;"></div>
<div class="t" style="left:15px;top:705px;line-height:10px;height:10px;font-size:9.5px;color:#fff;font-weight:bold;transform:scaleX(0.8);transform-origin:0 50%">1</div>
<div class="a" style="left:48.5px;top:707px;width:1px;height:9px;background:#d8d8d8;"></div>
<div class="t" style="left:50.5px;top:697px;line-height:10px;height:10px;font-size:9.5px;color:#9a9a9a;font-weight:normal;transform:scaleX(0.8);transform-origin:0 50%">5</div>
<div class="a" style="left:92.9px;top:707px;width:1px;height:9px;background:#d8d8d8;"></div>
<div class="t" style="left:94.9px;top:697px;line-height:10px;height:10px;font-size:9.5px;color:#9a9a9a;font-weight:normal;transform:scaleX(0.8);transform-origin:0 50%">10</div>
<div class="a" style="left:137.3px;top:707px;width:1px;height:9px;background:#d8d8d8;"></div>
<div class="t" style="left:139.3px;top:697px;line-height:10px;height:10px;font-size:9.5px;color:#9a9a9a;font-weight:normal;transform:scaleX(0.8);transform-origin:0 50%">15</div>
<div class="a" style="left:181.7px;top:707px;width:1px;height:9px;background:#d8d8d8;"></div>
<div class="t" style="left:183.7px;top:697px;line-height:10px;height:10px;font-size:9.5px;color:#9a9a9a;font-weight:normal;transform:scaleX(0.8);transform-origin:0 50%">20</div>
<div class="a" style="left:226.0px;top:707px;width:1px;height:9px;background:#d8d8d8;"></div>
<div class="t" style="left:228.0px;top:697px;line-height:10px;height:10px;font-size:9.5px;color:#9a9a9a;font-weight:normal;transform:scaleX(0.8);transform-origin:0 50%">25</div>
<div class="a" style="left:270.4px;top:707px;width:1px;height:9px;background:#d8d8d8;"></div>
<div class="t" style="left:272.4px;top:697px;line-height:10px;height:10px;font-size:9.5px;color:#9a9a9a;font-weight:normal;transform:scaleX(0.8);transform-origin:0 50%">30</div>
<div class="a" style="left:314.8px;top:707px;width:1px;height:9px;background:#d8d8d8;"></div>
<div class="t" style="left:316.8px;top:697px;line-height:10px;height:10px;font-size:9.5px;color:#9a9a9a;font-weight:normal;transform:scaleX(0.8);transform-origin:0 50%">35</div>
<div class="a" style="left:359.2px;top:707px;width:1px;height:9px;background:#d8d8d8;"></div>
<div class="t" style="left:361.2px;top:697px;line-height:10px;height:10px;font-size:9.5px;color:#9a9a9a;font-weight:normal;transform:scaleX(0.8);transform-origin:0 50%">40</div>
<div class="a" style="left:403.6px;top:707px;width:1px;height:9px;background:#d8d8d8;"></div>
<div class="t" style="left:405.6px;top:697px;line-height:10px;height:10px;font-size:9.5px;color:#9a9a9a;font-weight:normal;transform:scaleX(0.8);transform-origin:0 50%">45</div>
<div class="a" style="left:448.0px;top:707px;width:1px;height:9px;background:#d8d8d8;"></div>
<div class="t" style="left:450.0px;top:697px;line-height:10px;height:10px;font-size:9.5px;color:#9a9a9a;font-weight:normal;transform:scaleX(0.8);transform-origin:0 50%">50</div>
<div class="a" style="left:492.4px;top:707px;width:1px;height:9px;background:#d8d8d8;"></div>
<div class="t" style="left:494.4px;top:697px;line-height:10px;height:10px;font-size:9.5px;color:#9a9a9a;font-weight:normal;transform:scaleX(0.8);transform-origin:0 50%">55</div>
<div class="a" style="left:536.7px;top:707px;width:1px;height:9px;background:#d8d8d8;"></div>
<div class="t" style="left:538.7px;top:697px;line-height:10px;height:10px;font-size:9.5px;color:#9a9a9a;font-weight:normal;transform:scaleX(0.8);transform-origin:0 50%">60</div>
<div class="a" style="left:581.1px;top:707px;width:1px;height:9px;background:#d8d8d8;"></div>
<div class="t" style="left:583.1px;top:697px;line-height:10px;height:10px;font-size:9.5px;color:#9a9a9a;font-weight:normal;transform:scaleX(0.8);transform-origin:0 50%">65</div>
<div class="a" style="left:625.5px;top:707px;width:1px;height:9px;background:#d8d8d8;"></div>
<div class="t" style="left:627.5px;top:697px;line-height:10px;height:10px;font-size:9.5px;color:#9a9a9a;font-weight:normal;transform:scaleX(0.8);transform-origin:0 50%">70</div>
<div class="a" style="left:669.9px;top:707px;width:1px;height:9px;background:#d8d8d8;"></div>
<div class="t" style="left:671.9px;top:697px;line-height:10px;height:10px;font-size:9.5px;color:#9a9a9a;font-weight:normal;transform:scaleX(0.8);transform-origin:0 50%">75</div>
<div class="a" style="left:714.3px;top:707px;width:1px;height:9px;background:#d8d8d8;"></div>
<div class="t" style="left:716.3px;top:697px;line-height:10px;height:10px;font-size:9.5px;color:#9a9a9a;font-weight:normal;transform:scaleX(0.8);transform-origin:0 50%">80</div>
<div class="a" style="left:758.7px;top:707px;width:1px;height:9px;background:#d8d8d8;"></div>
<div class="t" style="left:760.7px;top:697px;line-height:10px;height:10px;font-size:9.5px;color:#9a9a9a;font-weight:normal;transform:scaleX(0.8);transform-origin:0 50%">85</div>
<div class="a" style="left:803.1px;top:707px;width:1px;height:9px;background:#d8d8d8;"></div>
<div class="t" style="left:805.1px;top:697px;line-height:10px;height:10px;font-size:9.5px;color:#9a9a9a;font-weight:normal;transform:scaleX(0.8);transform-origin:0 50%">90</div>
<div class="a" style="left:847.4px;top:707px;width:1px;height:9px;background:#d8d8d8;"></div>
<div class="t" style="left:849.4px;top:697px;line-height:10px;height:10px;font-size:9.5px;color:#9a9a9a;font-weight:normal;transform:scaleX(0.8);transform-origin:0 50%">95</div>
<div class="a" style="left:891.8px;top:707px;width:1px;height:9px;background:#d8d8d8;"></div>
<div class="t" style="left:893.8px;top:697px;line-height:10px;height:10px;font-size:9.5px;color:#9a9a9a;font-weight:normal;transform:scaleX(0.8);transform-origin:0 50%">100</div>
<div class="a" style="left:936.2px;top:707px;width:1px;height:9px;background:#d8d8d8;"></div>
<div class="t" style="left:938.2px;top:697px;line-height:10px;height:10px;font-size:9.5px;color:#9a9a9a;font-weight:normal;transform:scaleX(0.8);transform-origin:0 50%">105</div>
<div class="a" style="left:980.6px;top:707px;width:1px;height:9px;background:#d8d8d8;"></div>
<div class="t" style="left:982.6px;top:697px;line-height:10px;height:10px;font-size:9.5px;color:#9a9a9a;font-weight:normal;transform:scaleX(0.8);transform-origin:0 50%">110</div>
<div class="a" style="left:1025.0px;top:707px;width:1px;height:9px;background:#d8d8d8;"></div>
<div class="t" style="left:1027.0px;top:697px;line-height:10px;height:10px;font-size:9.5px;color:#9a9a9a;font-weight:normal;transform:scaleX(0.8);transform-origin:0 50%">115</div>
<div class="a" style="left:1069.4px;top:707px;width:1px;height:9px;background:#d8d8d8;"></div>
<div class="t" style="left:1071.4px;top:697px;line-height:10px;height:10px;font-size:9.5px;color:#9a9a9a;font-weight:normal;transform:scaleX(0.8);transform-origin:0 50%">120</div>
<div class="a" style="left:1088px;top:701px;width:59px;height:12.5px;background:#2b2b2b;"></div>
<div class="t" style="left:1092px;top:701.5px;line-height:12px;height:12px;font-size:10px;color:#e8e8e8;font-weight:normal;transform:scaleX(0.8);transform-origin:0 50%">1</div>
<svg class="a" style="left:1151.5px;top:700px;" width="13" height="12" viewBox="0 0 13 12"><path d="M1 1.500v9" stroke="#dcdcdc" stroke-width="1.500"/><path d="M7 1.500v9l-5-4.500zM12.500 1.500v9l-5-4.500z" fill="#dcdcdc"/></svg>
<svg class="a" style="left:1166.5px;top:700px;" width="13" height="12" viewBox="0 0 13 12"><path d="M3 1.500v9" stroke="#dcdcdc" stroke-width="1.500"/><path d="M10.500 1.500v9l-6-4.500z" fill="#dcdcdc"/></svg>
<svg class="a" style="left:1182.5px;top:700px;" width="13" height="12" viewBox="0 0 13 12"><path d="M3 1v10" stroke="#e87832" stroke-width="2"/><path d="M11 1.500v9l-6-4.500z" fill="#dcdcdc"/></svg>
<svg class="a" style="left:1197.5px;top:700px;" width="13" height="12" viewBox="0 0 13 12"><path d="M11 .5v11l-9-5.500z" fill="#dcdcdc"/></svg>
<svg class="a" style="left:1213.5px;top:700px;" width="13" height="12" viewBox="0 0 13 12"><path d="M2 .5v11l9-5.500z" fill="#dcdcdc"/></svg>
<svg class="a" style="left:1228.5px;top:700px;" width="13" height="12" viewBox="0 0 13 12"><path d="M10 1v10" stroke="#e87832" stroke-width="2"/><path d="M2 1.500v9l6-4.500z" fill="#dcdcdc"/></svg>
<svg class="a" style="left:1243.5px;top:700px;" width="13" height="12" viewBox="0 0 13 12"><path d="M10 1.500v9" stroke="#dcdcdc" stroke-width="1.500"/><path d="M2.500 1.500v9l6-4.500z" fill="#dcdcdc"/></svg>
<svg class="a" style="left:1258.5px;top:700px;" width="13" height="12" viewBox="0 0 13 12"><path d="M12 1.500v9" stroke="#dcdcdc" stroke-width="1.500"/><path d="M.5 1.500v9l5-4.500zM6 1.500v9l5-4.500z" fill="#dcdcdc"/></svg>
<div class="a" style="left:3px;top:722px;width:3px;height:20px;background:transparent;background-image:radial-gradient(#5a5a5a 0.600px,transparent 0.800px);background-size:2px 2px"></div>
<div class="a" style="left:9px;top:724px;width:58px;height:16px;background:#2b2b2b;"></div>
<div class="t" style="left:13px;top:726px;line-height:12px;height:12px;font-size:10.5px;color:#e8e8e8;font-weight:normal;transform:scaleX(0.8);transform-origin:0 50%">1</div>
<div class="a" style="left:73px;top:724px;width:58px;height:16px;background:#2b2b2b;"></div>
<div class="t" style="left:77px;top:726px;line-height:12px;height:12px;font-size:10.5px;color:#e8e8e8;font-weight:normal;transform:scaleX(0.8);transform-origin:0 50%">1</div>
<div class="a" style="left:137px;top:723px;width:640px;height:18px;background:#3c3c3c;"></div>
<div class="a" style="left:139px;top:725px;width:385px;height:14px;background:#626262;border-radius:3px"></div>
<div class="a" style="left:141px;top:727px;width:10px;height:10px;background:#a8a8a8;border-radius:2px"></div>
<div class="a" style="left:511px;top:727px;width:10px;height:10px;background:#a8a8a8;border-radius:2px"></div>
<div class="t" style="left:155px;top:726px;line-height:12px;height:12px;font-size:10.5px;color:#f0f0f0;font-weight:normal;transform:scaleX(0.8);transform-origin:0 50%">1</div>
<div class="t" style="left:494px;top:726px;line-height:12px;height:12px;font-size:10.5px;color:#f0f0f0;font-weight:normal;transform:scaleX(0.8);transform-origin:0 50%">120</div>
<div class="a" style="left:777px;top:724px;width:58px;height:16px;background:#2b2b2b;"></div>
<div class="t" style="left:781px;top:726px;line-height:12px;height:12px;font-size:10.5px;color:#e8e8e8;font-weight:normal;transform:scaleX(0.8);transform-origin:0 50%">120</div>
<div class="a" style="left:841px;top:724px;width:58px;height:16px;background:#2b2b2b;"></div>
<div class="t" style="left:845px;top:726px;line-height:12px;height:12px;font-size:10.5px;color:#e8e8e8;font-weight:normal;transform:scaleX(0.8);transform-origin:0 50%">200</div>
<div class="a" style="left:903px;top:725px;width:2px;height:14px;background:#8a8a8a;"></div>
<svg class="a" style="left:913px;top:730px;" width="7" height="4" viewBox="0 0 7 4"><path d="M0 0h7l-3.500 4z" fill="#888"/></svg>
<div class="a" style="left:925px;top:724px;width:79px;height:16px;background:#4a4a4a;border:1px solid #3a3a3a"></div>
<div class="t" style="left:928px;top:726px;width:99.8px;text-align:justify;text-align-last:justify;text-justify:inter-character;line-height:12px;height:12px;font-size:9.5px;color:#e0e0e0;font-weight:bold;transform:scaleX(0.581);transform-origin:0 50%">キャラクタ セットなし</div>
<svg class="a" style="left:1011px;top:730px;" width="7" height="4" viewBox="0 0 7 4"><path d="M0 0h7l-3.500 4z" fill="#888"/></svg>
<div class="a" style="left:1022px;top:724px;width:95px;height:16px;background:#4a4a4a;border:1px solid #3a3a3a"></div>
<div class="t" style="left:1026px;top:726px;width:119.2px;text-align:justify;text-align-last:justify;text-justify:inter-character;line-height:12px;height:12px;font-size:9.5px;color:#e0e0e0;font-weight:bold;transform:scaleX(0.621);transform-origin:0 50%">アニメーション レイヤなし</div>
<div class="a" style="left:1124px;top:725px;width:2px;height:14px;background:#8a8a8a;"></div>
<div class="a" style="left:1133px;top:724px;width:70px;height:16px;background:#5d5d5d;border-radius:1px"></div>
<div class="a" style="left:1189px;top:724px;width:1px;height:16px;background:#505050;"></div>
<div class="t" style="left:1137px;top:726px;line-height:12px;height:12px;font-size:10.5px;color:#f0f0f0;font-weight:normal;transform:scaleX(0.8);transform-origin:0 50%">24 fps</div>
<svg class="a" style="left:1192px;top:730px;" width="8" height="5" viewBox="0 0 8 5"><path d="M0 0h8l-4 5z" fill="#ddd"/></svg>
<svg class="a" style="left:1210px;top:726px;" width="14" height="12" viewBox="0 0 14 12"><path d="M3 4h7a2 2 0 0 1 0 5h-6a2 2 0 0 1 0-5" fill="none" stroke="#dcdcdc" stroke-width="1.300"/><path d="M9 1.500l3 2.500-3 2.500z" fill="#dcdcdc"/></svg>
<div class="a" style="left:1231px;top:726px;width:1px;height:12px;background:#888;"></div>
<svg class="a" style="left:1239px;top:725px;" width="14" height="14" viewBox="0 0 14 14"><circle cx="7" cy="7" r="5.500" fill="none" stroke="#dcdcdc" stroke-width="1.200"/><path d="M7 3.500v4.500" stroke="#e87832" stroke-width="1.600"/><circle cx="7" cy="10" r="1" fill="#e87832"/></svg>
<svg class="a" style="left:1257px;top:725px;" width="14" height="14" viewBox="0 0 14 14"><circle cx="8" cy="3" r="2" fill="#e87832"/><path d="M8 5l-2 4 3 2-1 3M6 9l-3 3M7.500 6l4 2" stroke="#e87832" stroke-width="1.600" fill="none"/><path d="M1 2l3 3M4 2l-3 3" stroke="#dcdcdc" stroke-width="1"/></svg>
<div class="a" style="left:3px;top:747px;width:3px;height:18px;background:transparent;background-image:radial-gradient(#5a5a5a 0.600px,transparent 0.800px);background-size:2px 2px"></div>
<div class="t" style="left:15.5px;top:749px;line-height:12px;height:12px;font-size:10px;color:#e8e8e8;font-weight:normal;transform:scaleX(0.78);transform-origin:0 50%">MEL</div>
<div class="a" style="left:39px;top:748px;width:522px;height:14.5px;background:#2b2b2b;"></div>
<div class="a" style="left:566px;top:748px;width:692px;height:14.5px;background:#2b2b2b;"></div>
<div class="a" style="left:0px;top:719.5px;width:1280px;height:1px;background:#393939;"></div>
<div class="a" style="left:0px;top:744px;width:1280px;height:1px;background:#393939;"></div>
<div class="a" style="left:0px;top:766px;width:1280px;height:1px;background:#393939;"></div>
<svg class="a" style="left:1261px;top:749px;" width="14" height="13" viewBox="0 0 14 13"><rect x=".5" y=".5" width="13" height="12" fill="#d8d8d8"/><rect x="2" y="3" width="10" height="8" fill="#444"/><path d="M4.500 5v4M9.500 5v4M6 7h2" stroke="#d8d8d8" stroke-width="1"/></svg>
<!-- ===== DROPDOWN ===== -->
<div class="a" style="left:115px;top:17px;width:177px;height:384px;background:rgba(0,0,0,.28);filter:blur(2px)"></div>
<div class="a" style="left:113px;top:14px;width:177px;height:384px;background:#525252;border:1px solid #3c3c3c"></div>
<div class="a" style="left:114px;top:22px;width:13px;height:375px;background:#454545;"></div>
<div class="a" style="left:114px;top:15px;width:175px;height:7px;background:#4a4a4a;background-image:radial-gradient(#777 0.600px,transparent 0.800px);background-size:2px 2px"></div>
<div class="a" style="left:127px;top:60px;width:146px;height:13.5px;background:#5285a6;"></div>
<div class="t" style="left:129px;top:22px;width:77.5px;text-align:justify;text-align-last:justify;text-justify:inter-character;line-height:12px;height:12px;font-size:9.5px;color:#a2a2a2;font-weight:bold;transform:scaleX(0.594);transform-origin:0 50%">トランスフォーム</div>
<div class="a" style="left:179px;top:28px;width:107px;height:1px;background:#6a6a6a;"></div>
<div class="t" style="left:137px;top:34.5px;width:109.5px;text-align:justify;text-align-last:justify;text-justify:inter-character;line-height:12px;height:12px;font-size:9.5px;color:#f2f2f2;font-weight:bold;transform:scaleX(0.612);transform-origin:0 50%">トランスフォーム ツール</div>
<svg class="a" style="left:279.5px;top:38.0px;" width="3.5" height="5.5" viewBox="0 0 3.5 5.5"><path d="M0 0l3.500 2.750-3.500 2.750z" fill="#eee"/></svg>
<div class="t" style="left:137px;top:47.5px;width:126.0px;text-align:justify;text-align-last:justify;text-justify:inter-character;line-height:12px;height:12px;font-size:9.5px;color:#f2f2f2;font-weight:bold;transform:scaleX(0.587);transform-origin:0 50%">トランスフォームのリセット</div>
<div class="a" style="left:277px;top:49.5px;width:8px;height:8px;background:transparent;border:1px solid #b8b8b8"></div>
<div class="t" style="left:137px;top:60.8px;width:126.0px;text-align:justify;text-align-last:justify;text-justify:inter-character;line-height:12px;height:12px;font-size:9.5px;color:#f2f2f2;font-weight:bold;transform:scaleX(0.594);transform-origin:0 50%">トランスフォームのフリーズ</div>
<div class="a" style="left:277px;top:62.8px;width:8px;height:8px;background:transparent;border:1px solid #b8b8b8"></div>
<div class="t" style="left:137px;top:74px;width:48.5px;text-align:justify;text-align-last:justify;text-justify:inter-character;line-height:12px;height:12px;font-size:9.5px;color:#f2f2f2;font-weight:bold;transform:scaleX(0.751);transform-origin:0 50%">変換と一致</div>
<svg class="a" style="left:279.5px;top:77.5px;" width="3.5" height="5.5" viewBox="0 0 3.5 5.5"><path d="M0 0l3.500 2.750-3.500 2.750z" fill="#eee"/></svg>
<div class="t" style="left:129px;top:85px;width:38.8px;text-align:justify;text-align-last:justify;text-justify:inter-character;line-height:12px;height:12px;font-size:9.5px;color:#a2a2a2;font-weight:bold;transform:scaleX(0.567);transform-origin:0 50%">ピボット</div>
<div class="a" style="left:155px;top:91px;width:131px;height:1px;background:#6a6a6a;"></div>
<div class="t" style="left:137px;top:97.5px;width:138.6px;text-align:justify;text-align-last:justify;text-justify:inter-character;line-height:12px;height:12px;font-size:9.5px;color:#f2f2f2;font-weight:bold;transform:scaleX(0.661);transform-origin:0 50%">中央にピボット ポイントを移動</div>
<div class="t" style="left:137px;top:110.8px;width:96.9px;text-align:justify;text-align-last:justify;text-justify:inter-character;line-height:12px;height:12px;font-size:9.5px;color:#f2f2f2;font-weight:bold;transform:scaleX(0.641);transform-origin:0 50%">ピボットをベイク処理</div>
<div class="a" style="left:277px;top:112.8px;width:8px;height:8px;background:transparent;border:1px solid #b8b8b8"></div>
<div class="t" style="left:129px;top:122px;width:48.5px;text-align:justify;text-align-last:justify;text-justify:inter-character;line-height:12px;height:12px;font-size:9.5px;color:#a2a2a2;font-weight:bold;transform:scaleX(0.763);transform-origin:0 50%">位置合わせ</div>
<div class="a" style="left:170px;top:128px;width:116px;height:1px;background:#6a6a6a;"></div>
<div class="t" style="left:137px;top:134px;width:155.0px;text-align:justify;text-align-last:justify;text-justify:inter-character;line-height:12px;height:12px;font-size:9.5px;color:#f2f2f2;font-weight:bold;transform:scaleX(0.642);transform-origin:0 50%">オブジェクトのスナップ位置合わせ</div>
<svg class="a" style="left:279.5px;top:137.5px;" width="3.5" height="5.5" viewBox="0 0 3.5 5.5"><path d="M0 0l3.500 2.750-3.500 2.750z" fill="#eee"/></svg>
<div class="t" style="left:137px;top:147.3px;width:77.5px;text-align:justify;text-align-last:justify;text-justify:inter-character;line-height:12px;height:12px;font-size:9.5px;color:#f2f2f2;font-weight:bold;transform:scaleX(0.724);transform-origin:0 50%">位置合わせツール</div>
<div class="t" style="left:137px;top:160.8px;width:90.1px;text-align:justify;text-align-last:justify;text-justify:inter-character;line-height:12px;height:12px;font-size:9.5px;color:#f2f2f2;font-weight:bold;transform:scaleX(0.667);transform-origin:0 50%">同時スナップ ツール</div>
<div class="a" style="left:277px;top:162.8px;width:8px;height:8px;background:transparent;border:1px solid #b8b8b8"></div>
<div class="t" style="left:129px;top:172px;width:29.1px;text-align:justify;text-align-last:justify;text-justify:inter-character;line-height:12px;height:12px;font-size:9.5px;color:#a2a2a2;font-weight:bold;transform:scaleX(0.619);transform-origin:0 50%">ノード</div>
<div class="a" style="left:151px;top:178px;width:135px;height:1px;background:#6a6a6a;"></div>
<div class="t" style="left:137px;top:184px;width:58.1px;text-align:justify;text-align-last:justify;text-justify:inter-character;line-height:12px;height:12px;font-size:9.5px;color:#f2f2f2;font-weight:bold;transform:scaleX(0.678);transform-origin:0 50%">ノードの評価</div>
<svg class="a" style="left:279.5px;top:187.5px;" width="3.5" height="5.5" viewBox="0 0 3.5 5.5"><path d="M0 0l3.500 2.750-3.500 2.750z" fill="#eee"/></svg>
<div class="t" style="left:129px;top:195.5px;width:19.4px;text-align:justify;text-align-last:justify;text-justify:inter-character;line-height:12px;height:12px;font-size:9.5px;color:#a2a2a2;font-weight:bold;transform:scaleX(0.773);transform-origin:0 50%">命名</div>
<div class="a" style="left:148px;top:201.5px;width:138px;height:1px;background:#6a6a6a;"></div>
<div class="t" style="left:137px;top:207.3px;width:153.1px;text-align:justify;text-align-last:justify;text-justify:inter-character;line-height:12px;height:12px;font-size:9.5px;color:#f2f2f2;font-weight:bold;transform:scaleX(0.618);transform-origin:0 50%">階層名にプリフィックスを付加...</div>
<div class="t" style="left:137px;top:220.5px;width:104.7px;text-align:justify;text-align-last:justify;text-justify:inter-character;line-height:12px;height:12px;font-size:9.5px;color:#f2f2f2;font-weight:bold;transform:scaleX(0.687);transform-origin:0 50%">名前を検索して置換...</div>
<div class="t" style="left:129px;top:232px;width:67.8px;text-align:justify;text-align-last:justify;text-justify:inter-character;line-height:12px;height:12px;font-size:9.5px;color:#a2a2a2;font-weight:bold;transform:scaleX(0.575);transform-origin:0 50%">アトリビュート</div>
<div class="a" style="left:172px;top:238px;width:114px;height:1px;background:#6a6a6a;"></div>
<div class="t" style="left:137px;top:244px;width:114.3px;text-align:justify;text-align-last:justify;text-justify:inter-character;line-height:12px;height:12px;font-size:9.5px;color:#f2f2f2;font-weight:bold;transform:scaleX(0.595);transform-origin:0 50%">アトリビュートの追加...</div>
<div class="t" style="left:137px;top:257.3px;width:114.3px;text-align:justify;text-align-last:justify;text-justify:inter-character;line-height:12px;height:12px;font-size:9.5px;color:#f2f2f2;font-weight:bold;transform:scaleX(0.595);transform-origin:0 50%">アトリビュートの編集...</div>
<div class="t" style="left:137px;top:270.6px;width:114.3px;text-align:justify;text-align-last:justify;text-justify:inter-character;line-height:12px;height:12px;font-size:9.5px;color:#f2f2f2;font-weight:bold;transform:scaleX(0.595);transform-origin:0 50%">アトリビュートの削除...</div>
<div class="t" style="left:129px;top:282px;width:58.1px;text-align:justify;text-align-last:justify;text-justify:inter-character;line-height:12px;height:12px;font-size:9.5px;color:#a2a2a2;font-weight:bold;transform:scaleX(0.568);transform-origin:0 50%">オブジェクト</div>
<div class="a" style="left:166px;top:288px;width:120px;height:1px;background:#6a6a6a;"></div>
<div class="t" style="left:137px;top:294px;width:109.5px;text-align:justify;text-align-last:justify;text-justify:inter-character;line-height:12px;height:12px;font-size:9.5px;color:#f2f2f2;font-weight:bold;transform:scaleX(0.612);transform-origin:0 50%">ライブ サーフェスにする</div>
<div class="t" style="left:137px;top:307.3px;width:106.6px;text-align:justify;text-align-last:justify;text-justify:inter-character;line-height:12px;height:12px;font-size:9.5px;color:#f2f2f2;font-weight:bold;transform:scaleX(0.638);transform-origin:0 50%">オブジェクトの置き換え</div>
<div class="a" style="left:277px;top:309.3px;width:8px;height:8px;background:transparent;border:1px solid #b8b8b8"></div>
<div class="a" style="left:129px;top:322px;width:157px;height:1px;background:#6a6a6a;"></div>
<div class="t" style="left:137px;top:324px;width:19.4px;text-align:justify;text-align-last:justify;text-justify:inter-character;line-height:12px;height:12px;font-size:9.5px;color:#f2f2f2;font-weight:bold;transform:scaleX(0.814);transform-origin:0 50%">変換</div>
<svg class="a" style="left:279.5px;top:327.5px;" width="3.5" height="5.5" viewBox="0 0 3.5 5.5"><path d="M0 0l3.500 2.750-3.500 2.750z" fill="#eee"/></svg>
<div class="t" style="left:129px;top:336px;width:70.7px;text-align:justify;text-align-last:justify;text-justify:inter-character;line-height:12px;height:12px;font-size:9.5px;color:#a2a2a2;font-weight:bold;transform:scaleX(0.594);transform-origin:0 50%">ペイント ツール</div>
<div class="a" style="left:175px;top:342px;width:111px;height:1px;background:#6a6a6a;"></div>
<div class="t" style="left:137px;top:348px;width:122.1px;text-align:justify;text-align-last:justify;text-justify:inter-character;line-height:12px;height:12px;font-size:9.5px;color:#f2f2f2;font-weight:bold;transform:scaleX(0.613);transform-origin:0 50%">ペイント スクリプト ツール</div>
<div class="a" style="left:277px;top:350px;width:8px;height:8px;background:transparent;border:1px solid #b8b8b8"></div>
<div class="t" style="left:137px;top:361.3px;width:141.5px;text-align:justify;text-align-last:justify;text-justify:inter-character;line-height:12px;height:12px;font-size:9.5px;color:#f2f2f2;font-weight:bold;transform:scaleX(0.606);transform-origin:0 50%">ペイント アトリビュート ツール</div>
<div class="a" style="left:277px;top:363.3px;width:8px;height:8px;background:transparent;border:1px solid #b8b8b8"></div>
<div class="t" style="left:129px;top:372.5px;width:38.8px;text-align:justify;text-align-last:justify;text-justify:inter-character;line-height:12px;height:12px;font-size:9.5px;color:#a2a2a2;font-weight:bold;transform:scaleX(0.567);transform-origin:0 50%">アセット</div>
<div class="a" style="left:155px;top:378.5px;width:131px;height:1px;background:#6a6a6a;"></div>
<div class="t" style="left:137px;top:384px;width:38.8px;text-align:justify;text-align-last:justify;text-justify:inter-character;line-height:12px;height:12px;font-size:9.5px;color:#f2f2f2;font-weight:bold;transform:scaleX(0.559);transform-origin:0 50%">アセット</div>
<svg class="a" style="left:279.5px;top:387.5px;" width="3.5" height="5.5" viewBox="0 0 3.5 5.5"><path d="M0 0l3.500 2.750-3.500 2.750z" fill="#eee"/></svg>
<svg class="a" style="left:116px;top:149px;" width="10" height="9" viewBox="0 0 10 9"><path d="M1 8h8" stroke="#34c3c9" stroke-width="1.200"/><path d="M2.500 7v-3M5 7v-5M7.500 7v-4" stroke="#34c3c9" stroke-width="1.400"/></svg>
<svg class="a" style="left:116px;top:162px;" width="10" height="10" viewBox="0 0 10 10"><path d="M2 6a3 3 0 0 1 6 0" fill="none" stroke="#34c3c9" stroke-width="1.500"/><circle cx="2" cy="7.500" r="1.300" fill="#34c3c9"/><circle cx="8" cy="7.500" r="1.300" fill="#34c3c9"/></svg>
<svg class="a" style="left:116px;top:295px;" width="10" height="10" viewBox="0 0 10 10"><path d="M2 8a3.500 3.500 0 1 1 6-3" fill="none" stroke="#e4e4e4" stroke-width="1.600"/></svg>
<svg class="a" style="left:116px;top:349px;" width="10" height="10" viewBox="0 0 10 10"><path d="M9 1l-5 5 1 1 5-5z" fill="#e4e4e4"/><path d="M1 9h6" stroke="#34c3c9" stroke-width="1.500"/></svg>
<svg class="a" style="left:116px;top:362px;" width="10" height="10" viewBox="0 0 10 10"><path d="M9 1l-5 5 1 1 5-5z" fill="#e4e4e4"/><path d="M3 7.500h6M3 9.500h6" stroke="#34c3c9" stroke-width="1"/></svg>

</div>
</body>
</html>
